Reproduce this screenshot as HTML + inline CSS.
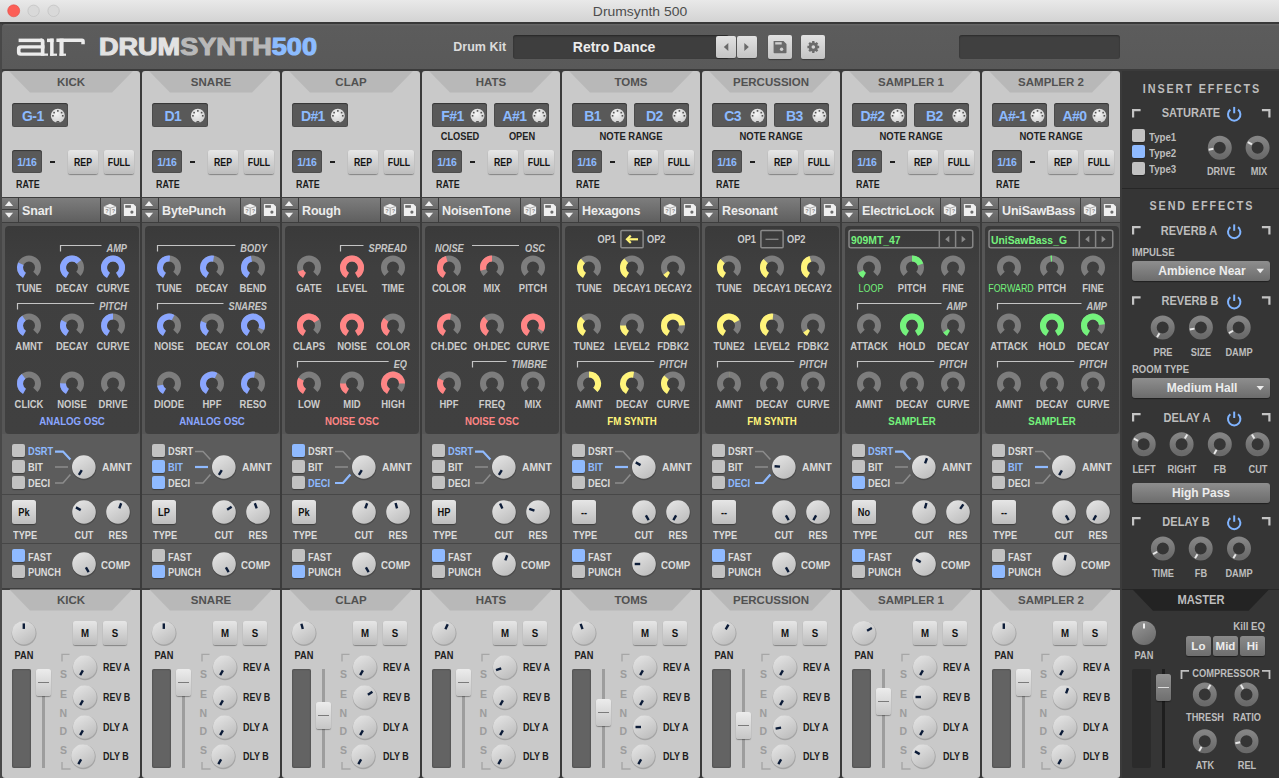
<!DOCTYPE html>
<html><head><meta charset="utf-8"><style>
html,body{margin:0;padding:0;width:1279px;height:778px;overflow:hidden;background:#3b3b3b;}
div{position:absolute;box-sizing:border-box;}
.t{white-space:nowrap;font-family:"Liberation Sans",sans-serif;}
svg{position:absolute;left:0;top:0;}
</style></head><body>
<div style="left:0px;top:0px;width:1279px;height:778px;background:#3b3b3b;border-radius:0px;"></div><div style="left:0px;top:0px;width:1279px;height:22px;background:linear-gradient(#e9e9e9,#d3d3d3);border-radius:0px;"></div><div style="left:0px;top:22px;width:1279px;height:2px;background:#383838;border-radius:0px;"></div><div style="left:0px;top:24px;width:2px;height:754px;background:#484848;border-radius:0px;"></div><div style="left:2px;top:24px;width:1277px;height:45px;background:linear-gradient(#6a6a6a,#5c5c5c 2px,#595959);border-radius:0px;border-radius:3px 0 0 0;"></div><div style="left:513.2px;top:35.2px;width:216px;height:23.4px;background:#3e3e3e;border-radius:3px;box-shadow:inset 0 1px 2px rgba(0,0,0,0.4);"></div><div style="left:716.2px;top:36px;width:19.7px;height:22.2px;background:linear-gradient(#e2e2e2,#c4c4c4);border-radius:2px;box-shadow:0 1px 1px rgba(0,0,0,0.35);"></div><div style="left:737px;top:36px;width:19.8px;height:22.2px;background:linear-gradient(#e2e2e2,#c4c4c4);border-radius:2px;box-shadow:0 1px 1px rgba(0,0,0,0.35);"></div><div style="left:767.9px;top:35.2px;width:23.8px;height:23.7px;background:linear-gradient(#e2e2e2,#c4c4c4);border-radius:2px;box-shadow:0 1px 1px rgba(0,0,0,0.35);"></div><div style="left:801.4px;top:35.2px;width:23.9px;height:23.7px;background:linear-gradient(#e2e2e2,#c4c4c4);border-radius:2px;box-shadow:0 1px 1px rgba(0,0,0,0.35);"></div><div style="left:959px;top:35.1px;width:161.2px;height:23.9px;background:#404040;border-radius:3px;box-shadow:inset 0 1px 2px rgba(0,0,0,0.35);"></div><div style="left:2px;top:71px;width:138px;height:126px;background:#c9c9c9;border-radius:0px;border-radius:3px 3px 0 0;"></div><div style="left:12.25px;top:103px;width:55.6px;height:23.9px;background:#595959;border-radius:2.5px;box-shadow:inset 0 1px 1px rgba(0,0,0,0.3), inset 0 0 0 1px rgba(0,0,0,0.12);"></div><div style="left:12px;top:150px;width:29.7px;height:23.3px;background:#595959;border-radius:2.5px;box-shadow:inset 0 1px 1px rgba(0,0,0,0.3), inset 0 0 0 1px rgba(0,0,0,0.12);"></div><div style="left:50px;top:161px;width:5px;height:2.2px;background:#1e1e1e;border-radius:0px;"></div><div style="left:67.5px;top:150px;width:30.5px;height:24px;background:linear-gradient(#e6e6e6,#bdbdbd);border-radius:2.5px;box-shadow:0 1px 1px rgba(0,0,0,0.35);"></div><div style="left:103.7px;top:150px;width:30px;height:24px;background:linear-gradient(#e6e6e6,#bdbdbd);border-radius:2.5px;box-shadow:0 1px 1px rgba(0,0,0,0.35);"></div><div style="left:2px;top:197px;width:138px;height:26px;background:#3d3d3d;border-radius:0px;"></div><div style="left:2px;top:198px;width:16px;height:11px;background:linear-gradient(#7c7c7c,#6a6a6a);border-radius:0px;"></div><div style="left:2px;top:210px;width:16px;height:12px;background:linear-gradient(#747474,#626262);border-radius:0px;"></div><div style="left:19px;top:198px;width:81px;height:24px;background:linear-gradient(#7d7d7d,#5f5f5f);border-radius:0px;"></div><div style="left:101px;top:198px;width:19px;height:24px;background:linear-gradient(#7d7d7d,#5f5f5f);border-radius:0px;"></div><div style="left:121px;top:198px;width:19px;height:24px;background:linear-gradient(#7d7d7d,#5f5f5f);border-radius:0px;"></div><div style="left:2px;top:223px;width:138px;height:366px;background:#565656;border-radius:0px;"></div><div style="left:5.4px;top:226.2px;width:133.4px;height:207.8px;background:linear-gradient(#3a3a3a,#3f3f3f 20%,#404040);border-radius:4px;"></div><div style="left:2px;top:434px;width:138px;height:154px;background:#5c5c5c;border-radius:0px;"></div><div style="left:2px;top:494px;width:138px;height:1px;background:#474747;border-radius:0px;"></div><div style="left:2px;top:543px;width:138px;height:1px;background:#474747;border-radius:0px;"></div><div style="left:2px;top:587.5px;width:138px;height:2px;background:#3e3e3e;border-radius:0px;"></div><div style="left:12px;top:444px;width:13px;height:13px;background:#c2c2c2;border-radius:2px;box-shadow:0 1px 1px rgba(0,0,0,0.35);"></div><div style="left:12px;top:460px;width:13px;height:13px;background:#c2c2c2;border-radius:2px;box-shadow:0 1px 1px rgba(0,0,0,0.35);"></div><div style="left:12px;top:476px;width:13px;height:13px;background:#c2c2c2;border-radius:2px;box-shadow:0 1px 1px rgba(0,0,0,0.35);"></div><div style="left:12px;top:500.2px;width:24px;height:24px;background:linear-gradient(#e6e6e6,#bdbdbd);border-radius:2.5px;box-shadow:0 1px 1px rgba(0,0,0,0.35);"></div><div style="left:12px;top:549.4px;width:13px;height:13px;background:#8fbaff;border-radius:2px;box-shadow:0 1px 1px rgba(0,0,0,0.35);"></div><div style="left:12px;top:565.0px;width:13px;height:13px;background:#c2c2c2;border-radius:2px;box-shadow:0 1px 1px rgba(0,0,0,0.35);"></div><div style="left:2px;top:589.5px;width:138px;height:188.5px;background:#c9c9c9;border-radius:0px;border-radius:0 0 3px 3px;"></div><div style="left:73px;top:621px;width:24px;height:24px;background:linear-gradient(#e6e6e6,#bdbdbd);border-radius:2.5px;box-shadow:0 1px 1px rgba(0,0,0,0.35);"></div><div style="left:102.8px;top:621px;width:24.2px;height:24px;background:linear-gradient(#e6e6e6,#bdbdbd);border-radius:2.5px;box-shadow:0 1px 1px rgba(0,0,0,0.35);"></div><div style="left:12px;top:669px;width:19px;height:99px;background:#636363;border-radius:2px;box-shadow:inset 0 0 2px rgba(0,0,0,0.45);"></div><div style="left:42.2px;top:669px;width:2.8px;height:99px;background:#9d9d9d;border-radius:0px;"></div><div style="left:36px;top:668.8px;width:14.8px;height:27.3px;background:linear-gradient(#ececec,#c6c6c6);border-radius:2.5px;box-shadow:0 1px 1px rgba(0,0,0,0.35);"></div><div style="left:38px;top:682.1999999999999px;width:10.8px;height:1px;background:#7a7a7a;border-radius:0px;"></div><div style="left:142px;top:71px;width:138px;height:126px;background:#c9c9c9;border-radius:0px;border-radius:3px 3px 0 0;"></div><div style="left:152.25px;top:103px;width:55.6px;height:23.9px;background:#595959;border-radius:2.5px;box-shadow:inset 0 1px 1px rgba(0,0,0,0.3), inset 0 0 0 1px rgba(0,0,0,0.12);"></div><div style="left:152px;top:150px;width:29.7px;height:23.3px;background:#595959;border-radius:2.5px;box-shadow:inset 0 1px 1px rgba(0,0,0,0.3), inset 0 0 0 1px rgba(0,0,0,0.12);"></div><div style="left:190px;top:161px;width:5px;height:2.2px;background:#1e1e1e;border-radius:0px;"></div><div style="left:207.5px;top:150px;width:30.5px;height:24px;background:linear-gradient(#e6e6e6,#bdbdbd);border-radius:2.5px;box-shadow:0 1px 1px rgba(0,0,0,0.35);"></div><div style="left:243.7px;top:150px;width:30px;height:24px;background:linear-gradient(#e6e6e6,#bdbdbd);border-radius:2.5px;box-shadow:0 1px 1px rgba(0,0,0,0.35);"></div><div style="left:142px;top:197px;width:138px;height:26px;background:#3d3d3d;border-radius:0px;"></div><div style="left:142px;top:198px;width:16px;height:11px;background:linear-gradient(#7c7c7c,#6a6a6a);border-radius:0px;"></div><div style="left:142px;top:210px;width:16px;height:12px;background:linear-gradient(#747474,#626262);border-radius:0px;"></div><div style="left:159px;top:198px;width:81px;height:24px;background:linear-gradient(#7d7d7d,#5f5f5f);border-radius:0px;"></div><div style="left:241px;top:198px;width:19px;height:24px;background:linear-gradient(#7d7d7d,#5f5f5f);border-radius:0px;"></div><div style="left:261px;top:198px;width:19px;height:24px;background:linear-gradient(#7d7d7d,#5f5f5f);border-radius:0px;"></div><div style="left:142px;top:223px;width:138px;height:366px;background:#565656;border-radius:0px;"></div><div style="left:145.4px;top:226.2px;width:133.4px;height:207.8px;background:linear-gradient(#3a3a3a,#3f3f3f 20%,#404040);border-radius:4px;"></div><div style="left:142px;top:434px;width:138px;height:154px;background:#5c5c5c;border-radius:0px;"></div><div style="left:142px;top:494px;width:138px;height:1px;background:#474747;border-radius:0px;"></div><div style="left:142px;top:543px;width:138px;height:1px;background:#474747;border-radius:0px;"></div><div style="left:142px;top:587.5px;width:138px;height:2px;background:#3e3e3e;border-radius:0px;"></div><div style="left:152px;top:444px;width:13px;height:13px;background:#c2c2c2;border-radius:2px;box-shadow:0 1px 1px rgba(0,0,0,0.35);"></div><div style="left:152px;top:460px;width:13px;height:13px;background:#8fbaff;border-radius:2px;box-shadow:0 1px 1px rgba(0,0,0,0.35);"></div><div style="left:152px;top:476px;width:13px;height:13px;background:#8fbaff;border-radius:2px;box-shadow:0 1px 1px rgba(0,0,0,0.35);"></div><div style="left:152px;top:500.2px;width:24px;height:24px;background:linear-gradient(#e6e6e6,#bdbdbd);border-radius:2.5px;box-shadow:0 1px 1px rgba(0,0,0,0.35);"></div><div style="left:152px;top:549.4px;width:13px;height:13px;background:#c2c2c2;border-radius:2px;box-shadow:0 1px 1px rgba(0,0,0,0.35);"></div><div style="left:152px;top:565.0px;width:13px;height:13px;background:#8fbaff;border-radius:2px;box-shadow:0 1px 1px rgba(0,0,0,0.35);"></div><div style="left:142px;top:589.5px;width:138px;height:188.5px;background:#c9c9c9;border-radius:0px;border-radius:0 0 3px 3px;"></div><div style="left:213px;top:621px;width:24px;height:24px;background:linear-gradient(#e6e6e6,#bdbdbd);border-radius:2.5px;box-shadow:0 1px 1px rgba(0,0,0,0.35);"></div><div style="left:242.8px;top:621px;width:24.2px;height:24px;background:linear-gradient(#e6e6e6,#bdbdbd);border-radius:2.5px;box-shadow:0 1px 1px rgba(0,0,0,0.35);"></div><div style="left:152px;top:669px;width:19px;height:99px;background:#636363;border-radius:2px;box-shadow:inset 0 0 2px rgba(0,0,0,0.45);"></div><div style="left:182.2px;top:669px;width:2.8px;height:99px;background:#9d9d9d;border-radius:0px;"></div><div style="left:176px;top:668.8px;width:14.8px;height:27.3px;background:linear-gradient(#ececec,#c6c6c6);border-radius:2.5px;box-shadow:0 1px 1px rgba(0,0,0,0.35);"></div><div style="left:178px;top:682.1999999999999px;width:10.8px;height:1px;background:#7a7a7a;border-radius:0px;"></div><div style="left:282px;top:71px;width:138px;height:126px;background:#c9c9c9;border-radius:0px;border-radius:3px 3px 0 0;"></div><div style="left:292.25px;top:103px;width:55.6px;height:23.9px;background:#595959;border-radius:2.5px;box-shadow:inset 0 1px 1px rgba(0,0,0,0.3), inset 0 0 0 1px rgba(0,0,0,0.12);"></div><div style="left:292px;top:150px;width:29.7px;height:23.3px;background:#595959;border-radius:2.5px;box-shadow:inset 0 1px 1px rgba(0,0,0,0.3), inset 0 0 0 1px rgba(0,0,0,0.12);"></div><div style="left:330px;top:161px;width:5px;height:2.2px;background:#1e1e1e;border-radius:0px;"></div><div style="left:347.5px;top:150px;width:30.5px;height:24px;background:linear-gradient(#e6e6e6,#bdbdbd);border-radius:2.5px;box-shadow:0 1px 1px rgba(0,0,0,0.35);"></div><div style="left:383.7px;top:150px;width:30px;height:24px;background:linear-gradient(#e6e6e6,#bdbdbd);border-radius:2.5px;box-shadow:0 1px 1px rgba(0,0,0,0.35);"></div><div style="left:282px;top:197px;width:138px;height:26px;background:#3d3d3d;border-radius:0px;"></div><div style="left:282px;top:198px;width:16px;height:11px;background:linear-gradient(#7c7c7c,#6a6a6a);border-radius:0px;"></div><div style="left:282px;top:210px;width:16px;height:12px;background:linear-gradient(#747474,#626262);border-radius:0px;"></div><div style="left:299px;top:198px;width:81px;height:24px;background:linear-gradient(#7d7d7d,#5f5f5f);border-radius:0px;"></div><div style="left:381px;top:198px;width:19px;height:24px;background:linear-gradient(#7d7d7d,#5f5f5f);border-radius:0px;"></div><div style="left:401px;top:198px;width:19px;height:24px;background:linear-gradient(#7d7d7d,#5f5f5f);border-radius:0px;"></div><div style="left:282px;top:223px;width:138px;height:366px;background:#565656;border-radius:0px;"></div><div style="left:285.4px;top:226.2px;width:133.4px;height:207.8px;background:linear-gradient(#3a3a3a,#3f3f3f 20%,#404040);border-radius:4px;"></div><div style="left:282px;top:434px;width:138px;height:154px;background:#5c5c5c;border-radius:0px;"></div><div style="left:282px;top:494px;width:138px;height:1px;background:#474747;border-radius:0px;"></div><div style="left:282px;top:543px;width:138px;height:1px;background:#474747;border-radius:0px;"></div><div style="left:282px;top:587.5px;width:138px;height:2px;background:#3e3e3e;border-radius:0px;"></div><div style="left:292px;top:444px;width:13px;height:13px;background:#8fbaff;border-radius:2px;box-shadow:0 1px 1px rgba(0,0,0,0.35);"></div><div style="left:292px;top:460px;width:13px;height:13px;background:#c2c2c2;border-radius:2px;box-shadow:0 1px 1px rgba(0,0,0,0.35);"></div><div style="left:292px;top:476px;width:13px;height:13px;background:#c2c2c2;border-radius:2px;box-shadow:0 1px 1px rgba(0,0,0,0.35);"></div><div style="left:292px;top:500.2px;width:24px;height:24px;background:linear-gradient(#e6e6e6,#bdbdbd);border-radius:2.5px;box-shadow:0 1px 1px rgba(0,0,0,0.35);"></div><div style="left:292px;top:549.4px;width:13px;height:13px;background:#c2c2c2;border-radius:2px;box-shadow:0 1px 1px rgba(0,0,0,0.35);"></div><div style="left:292px;top:565.0px;width:13px;height:13px;background:#8fbaff;border-radius:2px;box-shadow:0 1px 1px rgba(0,0,0,0.35);"></div><div style="left:282px;top:589.5px;width:138px;height:188.5px;background:#c9c9c9;border-radius:0px;border-radius:0 0 3px 3px;"></div><div style="left:353px;top:621px;width:24px;height:24px;background:linear-gradient(#e6e6e6,#bdbdbd);border-radius:2.5px;box-shadow:0 1px 1px rgba(0,0,0,0.35);"></div><div style="left:382.8px;top:621px;width:24.2px;height:24px;background:linear-gradient(#e6e6e6,#bdbdbd);border-radius:2.5px;box-shadow:0 1px 1px rgba(0,0,0,0.35);"></div><div style="left:292px;top:669px;width:19px;height:99px;background:#636363;border-radius:2px;box-shadow:inset 0 0 2px rgba(0,0,0,0.45);"></div><div style="left:322.2px;top:669px;width:2.8px;height:99px;background:#9d9d9d;border-radius:0px;"></div><div style="left:316px;top:702px;width:14.8px;height:27.3px;background:linear-gradient(#ececec,#c6c6c6);border-radius:2.5px;box-shadow:0 1px 1px rgba(0,0,0,0.35);"></div><div style="left:318px;top:715.4px;width:10.8px;height:1px;background:#7a7a7a;border-radius:0px;"></div><div style="left:422px;top:71px;width:138px;height:126px;background:#c9c9c9;border-radius:0px;border-radius:3px 3px 0 0;"></div><div style="left:431.9px;top:103px;width:55.6px;height:23.9px;background:#595959;border-radius:2.5px;box-shadow:inset 0 1px 1px rgba(0,0,0,0.3), inset 0 0 0 1px rgba(0,0,0,0.12);"></div><div style="left:493.8px;top:103px;width:55.6px;height:23.9px;background:#595959;border-radius:2.5px;box-shadow:inset 0 1px 1px rgba(0,0,0,0.3), inset 0 0 0 1px rgba(0,0,0,0.12);"></div><div style="left:432px;top:150px;width:29.7px;height:23.3px;background:#595959;border-radius:2.5px;box-shadow:inset 0 1px 1px rgba(0,0,0,0.3), inset 0 0 0 1px rgba(0,0,0,0.12);"></div><div style="left:470px;top:161px;width:5px;height:2.2px;background:#1e1e1e;border-radius:0px;"></div><div style="left:487.5px;top:150px;width:30.5px;height:24px;background:linear-gradient(#e6e6e6,#bdbdbd);border-radius:2.5px;box-shadow:0 1px 1px rgba(0,0,0,0.35);"></div><div style="left:523.7px;top:150px;width:30px;height:24px;background:linear-gradient(#e6e6e6,#bdbdbd);border-radius:2.5px;box-shadow:0 1px 1px rgba(0,0,0,0.35);"></div><div style="left:422px;top:197px;width:138px;height:26px;background:#3d3d3d;border-radius:0px;"></div><div style="left:422px;top:198px;width:16px;height:11px;background:linear-gradient(#7c7c7c,#6a6a6a);border-radius:0px;"></div><div style="left:422px;top:210px;width:16px;height:12px;background:linear-gradient(#747474,#626262);border-radius:0px;"></div><div style="left:439px;top:198px;width:81px;height:24px;background:linear-gradient(#7d7d7d,#5f5f5f);border-radius:0px;"></div><div style="left:521px;top:198px;width:19px;height:24px;background:linear-gradient(#7d7d7d,#5f5f5f);border-radius:0px;"></div><div style="left:541px;top:198px;width:19px;height:24px;background:linear-gradient(#7d7d7d,#5f5f5f);border-radius:0px;"></div><div style="left:422px;top:223px;width:138px;height:366px;background:#565656;border-radius:0px;"></div><div style="left:425.4px;top:226.2px;width:133.4px;height:207.8px;background:linear-gradient(#3a3a3a,#3f3f3f 20%,#404040);border-radius:4px;"></div><div style="left:422px;top:434px;width:138px;height:154px;background:#5c5c5c;border-radius:0px;"></div><div style="left:422px;top:494px;width:138px;height:1px;background:#474747;border-radius:0px;"></div><div style="left:422px;top:543px;width:138px;height:1px;background:#474747;border-radius:0px;"></div><div style="left:422px;top:587.5px;width:138px;height:2px;background:#3e3e3e;border-radius:0px;"></div><div style="left:432px;top:444px;width:13px;height:13px;background:#c2c2c2;border-radius:2px;box-shadow:0 1px 1px rgba(0,0,0,0.35);"></div><div style="left:432px;top:460px;width:13px;height:13px;background:#c2c2c2;border-radius:2px;box-shadow:0 1px 1px rgba(0,0,0,0.35);"></div><div style="left:432px;top:476px;width:13px;height:13px;background:#c2c2c2;border-radius:2px;box-shadow:0 1px 1px rgba(0,0,0,0.35);"></div><div style="left:432px;top:500.2px;width:24px;height:24px;background:linear-gradient(#e6e6e6,#bdbdbd);border-radius:2.5px;box-shadow:0 1px 1px rgba(0,0,0,0.35);"></div><div style="left:432px;top:549.4px;width:13px;height:13px;background:#8fbaff;border-radius:2px;box-shadow:0 1px 1px rgba(0,0,0,0.35);"></div><div style="left:432px;top:565.0px;width:13px;height:13px;background:#c2c2c2;border-radius:2px;box-shadow:0 1px 1px rgba(0,0,0,0.35);"></div><div style="left:422px;top:589.5px;width:138px;height:188.5px;background:#c9c9c9;border-radius:0px;border-radius:0 0 3px 3px;"></div><div style="left:493px;top:621px;width:24px;height:24px;background:linear-gradient(#e6e6e6,#bdbdbd);border-radius:2.5px;box-shadow:0 1px 1px rgba(0,0,0,0.35);"></div><div style="left:522.8px;top:621px;width:24.2px;height:24px;background:linear-gradient(#e6e6e6,#bdbdbd);border-radius:2.5px;box-shadow:0 1px 1px rgba(0,0,0,0.35);"></div><div style="left:432px;top:669px;width:19px;height:99px;background:#636363;border-radius:2px;box-shadow:inset 0 0 2px rgba(0,0,0,0.45);"></div><div style="left:462.2px;top:669px;width:2.8px;height:99px;background:#9d9d9d;border-radius:0px;"></div><div style="left:456px;top:668.7px;width:14.8px;height:27.3px;background:linear-gradient(#ececec,#c6c6c6);border-radius:2.5px;box-shadow:0 1px 1px rgba(0,0,0,0.35);"></div><div style="left:458px;top:682.1px;width:10.8px;height:1px;background:#7a7a7a;border-radius:0px;"></div><div style="left:562px;top:71px;width:138px;height:126px;background:#c9c9c9;border-radius:0px;border-radius:3px 3px 0 0;"></div><div style="left:571.9px;top:103px;width:55.6px;height:23.9px;background:#595959;border-radius:2.5px;box-shadow:inset 0 1px 1px rgba(0,0,0,0.3), inset 0 0 0 1px rgba(0,0,0,0.12);"></div><div style="left:633.8px;top:103px;width:55.6px;height:23.9px;background:#595959;border-radius:2.5px;box-shadow:inset 0 1px 1px rgba(0,0,0,0.3), inset 0 0 0 1px rgba(0,0,0,0.12);"></div><div style="left:572px;top:150px;width:29.7px;height:23.3px;background:#595959;border-radius:2.5px;box-shadow:inset 0 1px 1px rgba(0,0,0,0.3), inset 0 0 0 1px rgba(0,0,0,0.12);"></div><div style="left:610px;top:161px;width:5px;height:2.2px;background:#1e1e1e;border-radius:0px;"></div><div style="left:627.5px;top:150px;width:30.5px;height:24px;background:linear-gradient(#e6e6e6,#bdbdbd);border-radius:2.5px;box-shadow:0 1px 1px rgba(0,0,0,0.35);"></div><div style="left:663.7px;top:150px;width:30px;height:24px;background:linear-gradient(#e6e6e6,#bdbdbd);border-radius:2.5px;box-shadow:0 1px 1px rgba(0,0,0,0.35);"></div><div style="left:562px;top:197px;width:138px;height:26px;background:#3d3d3d;border-radius:0px;"></div><div style="left:562px;top:198px;width:16px;height:11px;background:linear-gradient(#7c7c7c,#6a6a6a);border-radius:0px;"></div><div style="left:562px;top:210px;width:16px;height:12px;background:linear-gradient(#747474,#626262);border-radius:0px;"></div><div style="left:579px;top:198px;width:81px;height:24px;background:linear-gradient(#7d7d7d,#5f5f5f);border-radius:0px;"></div><div style="left:661px;top:198px;width:19px;height:24px;background:linear-gradient(#7d7d7d,#5f5f5f);border-radius:0px;"></div><div style="left:681px;top:198px;width:19px;height:24px;background:linear-gradient(#7d7d7d,#5f5f5f);border-radius:0px;"></div><div style="left:562px;top:223px;width:138px;height:366px;background:#565656;border-radius:0px;"></div><div style="left:565.4px;top:226.2px;width:133.4px;height:207.8px;background:linear-gradient(#3a3a3a,#3f3f3f 20%,#404040);border-radius:4px;"></div><div style="left:562px;top:434px;width:138px;height:154px;background:#5c5c5c;border-radius:0px;"></div><div style="left:562px;top:494px;width:138px;height:1px;background:#474747;border-radius:0px;"></div><div style="left:562px;top:543px;width:138px;height:1px;background:#474747;border-radius:0px;"></div><div style="left:562px;top:587.5px;width:138px;height:2px;background:#3e3e3e;border-radius:0px;"></div><div style="left:572px;top:444px;width:13px;height:13px;background:#c2c2c2;border-radius:2px;box-shadow:0 1px 1px rgba(0,0,0,0.35);"></div><div style="left:572px;top:460px;width:13px;height:13px;background:#8fbaff;border-radius:2px;box-shadow:0 1px 1px rgba(0,0,0,0.35);"></div><div style="left:572px;top:476px;width:13px;height:13px;background:#c2c2c2;border-radius:2px;box-shadow:0 1px 1px rgba(0,0,0,0.35);"></div><div style="left:572px;top:500.2px;width:24px;height:24px;background:linear-gradient(#e6e6e6,#bdbdbd);border-radius:2.5px;box-shadow:0 1px 1px rgba(0,0,0,0.35);"></div><div style="left:572px;top:549.4px;width:13px;height:13px;background:#8fbaff;border-radius:2px;box-shadow:0 1px 1px rgba(0,0,0,0.35);"></div><div style="left:572px;top:565.0px;width:13px;height:13px;background:#c2c2c2;border-radius:2px;box-shadow:0 1px 1px rgba(0,0,0,0.35);"></div><div style="left:562px;top:589.5px;width:138px;height:188.5px;background:#c9c9c9;border-radius:0px;border-radius:0 0 3px 3px;"></div><div style="left:633px;top:621px;width:24px;height:24px;background:linear-gradient(#e6e6e6,#bdbdbd);border-radius:2.5px;box-shadow:0 1px 1px rgba(0,0,0,0.35);"></div><div style="left:662.8px;top:621px;width:24.2px;height:24px;background:linear-gradient(#e6e6e6,#bdbdbd);border-radius:2.5px;box-shadow:0 1px 1px rgba(0,0,0,0.35);"></div><div style="left:572px;top:669px;width:19px;height:99px;background:#636363;border-radius:2px;box-shadow:inset 0 0 2px rgba(0,0,0,0.45);"></div><div style="left:602.2px;top:669px;width:2.8px;height:99px;background:#9d9d9d;border-radius:0px;"></div><div style="left:596px;top:698.7px;width:14.8px;height:27.3px;background:linear-gradient(#ececec,#c6c6c6);border-radius:2.5px;box-shadow:0 1px 1px rgba(0,0,0,0.35);"></div><div style="left:598px;top:712.1px;width:10.8px;height:1px;background:#7a7a7a;border-radius:0px;"></div><div style="left:702px;top:71px;width:138px;height:126px;background:#c9c9c9;border-radius:0px;border-radius:3px 3px 0 0;"></div><div style="left:711.9px;top:103px;width:55.6px;height:23.9px;background:#595959;border-radius:2.5px;box-shadow:inset 0 1px 1px rgba(0,0,0,0.3), inset 0 0 0 1px rgba(0,0,0,0.12);"></div><div style="left:773.8px;top:103px;width:55.6px;height:23.9px;background:#595959;border-radius:2.5px;box-shadow:inset 0 1px 1px rgba(0,0,0,0.3), inset 0 0 0 1px rgba(0,0,0,0.12);"></div><div style="left:712px;top:150px;width:29.7px;height:23.3px;background:#595959;border-radius:2.5px;box-shadow:inset 0 1px 1px rgba(0,0,0,0.3), inset 0 0 0 1px rgba(0,0,0,0.12);"></div><div style="left:750px;top:161px;width:5px;height:2.2px;background:#1e1e1e;border-radius:0px;"></div><div style="left:767.5px;top:150px;width:30.5px;height:24px;background:linear-gradient(#e6e6e6,#bdbdbd);border-radius:2.5px;box-shadow:0 1px 1px rgba(0,0,0,0.35);"></div><div style="left:803.7px;top:150px;width:30px;height:24px;background:linear-gradient(#e6e6e6,#bdbdbd);border-radius:2.5px;box-shadow:0 1px 1px rgba(0,0,0,0.35);"></div><div style="left:702px;top:197px;width:138px;height:26px;background:#3d3d3d;border-radius:0px;"></div><div style="left:702px;top:198px;width:16px;height:11px;background:linear-gradient(#7c7c7c,#6a6a6a);border-radius:0px;"></div><div style="left:702px;top:210px;width:16px;height:12px;background:linear-gradient(#747474,#626262);border-radius:0px;"></div><div style="left:719px;top:198px;width:81px;height:24px;background:linear-gradient(#7d7d7d,#5f5f5f);border-radius:0px;"></div><div style="left:801px;top:198px;width:19px;height:24px;background:linear-gradient(#7d7d7d,#5f5f5f);border-radius:0px;"></div><div style="left:821px;top:198px;width:19px;height:24px;background:linear-gradient(#7d7d7d,#5f5f5f);border-radius:0px;"></div><div style="left:702px;top:223px;width:138px;height:366px;background:#565656;border-radius:0px;"></div><div style="left:705.4px;top:226.2px;width:133.4px;height:207.8px;background:linear-gradient(#3a3a3a,#3f3f3f 20%,#404040);border-radius:4px;"></div><div style="left:702px;top:434px;width:138px;height:154px;background:#5c5c5c;border-radius:0px;"></div><div style="left:702px;top:494px;width:138px;height:1px;background:#474747;border-radius:0px;"></div><div style="left:702px;top:543px;width:138px;height:1px;background:#474747;border-radius:0px;"></div><div style="left:702px;top:587.5px;width:138px;height:2px;background:#3e3e3e;border-radius:0px;"></div><div style="left:712px;top:444px;width:13px;height:13px;background:#c2c2c2;border-radius:2px;box-shadow:0 1px 1px rgba(0,0,0,0.35);"></div><div style="left:712px;top:460px;width:13px;height:13px;background:#c2c2c2;border-radius:2px;box-shadow:0 1px 1px rgba(0,0,0,0.35);"></div><div style="left:712px;top:476px;width:13px;height:13px;background:#c2c2c2;border-radius:2px;box-shadow:0 1px 1px rgba(0,0,0,0.35);"></div><div style="left:712px;top:500.2px;width:24px;height:24px;background:linear-gradient(#e6e6e6,#bdbdbd);border-radius:2.5px;box-shadow:0 1px 1px rgba(0,0,0,0.35);"></div><div style="left:712px;top:549.4px;width:13px;height:13px;background:#8fbaff;border-radius:2px;box-shadow:0 1px 1px rgba(0,0,0,0.35);"></div><div style="left:712px;top:565.0px;width:13px;height:13px;background:#c2c2c2;border-radius:2px;box-shadow:0 1px 1px rgba(0,0,0,0.35);"></div><div style="left:702px;top:589.5px;width:138px;height:188.5px;background:#c9c9c9;border-radius:0px;border-radius:0 0 3px 3px;"></div><div style="left:773px;top:621px;width:24px;height:24px;background:linear-gradient(#e6e6e6,#bdbdbd);border-radius:2.5px;box-shadow:0 1px 1px rgba(0,0,0,0.35);"></div><div style="left:802.8px;top:621px;width:24.2px;height:24px;background:linear-gradient(#e6e6e6,#bdbdbd);border-radius:2.5px;box-shadow:0 1px 1px rgba(0,0,0,0.35);"></div><div style="left:712px;top:669px;width:19px;height:99px;background:#636363;border-radius:2px;box-shadow:inset 0 0 2px rgba(0,0,0,0.45);"></div><div style="left:742.2px;top:669px;width:2.8px;height:99px;background:#9d9d9d;border-radius:0px;"></div><div style="left:736px;top:711.8px;width:14.8px;height:27.3px;background:linear-gradient(#ececec,#c6c6c6);border-radius:2.5px;box-shadow:0 1px 1px rgba(0,0,0,0.35);"></div><div style="left:738px;top:725.1999999999999px;width:10.8px;height:1px;background:#7a7a7a;border-radius:0px;"></div><div style="left:842px;top:71px;width:138px;height:126px;background:#c9c9c9;border-radius:0px;border-radius:3px 3px 0 0;"></div><div style="left:851.9px;top:103px;width:55.6px;height:23.9px;background:#595959;border-radius:2.5px;box-shadow:inset 0 1px 1px rgba(0,0,0,0.3), inset 0 0 0 1px rgba(0,0,0,0.12);"></div><div style="left:913.8px;top:103px;width:55.6px;height:23.9px;background:#595959;border-radius:2.5px;box-shadow:inset 0 1px 1px rgba(0,0,0,0.3), inset 0 0 0 1px rgba(0,0,0,0.12);"></div><div style="left:852px;top:150px;width:29.7px;height:23.3px;background:#595959;border-radius:2.5px;box-shadow:inset 0 1px 1px rgba(0,0,0,0.3), inset 0 0 0 1px rgba(0,0,0,0.12);"></div><div style="left:890px;top:161px;width:5px;height:2.2px;background:#1e1e1e;border-radius:0px;"></div><div style="left:907.5px;top:150px;width:30.5px;height:24px;background:linear-gradient(#e6e6e6,#bdbdbd);border-radius:2.5px;box-shadow:0 1px 1px rgba(0,0,0,0.35);"></div><div style="left:943.7px;top:150px;width:30px;height:24px;background:linear-gradient(#e6e6e6,#bdbdbd);border-radius:2.5px;box-shadow:0 1px 1px rgba(0,0,0,0.35);"></div><div style="left:842px;top:197px;width:138px;height:26px;background:#3d3d3d;border-radius:0px;"></div><div style="left:842px;top:198px;width:16px;height:11px;background:linear-gradient(#7c7c7c,#6a6a6a);border-radius:0px;"></div><div style="left:842px;top:210px;width:16px;height:12px;background:linear-gradient(#747474,#626262);border-radius:0px;"></div><div style="left:859px;top:198px;width:81px;height:24px;background:linear-gradient(#7d7d7d,#5f5f5f);border-radius:0px;"></div><div style="left:941px;top:198px;width:19px;height:24px;background:linear-gradient(#7d7d7d,#5f5f5f);border-radius:0px;"></div><div style="left:961px;top:198px;width:19px;height:24px;background:linear-gradient(#7d7d7d,#5f5f5f);border-radius:0px;"></div><div style="left:842px;top:223px;width:138px;height:366px;background:#565656;border-radius:0px;"></div><div style="left:845.4px;top:226.2px;width:133.4px;height:207.8px;background:linear-gradient(#3a3a3a,#3f3f3f 20%,#404040);border-radius:4px;"></div><div style="left:842px;top:434px;width:138px;height:154px;background:#5c5c5c;border-radius:0px;"></div><div style="left:842px;top:494px;width:138px;height:1px;background:#474747;border-radius:0px;"></div><div style="left:842px;top:543px;width:138px;height:1px;background:#474747;border-radius:0px;"></div><div style="left:842px;top:587.5px;width:138px;height:2px;background:#3e3e3e;border-radius:0px;"></div><div style="left:852px;top:444px;width:13px;height:13px;background:#c2c2c2;border-radius:2px;box-shadow:0 1px 1px rgba(0,0,0,0.35);"></div><div style="left:852px;top:460px;width:13px;height:13px;background:#c2c2c2;border-radius:2px;box-shadow:0 1px 1px rgba(0,0,0,0.35);"></div><div style="left:852px;top:476px;width:13px;height:13px;background:#8fbaff;border-radius:2px;box-shadow:0 1px 1px rgba(0,0,0,0.35);"></div><div style="left:852px;top:500.2px;width:24px;height:24px;background:linear-gradient(#e6e6e6,#bdbdbd);border-radius:2.5px;box-shadow:0 1px 1px rgba(0,0,0,0.35);"></div><div style="left:852px;top:549.4px;width:13px;height:13px;background:#8fbaff;border-radius:2px;box-shadow:0 1px 1px rgba(0,0,0,0.35);"></div><div style="left:852px;top:565.0px;width:13px;height:13px;background:#c2c2c2;border-radius:2px;box-shadow:0 1px 1px rgba(0,0,0,0.35);"></div><div style="left:842px;top:589.5px;width:138px;height:188.5px;background:#c9c9c9;border-radius:0px;border-radius:0 0 3px 3px;"></div><div style="left:913px;top:621px;width:24px;height:24px;background:linear-gradient(#e6e6e6,#bdbdbd);border-radius:2.5px;box-shadow:0 1px 1px rgba(0,0,0,0.35);"></div><div style="left:942.8px;top:621px;width:24.2px;height:24px;background:linear-gradient(#e6e6e6,#bdbdbd);border-radius:2.5px;box-shadow:0 1px 1px rgba(0,0,0,0.35);"></div><div style="left:852px;top:669px;width:19px;height:99px;background:#636363;border-radius:2px;box-shadow:inset 0 0 2px rgba(0,0,0,0.45);"></div><div style="left:882.2px;top:669px;width:2.8px;height:99px;background:#9d9d9d;border-radius:0px;"></div><div style="left:876px;top:687.7px;width:14.8px;height:27.3px;background:linear-gradient(#ececec,#c6c6c6);border-radius:2.5px;box-shadow:0 1px 1px rgba(0,0,0,0.35);"></div><div style="left:878px;top:701.1px;width:10.8px;height:1px;background:#7a7a7a;border-radius:0px;"></div><div style="left:982px;top:71px;width:138px;height:126px;background:#c9c9c9;border-radius:0px;border-radius:3px 3px 0 0;"></div><div style="left:991.9px;top:103px;width:55.6px;height:23.9px;background:#595959;border-radius:2.5px;box-shadow:inset 0 1px 1px rgba(0,0,0,0.3), inset 0 0 0 1px rgba(0,0,0,0.12);"></div><div style="left:1053.8px;top:103px;width:55.6px;height:23.9px;background:#595959;border-radius:2.5px;box-shadow:inset 0 1px 1px rgba(0,0,0,0.3), inset 0 0 0 1px rgba(0,0,0,0.12);"></div><div style="left:992px;top:150px;width:29.7px;height:23.3px;background:#595959;border-radius:2.5px;box-shadow:inset 0 1px 1px rgba(0,0,0,0.3), inset 0 0 0 1px rgba(0,0,0,0.12);"></div><div style="left:1030px;top:161px;width:5px;height:2.2px;background:#1e1e1e;border-radius:0px;"></div><div style="left:1047.5px;top:150px;width:30.5px;height:24px;background:linear-gradient(#e6e6e6,#bdbdbd);border-radius:2.5px;box-shadow:0 1px 1px rgba(0,0,0,0.35);"></div><div style="left:1083.7px;top:150px;width:30px;height:24px;background:linear-gradient(#e6e6e6,#bdbdbd);border-radius:2.5px;box-shadow:0 1px 1px rgba(0,0,0,0.35);"></div><div style="left:982px;top:197px;width:138px;height:26px;background:#3d3d3d;border-radius:0px;"></div><div style="left:982px;top:198px;width:16px;height:11px;background:linear-gradient(#7c7c7c,#6a6a6a);border-radius:0px;"></div><div style="left:982px;top:210px;width:16px;height:12px;background:linear-gradient(#747474,#626262);border-radius:0px;"></div><div style="left:999px;top:198px;width:81px;height:24px;background:linear-gradient(#7d7d7d,#5f5f5f);border-radius:0px;"></div><div style="left:1081px;top:198px;width:19px;height:24px;background:linear-gradient(#7d7d7d,#5f5f5f);border-radius:0px;"></div><div style="left:1101px;top:198px;width:19px;height:24px;background:linear-gradient(#7d7d7d,#5f5f5f);border-radius:0px;"></div><div style="left:982px;top:223px;width:138px;height:366px;background:#565656;border-radius:0px;"></div><div style="left:985.4px;top:226.2px;width:133.4px;height:207.8px;background:linear-gradient(#3a3a3a,#3f3f3f 20%,#404040);border-radius:4px;"></div><div style="left:982px;top:434px;width:138px;height:154px;background:#5c5c5c;border-radius:0px;"></div><div style="left:982px;top:494px;width:138px;height:1px;background:#474747;border-radius:0px;"></div><div style="left:982px;top:543px;width:138px;height:1px;background:#474747;border-radius:0px;"></div><div style="left:982px;top:587.5px;width:138px;height:2px;background:#3e3e3e;border-radius:0px;"></div><div style="left:992px;top:444px;width:13px;height:13px;background:#c2c2c2;border-radius:2px;box-shadow:0 1px 1px rgba(0,0,0,0.35);"></div><div style="left:992px;top:460px;width:13px;height:13px;background:#c2c2c2;border-radius:2px;box-shadow:0 1px 1px rgba(0,0,0,0.35);"></div><div style="left:992px;top:476px;width:13px;height:13px;background:#c2c2c2;border-radius:2px;box-shadow:0 1px 1px rgba(0,0,0,0.35);"></div><div style="left:992px;top:500.2px;width:24px;height:24px;background:linear-gradient(#e6e6e6,#bdbdbd);border-radius:2.5px;box-shadow:0 1px 1px rgba(0,0,0,0.35);"></div><div style="left:992px;top:549.4px;width:13px;height:13px;background:#c2c2c2;border-radius:2px;box-shadow:0 1px 1px rgba(0,0,0,0.35);"></div><div style="left:992px;top:565.0px;width:13px;height:13px;background:#8fbaff;border-radius:2px;box-shadow:0 1px 1px rgba(0,0,0,0.35);"></div><div style="left:982px;top:589.5px;width:138px;height:188.5px;background:#c9c9c9;border-radius:0px;border-radius:0 0 3px 3px;"></div><div style="left:1053px;top:621px;width:24px;height:24px;background:linear-gradient(#e6e6e6,#bdbdbd);border-radius:2.5px;box-shadow:0 1px 1px rgba(0,0,0,0.35);"></div><div style="left:1082.8px;top:621px;width:24.2px;height:24px;background:linear-gradient(#e6e6e6,#bdbdbd);border-radius:2.5px;box-shadow:0 1px 1px rgba(0,0,0,0.35);"></div><div style="left:992px;top:669px;width:19px;height:99px;background:#636363;border-radius:2px;box-shadow:inset 0 0 2px rgba(0,0,0,0.45);"></div><div style="left:1022.2px;top:669px;width:2.8px;height:99px;background:#9d9d9d;border-radius:0px;"></div><div style="left:1016px;top:668.7px;width:14.8px;height:27.3px;background:linear-gradient(#ececec,#c6c6c6);border-radius:2.5px;box-shadow:0 1px 1px rgba(0,0,0,0.35);"></div><div style="left:1018px;top:682.1px;width:10.8px;height:1px;background:#7a7a7a;border-radius:0px;"></div><div style="left:1122px;top:71px;width:157px;height:707px;background:#353535;border-radius:0px;"></div><div style="left:1132px;top:129.3px;width:13px;height:13px;background:#c2c2c2;border-radius:2px;box-shadow:0 1px 1px rgba(0,0,0,0.35);"></div><div style="left:1132px;top:145.4px;width:13px;height:13px;background:#8fbaff;border-radius:2px;box-shadow:0 1px 1px rgba(0,0,0,0.35);"></div><div style="left:1132px;top:161.5px;width:13px;height:13px;background:#c2c2c2;border-radius:2px;box-shadow:0 1px 1px rgba(0,0,0,0.35);"></div><div style="left:1122px;top:188px;width:157px;height:1.2px;background:#262626;border-radius:0px;"></div><div style="left:1132px;top:261.1px;width:137.8px;height:19.7px;background:linear-gradient(#8e8e8e,#6c6c6c);border-radius:3px;box-shadow:0 1px 1px rgba(0,0,0,0.4);"></div><div style="left:1132px;top:378px;width:137.8px;height:20.2px;background:linear-gradient(#8e8e8e,#6c6c6c);border-radius:3px;box-shadow:0 1px 1px rgba(0,0,0,0.4);"></div><div style="left:1132px;top:483.1px;width:138px;height:19.7px;background:linear-gradient(#8e8e8e,#6c6c6c);border-radius:3px;box-shadow:0 1px 1px rgba(0,0,0,0.4);"></div><div style="left:1122px;top:588.5px;width:157px;height:1px;background:#272727;border-radius:0px;"></div><div style="left:1186px;top:636.3px;width:24.8px;height:19.4px;background:linear-gradient(#8a8a8a,#6e6e6e);border-radius:2.5px;box-shadow:0 1px 1px rgba(0,0,0,0.4);"></div><div style="left:1213px;top:636.3px;width:25px;height:19.4px;background:linear-gradient(#8a8a8a,#6e6e6e);border-radius:2.5px;box-shadow:0 1px 1px rgba(0,0,0,0.4);"></div><div style="left:1240.1px;top:636.3px;width:24.8px;height:19.4px;background:linear-gradient(#8a8a8a,#6e6e6e);border-radius:2.5px;box-shadow:0 1px 1px rgba(0,0,0,0.4);"></div><div style="left:1132.3px;top:669px;width:18.4px;height:98.7px;background:#2b2b2b;border-radius:2px;"></div><div style="left:1162px;top:669px;width:3px;height:99px;background:#1e1e1e;border-radius:0px;"></div><div style="left:1156px;top:674px;width:15px;height:27px;background:linear-gradient(#939393,#6f6f6f);border-radius:2.5px;box-shadow:0 1px 1px rgba(0,0,0,0.4);"></div><div style="left:1158px;top:687px;width:11px;height:1.2px;background:#dcdcdc;border-radius:0px;"></div>
<svg width="1279" height="778" viewBox="0 0 1279 778"><defs>
<linearGradient id="lk" x1="0.2" y1="0" x2="0.8" y2="1"><stop offset="0" stop-color="#e4e4e4"/><stop offset="1" stop-color="#bcbcbc"/></linearGradient>
<linearGradient id="dk" x1="0" y1="0" x2="0" y2="1"><stop offset="0" stop-color="#848484"/><stop offset="1" stop-color="#6a6a6a"/></linearGradient>
<linearGradient id="mp" x1="0.2" y1="0" x2="0.8" y2="1"><stop offset="0" stop-color="#969696"/><stop offset="1" stop-color="#6a6a6a"/></linearGradient>
<radialGradient id="mi" cx="0.4" cy="0.35" r="0.7"><stop offset="0" stop-color="#f4f4f4"/><stop offset="1" stop-color="#cfcfcf"/></radialGradient>
</defs><circle cx="13.7" cy="10.8" r="6" fill="#fc5f57" stroke="#df4a43" stroke-width="0.6"/><circle cx="33.6" cy="10.8" r="5.7" fill="#d9d9d9" stroke="#c3c3c3" stroke-width="0.8"/><circle cx="53.6" cy="10.8" r="5.7" fill="#d9d9d9" stroke="#c3c3c3" stroke-width="0.8"/><rect x="18.60" y="38.60" width="23.50" height="3.50" rx="0" fill="#ececec"/><path d="M40.5,38.6 h1 a3 3 0 0 1 3,3 V55.8 h-3.7 V42.1 h-0.3 z" fill="#ececec"/><path d="M20.5,45.2 H44.5 V48.6 H21.5 a1.5 1.5 0 0 0 -1,1 V51.6 a1 1 0 0 0 1,1 H41 V53.6 H48 V55.8 H20.5 a3.6 3.6 0 0 1 -3.6,-3.6 V48.8 a3.6 3.6 0 0 1 3.6,-3.6 z" fill="#ececec"/><rect x="47.00" y="38.60" width="6.60" height="3.50" rx="0" fill="#ececec"/><rect x="50.10" y="38.60" width="3.50" height="17.20" rx="0" fill="#ececec"/><rect x="50.10" y="53.60" width="6.90" height="2.20" rx="0" fill="#ececec"/><path d="M56.4,38.6 H82 a2.8 2.8 0 0 1 2.8,2.8 V44.25 H81.3 V42.1 H56.4 z" fill="#ececec"/><rect x="59.50" y="38.60" width="4.10" height="17.20" rx="0" fill="#ececec"/><rect x="59.50" y="53.60" width="6.50" height="2.20" rx="0" fill="#ececec"/><polygon points="723.80,47.00 728.30,43.10 728.30,50.90" fill="#6a6a6a"/><polygon points="744.30,43.10 748.80,47.00 744.30,50.90" fill="#6a6a6a"/><path d="M773.6,41 H783.5 L786.5,44 V52.5 a0.8 0.8 0 0 1 -0.8,0.8 H774.4 a0.8 0.8 0 0 1 -0.8,-0.8 z" fill="#6b6b6b"/><rect x="775.2" y="42.2" width="6.5" height="2.3" fill="#d0d0d0"/><circle cx="781.6" cy="49.3" r="1.7" fill="#d0d0d0"/><polygon points="812.11,42.56 812.16,41.11 814.44,41.11 814.49,42.56 815.60,43.02 816.66,42.03 818.27,43.64 817.28,44.70 817.74,45.81 819.19,45.86 819.19,48.14 817.74,48.19 817.28,49.30 818.27,50.36 816.66,51.97 815.60,50.98 814.49,51.44 814.44,52.89 812.16,52.89 812.11,51.44 811.00,50.98 809.94,51.97 808.33,50.36 809.32,49.30 808.86,48.19 807.41,48.14 807.41,45.86 808.86,45.81 809.32,44.70 808.33,43.64 809.94,42.03 811.00,43.02" fill="#6b6b6b"/><circle cx="813.3" cy="47" r="1.8" fill="#d6d6d6"/><polygon points="9.00,71.00 133.00,71.00 112.00,92.50 30.00,92.50" fill="#b8b8b8"/><circle cx="57.85" cy="115.8" r="7" fill="url(#mi)"/><rect x="52.15" y="115.00" width="1.6" height="1.6" fill="#555"/><rect x="53.30" y="111.85" width="1.6" height="1.6" fill="#555"/><rect x="57.05" y="110.10" width="1.6" height="1.6" fill="#555"/><rect x="60.80" y="111.85" width="1.6" height="1.6" fill="#555"/><rect x="61.95" y="115.00" width="1.6" height="1.6" fill="#555"/><path d="M55.65,122.8 l1.2,-1.8 h2 l1.2,1.8 z" fill="#585858"/><polygon points="4.90,206.10 9.00,201.00 13.10,206.10" fill="#f0f0f0"/><polygon points="4.90,212.80 13.10,212.80 9.00,217.70" fill="#f0f0f0"/><path d="M110.0,203.8 L116.1,206.4 V213.4 L110.39999999999999,215.9 L103.8,213.4 V206.4 z" fill="#efefef"/><path d="M104.1,206.5 L110.2,208.20000000000002 L115.8,206.5" stroke="#8a8a8a" stroke-width="0.7" fill="none"/><line x1="110.2" y1="208.20000000000002" x2="110.2" y2="215.8" stroke="#8a8a8a" stroke-width="0.8"/><text x="106.89999999999999" y="213.3" font-size="5.5" font-weight="bold" fill="#8a8a8a" text-anchor="middle" font-family="Liberation Sans">?</text><text x="113.39999999999999" y="213.3" font-size="5.5" font-weight="bold" fill="#8a8a8a" text-anchor="middle" font-family="Liberation Sans">?</text><path d="M124.5,203.9 H133.4 L136.0,206.5 V215.5 a0.6 0.6 0 0 1 -0.6,0.6 H124.5 a0.6 0.6 0 0 1 -0.6,-0.6 V204.5 a0.6 0.6 0 0 1 0.6,-0.6 z" fill="#efefef"/><rect x="125.2" y="205.20000000000002" width="5.7" height="2.6" fill="#6a6a6a"/><circle cx="131.9" cy="212.1" r="1.6" fill="#6a6a6a"/><path d="M22.64,273.96A9,9 0 1 1 35.36,273.96" stroke="#7d7d7d" stroke-width="6" fill="none"/><path d="M24.50,275.39A9,9 0 0 1 20.84,263.80" stroke="#8aa6ff" stroke-width="6" fill="none"/><path d="M65.64,273.96A9,9 0 1 1 78.36,273.96" stroke="#7d7d7d" stroke-width="6" fill="none"/><path d="M67.50,275.39A9,9 0 1 1 78.89,261.81" stroke="#8aa6ff" stroke-width="6" fill="none"/><path d="M106.64,273.96A9,9 0 1 1 119.36,273.96" stroke="#7d7d7d" stroke-width="6" fill="none"/><path d="M108.50,275.39A9,9 0 1 1 117.50,275.39" stroke="#8aa6ff" stroke-width="6" fill="none"/><path d="M22.64,331.96A9,9 0 1 1 35.36,331.96" stroke="#7d7d7d" stroke-width="6" fill="none"/><path d="M24.50,333.39A9,9 0 0 1 23.97,318.14" stroke="#8aa6ff" stroke-width="6" fill="none"/><path d="M65.64,331.96A9,9 0 1 1 78.36,331.96" stroke="#7d7d7d" stroke-width="6" fill="none"/><path d="M67.50,333.39A9,9 0 0 1 64.05,321.37" stroke="#8aa6ff" stroke-width="6" fill="none"/><path d="M106.64,331.96A9,9 0 1 1 119.36,331.96" stroke="#7d7d7d" stroke-width="6" fill="none"/><path d="M108.50,333.39A9,9 0 0 1 113.00,316.60" stroke="#8aa6ff" stroke-width="6" fill="none"/><path d="M22.64,389.96A9,9 0 1 1 35.36,389.96" stroke="#7d7d7d" stroke-width="6" fill="none"/><path d="M24.50,391.39A9,9 0 0 1 23.58,376.41" stroke="#8aa6ff" stroke-width="6" fill="none"/><path d="M65.64,389.96A9,9 0 1 1 78.36,389.96" stroke="#7d7d7d" stroke-width="6" fill="none"/><path d="M67.50,391.39A9,9 0 0 1 63.01,383.29" stroke="#8aa6ff" stroke-width="6" fill="none"/><path d="M106.64,389.96A9,9 0 1 1 119.36,389.96" stroke="#7d7d7d" stroke-width="6" fill="none"/><polyline points="60.50,251.50 60.50,245.50 101.47,245.50" stroke="#c4c4c4" stroke-width="1.2" fill="none" stroke-linejoin="miter"/><polyline points="17.50,309.50 17.50,303.50 94.28,303.50" stroke="#c4c4c4" stroke-width="1.2" fill="none" stroke-linejoin="miter"/><polyline points="55.00,467.00 68.00,467.00" stroke="#8c8c8c" stroke-width="1.5" fill="none" stroke-linejoin="miter"/><polyline points="55.00,483.00 63.00,483.00 70.40,474.50" stroke="#8c8c8c" stroke-width="1.5" fill="none" stroke-linejoin="miter"/><polyline points="55.00,451.60 63.00,451.60 70.40,459.50" stroke="#8fbaff" stroke-width="2.2" fill="none" stroke-linejoin="miter"/><circle cx="84.10" cy="467.80" r="12.4" fill="rgba(0,0,0,0.18)"/><circle cx="83.80" cy="467.00" r="11.8" fill="url(#lk)"/><line x1="81.79" y1="470.22" x2="78.87" y2="474.89" stroke="#0c1c38" stroke-width="2.4" stroke-linecap="butt"/><circle cx="84.30" cy="512.80" r="12.4" fill="rgba(0,0,0,0.18)"/><circle cx="84.00" cy="512.00" r="11.8" fill="url(#lk)"/><line x1="80.71" y1="510.10" x2="75.95" y2="507.35" stroke="#0c1c38" stroke-width="2.4" stroke-linecap="butt"/><circle cx="118.30" cy="512.80" r="12.4" fill="rgba(0,0,0,0.18)"/><circle cx="118.00" cy="512.00" r="11.8" fill="url(#lk)"/><line x1="119.30" y1="508.43" x2="121.18" y2="503.26" stroke="#0c1c38" stroke-width="2.4" stroke-linecap="butt"/><circle cx="84.30" cy="564.80" r="12.4" fill="rgba(0,0,0,0.18)"/><circle cx="84.00" cy="564.00" r="11.8" fill="url(#lk)"/><line x1="85.90" y1="567.29" x2="88.65" y2="572.05" stroke="#0c1c38" stroke-width="2.4" stroke-linecap="butt"/><polygon points="9.60,589.50 132.00,589.50 112.00,610.60 30.00,610.60" fill="#b8b8b8"/><circle cx="24.10" cy="633.50" r="12.4" fill="rgba(0,0,0,0.18)"/><circle cx="23.80" cy="632.70" r="11.8" fill="url(#lk)"/><line x1="23.80" y1="628.90" x2="23.80" y2="623.40" stroke="#0c1c38" stroke-width="2.4" stroke-linecap="butt"/><polyline points="62.00,661.60 62.00,654.40 69.50,654.40" stroke="#a6a6a6" stroke-width="1.4" fill="none" stroke-linejoin="miter"/><polyline points="62.00,762.00 62.00,769.00 70.50,769.00" stroke="#a6a6a6" stroke-width="1.4" fill="none" stroke-linejoin="miter"/><circle cx="85.10" cy="667.80" r="12.4" fill="rgba(0,0,0,0.18)"/><circle cx="84.80" cy="667.00" r="11.8" fill="url(#lk)"/><line x1="82.90" y1="670.29" x2="80.15" y2="675.05" stroke="#0c1c38" stroke-width="2.4" stroke-linecap="butt"/><circle cx="85.10" cy="697.80" r="12.4" fill="rgba(0,0,0,0.18)"/><circle cx="84.80" cy="697.00" r="11.8" fill="url(#lk)"/><line x1="82.90" y1="700.29" x2="80.15" y2="705.05" stroke="#0c1c38" stroke-width="2.4" stroke-linecap="butt"/><circle cx="85.10" cy="727.80" r="12.4" fill="rgba(0,0,0,0.18)"/><circle cx="84.80" cy="727.00" r="11.8" fill="url(#lk)"/><line x1="82.90" y1="730.29" x2="80.15" y2="735.05" stroke="#0c1c38" stroke-width="2.4" stroke-linecap="butt"/><circle cx="83.30" cy="756.80" r="12.4" fill="rgba(0,0,0,0.18)"/><circle cx="83.00" cy="756.00" r="11.8" fill="url(#lk)"/><line x1="81.10" y1="759.29" x2="78.35" y2="764.05" stroke="#0c1c38" stroke-width="2.4" stroke-linecap="butt"/><polygon points="149.00,71.00 273.00,71.00 252.00,92.50 170.00,92.50" fill="#b8b8b8"/><circle cx="197.85" cy="115.8" r="7" fill="url(#mi)"/><rect x="192.15" y="115.00" width="1.6" height="1.6" fill="#555"/><rect x="193.30" y="111.85" width="1.6" height="1.6" fill="#555"/><rect x="197.05" y="110.10" width="1.6" height="1.6" fill="#555"/><rect x="200.80" y="111.85" width="1.6" height="1.6" fill="#555"/><rect x="201.95" y="115.00" width="1.6" height="1.6" fill="#555"/><path d="M195.65,122.8 l1.2,-1.8 h2 l1.2,1.8 z" fill="#585858"/><polygon points="144.90,206.10 149.00,201.00 153.10,206.10" fill="#f0f0f0"/><polygon points="144.90,212.80 153.10,212.80 149.00,217.70" fill="#f0f0f0"/><path d="M250.0,203.8 L256.1,206.4 V213.4 L250.4,215.9 L243.8,213.4 V206.4 z" fill="#efefef"/><path d="M244.10000000000002,206.5 L250.20000000000002,208.20000000000002 L255.8,206.5" stroke="#8a8a8a" stroke-width="0.7" fill="none"/><line x1="250.20000000000002" y1="208.20000000000002" x2="250.20000000000002" y2="215.8" stroke="#8a8a8a" stroke-width="0.8"/><text x="246.9" y="213.3" font-size="5.5" font-weight="bold" fill="#8a8a8a" text-anchor="middle" font-family="Liberation Sans">?</text><text x="253.4" y="213.3" font-size="5.5" font-weight="bold" fill="#8a8a8a" text-anchor="middle" font-family="Liberation Sans">?</text><path d="M264.5,203.9 H273.4 L276.0,206.5 V215.5 a0.6 0.6 0 0 1 -0.6,0.6 H264.5 a0.6 0.6 0 0 1 -0.6,-0.6 V204.5 a0.6 0.6 0 0 1 0.6,-0.6 z" fill="#efefef"/><rect x="265.2" y="205.20000000000002" width="5.7" height="2.6" fill="#6a6a6a"/><circle cx="271.9" cy="212.1" r="1.6" fill="#6a6a6a"/><path d="M162.64,273.96A9,9 0 1 1 175.36,273.96" stroke="#7d7d7d" stroke-width="6" fill="none"/><path d="M164.50,275.39A9,9 0 0 1 169.78,258.63" stroke="#8aa6ff" stroke-width="6" fill="none"/><path d="M205.64,273.96A9,9 0 1 1 218.36,273.96" stroke="#7d7d7d" stroke-width="6" fill="none"/><path d="M207.50,275.39A9,9 0 0 1 213.56,258.74" stroke="#8aa6ff" stroke-width="6" fill="none"/><path d="M246.64,273.96A9,9 0 1 1 259.36,273.96" stroke="#7d7d7d" stroke-width="6" fill="none"/><path d="M248.50,275.39A9,9 0 0 1 251.44,258.74" stroke="#8aa6ff" stroke-width="6" fill="none"/><path d="M162.64,331.96A9,9 0 1 1 175.36,331.96" stroke="#7d7d7d" stroke-width="6" fill="none"/><path d="M164.50,333.39A9,9 0 0 1 173.09,317.58" stroke="#8aa6ff" stroke-width="6" fill="none"/><path d="M205.64,331.96A9,9 0 1 1 218.36,331.96" stroke="#7d7d7d" stroke-width="6" fill="none"/><path d="M207.50,333.39A9,9 0 0 1 203.72,322.08" stroke="#8aa6ff" stroke-width="6" fill="none"/><path d="M246.64,331.96A9,9 0 1 1 259.36,331.96" stroke="#7d7d7d" stroke-width="6" fill="none"/><path d="M248.50,333.39A9,9 0 1 1 261.34,328.97" stroke="#8aa6ff" stroke-width="6" fill="none"/><path d="M162.64,389.96A9,9 0 1 1 175.36,389.96" stroke="#7d7d7d" stroke-width="6" fill="none"/><path d="M164.50,391.39A9,9 0 0 1 160.14,385.16" stroke="#8aa6ff" stroke-width="6" fill="none"/><path d="M205.64,389.96A9,9 0 1 1 218.36,389.96" stroke="#7d7d7d" stroke-width="6" fill="none"/><path d="M207.50,391.39A9,9 0 0 1 216.09,375.58" stroke="#8aa6ff" stroke-width="6" fill="none"/><path d="M246.64,389.96A9,9 0 1 1 259.36,389.96" stroke="#7d7d7d" stroke-width="6" fill="none"/><path d="M248.50,391.39A9,9 0 0 1 254.56,374.74" stroke="#8aa6ff" stroke-width="6" fill="none"/><polyline points="157.50,251.50 157.50,245.50 235.30,245.50" stroke="#c4c4c4" stroke-width="1.2" fill="none" stroke-linejoin="miter"/><polyline points="157.50,309.50 157.50,303.50 223.49,303.50" stroke="#c4c4c4" stroke-width="1.2" fill="none" stroke-linejoin="miter"/><polyline points="195.00,451.60 203.00,451.60 210.40,459.50" stroke="#8c8c8c" stroke-width="1.5" fill="none" stroke-linejoin="miter"/><polyline points="195.00,483.00 203.00,483.00 210.40,474.50" stroke="#8c8c8c" stroke-width="1.5" fill="none" stroke-linejoin="miter"/><polyline points="195.00,467.00 208.00,467.00" stroke="#8fbaff" stroke-width="2.2" fill="none" stroke-linejoin="miter"/><circle cx="224.10" cy="467.80" r="12.4" fill="rgba(0,0,0,0.18)"/><circle cx="223.80" cy="467.00" r="11.8" fill="url(#lk)"/><line x1="221.79" y1="470.22" x2="218.87" y2="474.89" stroke="#0c1c38" stroke-width="2.4" stroke-linecap="butt"/><circle cx="224.30" cy="512.80" r="12.4" fill="rgba(0,0,0,0.18)"/><circle cx="224.00" cy="512.00" r="11.8" fill="url(#lk)"/><line x1="227.11" y1="509.82" x2="231.62" y2="506.67" stroke="#0c1c38" stroke-width="2.4" stroke-linecap="butt"/><circle cx="258.30" cy="512.80" r="12.4" fill="rgba(0,0,0,0.18)"/><circle cx="258.00" cy="512.00" r="11.8" fill="url(#lk)"/><line x1="256.70" y1="508.43" x2="254.82" y2="503.26" stroke="#0c1c38" stroke-width="2.4" stroke-linecap="butt"/><circle cx="224.30" cy="564.80" r="12.4" fill="rgba(0,0,0,0.18)"/><circle cx="224.00" cy="564.00" r="11.8" fill="url(#lk)"/><line x1="225.90" y1="567.29" x2="228.65" y2="572.05" stroke="#0c1c38" stroke-width="2.4" stroke-linecap="butt"/><polygon points="149.60,589.50 272.00,589.50 252.00,610.60 170.00,610.60" fill="#b8b8b8"/><circle cx="164.10" cy="633.50" r="12.4" fill="rgba(0,0,0,0.18)"/><circle cx="163.80" cy="632.70" r="11.8" fill="url(#lk)"/><line x1="163.80" y1="628.90" x2="163.80" y2="623.40" stroke="#0c1c38" stroke-width="2.4" stroke-linecap="butt"/><polyline points="202.00,661.60 202.00,654.40 209.50,654.40" stroke="#a6a6a6" stroke-width="1.4" fill="none" stroke-linejoin="miter"/><polyline points="202.00,762.00 202.00,769.00 210.50,769.00" stroke="#a6a6a6" stroke-width="1.4" fill="none" stroke-linejoin="miter"/><circle cx="225.10" cy="667.80" r="12.4" fill="rgba(0,0,0,0.18)"/><circle cx="224.80" cy="667.00" r="11.8" fill="url(#lk)"/><line x1="222.90" y1="670.29" x2="220.15" y2="675.05" stroke="#0c1c38" stroke-width="2.4" stroke-linecap="butt"/><circle cx="225.10" cy="697.80" r="12.4" fill="rgba(0,0,0,0.18)"/><circle cx="224.80" cy="697.00" r="11.8" fill="url(#lk)"/><line x1="222.90" y1="700.29" x2="220.15" y2="705.05" stroke="#0c1c38" stroke-width="2.4" stroke-linecap="butt"/><circle cx="225.10" cy="727.80" r="12.4" fill="rgba(0,0,0,0.18)"/><circle cx="224.80" cy="727.00" r="11.8" fill="url(#lk)"/><line x1="222.90" y1="730.29" x2="220.15" y2="735.05" stroke="#0c1c38" stroke-width="2.4" stroke-linecap="butt"/><circle cx="223.30" cy="756.80" r="12.4" fill="rgba(0,0,0,0.18)"/><circle cx="223.00" cy="756.00" r="11.8" fill="url(#lk)"/><line x1="221.10" y1="759.29" x2="218.35" y2="764.05" stroke="#0c1c38" stroke-width="2.4" stroke-linecap="butt"/><polygon points="289.00,71.00 413.00,71.00 392.00,92.50 310.00,92.50" fill="#b8b8b8"/><circle cx="337.85" cy="115.8" r="7" fill="url(#mi)"/><rect x="332.15" y="115.00" width="1.6" height="1.6" fill="#555"/><rect x="333.30" y="111.85" width="1.6" height="1.6" fill="#555"/><rect x="337.05" y="110.10" width="1.6" height="1.6" fill="#555"/><rect x="340.80" y="111.85" width="1.6" height="1.6" fill="#555"/><rect x="341.95" y="115.00" width="1.6" height="1.6" fill="#555"/><path d="M335.65000000000003,122.8 l1.2,-1.8 h2 l1.2,1.8 z" fill="#585858"/><polygon points="284.90,206.10 289.00,201.00 293.10,206.10" fill="#f0f0f0"/><polygon points="284.90,212.80 293.10,212.80 289.00,217.70" fill="#f0f0f0"/><path d="M390.0,203.8 L396.1,206.4 V213.4 L390.40000000000003,215.9 L383.8,213.4 V206.4 z" fill="#efefef"/><path d="M384.1,206.5 L390.2,208.20000000000002 L395.8,206.5" stroke="#8a8a8a" stroke-width="0.7" fill="none"/><line x1="390.2" y1="208.20000000000002" x2="390.2" y2="215.8" stroke="#8a8a8a" stroke-width="0.8"/><text x="386.90000000000003" y="213.3" font-size="5.5" font-weight="bold" fill="#8a8a8a" text-anchor="middle" font-family="Liberation Sans">?</text><text x="393.40000000000003" y="213.3" font-size="5.5" font-weight="bold" fill="#8a8a8a" text-anchor="middle" font-family="Liberation Sans">?</text><path d="M404.5,203.9 H413.4 L416.0,206.5 V215.5 a0.6 0.6 0 0 1 -0.6,0.6 H404.5 a0.6 0.6 0 0 1 -0.6,-0.6 V204.5 a0.6 0.6 0 0 1 0.6,-0.6 z" fill="#efefef"/><rect x="405.2" y="205.20000000000002" width="5.7" height="2.6" fill="#6a6a6a"/><circle cx="411.9" cy="212.1" r="1.6" fill="#6a6a6a"/><path d="M302.64,273.96A9,9 0 1 1 315.36,273.96" stroke="#7d7d7d" stroke-width="6" fill="none"/><path d="M304.50,275.39A9,9 0 0 1 300.54,270.68" stroke="#ff8585" stroke-width="6" fill="none"/><path d="M345.64,273.96A9,9 0 1 1 358.36,273.96" stroke="#7d7d7d" stroke-width="6" fill="none"/><path d="M347.50,275.39A9,9 0 1 1 356.50,275.39" stroke="#ff8585" stroke-width="6" fill="none"/><path d="M386.64,273.96A9,9 0 1 1 399.36,273.96" stroke="#7d7d7d" stroke-width="6" fill="none"/><path d="M302.64,331.96A9,9 0 1 1 315.36,331.96" stroke="#7d7d7d" stroke-width="6" fill="none"/><path d="M304.50,333.39A9,9 0 1 1 316.79,321.10" stroke="#ff8585" stroke-width="6" fill="none"/><path d="M345.64,331.96A9,9 0 1 1 358.36,331.96" stroke="#7d7d7d" stroke-width="6" fill="none"/><path d="M347.50,333.39A9,9 0 1 1 356.50,333.39" stroke="#ff8585" stroke-width="6" fill="none"/><path d="M386.64,331.96A9,9 0 1 1 399.36,331.96" stroke="#7d7d7d" stroke-width="6" fill="none"/><path d="M388.50,333.39A9,9 0 0 1 386.11,319.81" stroke="#ff8585" stroke-width="6" fill="none"/><path d="M302.64,389.96A9,9 0 1 1 315.36,389.96" stroke="#7d7d7d" stroke-width="6" fill="none"/><path d="M304.50,391.39A9,9 0 0 1 301.13,379.24" stroke="#ff8585" stroke-width="6" fill="none"/><path d="M345.64,389.96A9,9 0 1 1 358.36,389.96" stroke="#7d7d7d" stroke-width="6" fill="none"/><path d="M347.50,391.39A9,9 0 0 1 343.00,383.60" stroke="#ff8585" stroke-width="6" fill="none"/><path d="M386.64,389.96A9,9 0 1 1 399.36,389.96" stroke="#7d7d7d" stroke-width="6" fill="none"/><path d="M388.50,391.39A9,9 0 1 1 402.00,383.60" stroke="#ff8585" stroke-width="6" fill="none"/><polyline points="340.50,251.50 340.50,245.50 363.49,245.50" stroke="#c4c4c4" stroke-width="1.2" fill="none" stroke-linejoin="miter"/><polyline points="297.50,367.50 297.50,361.50 388.65,361.50" stroke="#c4c4c4" stroke-width="1.2" fill="none" stroke-linejoin="miter"/><polyline points="335.00,451.60 343.00,451.60 350.40,459.50" stroke="#8c8c8c" stroke-width="1.5" fill="none" stroke-linejoin="miter"/><polyline points="335.00,467.00 348.00,467.00" stroke="#8c8c8c" stroke-width="1.5" fill="none" stroke-linejoin="miter"/><polyline points="335.00,483.00 343.00,483.00 350.40,474.50" stroke="#8fbaff" stroke-width="2.2" fill="none" stroke-linejoin="miter"/><circle cx="364.10" cy="467.80" r="12.4" fill="rgba(0,0,0,0.18)"/><circle cx="363.80" cy="467.00" r="11.8" fill="url(#lk)"/><line x1="361.79" y1="470.22" x2="358.87" y2="474.89" stroke="#0c1c38" stroke-width="2.4" stroke-linecap="butt"/><circle cx="364.30" cy="512.80" r="12.4" fill="rgba(0,0,0,0.18)"/><circle cx="364.00" cy="512.00" r="11.8" fill="url(#lk)"/><line x1="365.30" y1="508.43" x2="367.18" y2="503.26" stroke="#0c1c38" stroke-width="2.4" stroke-linecap="butt"/><circle cx="398.30" cy="512.80" r="12.4" fill="rgba(0,0,0,0.18)"/><circle cx="398.00" cy="512.00" r="11.8" fill="url(#lk)"/><line x1="397.02" y1="508.33" x2="395.59" y2="503.02" stroke="#0c1c38" stroke-width="2.4" stroke-linecap="butt"/><circle cx="364.30" cy="564.80" r="12.4" fill="rgba(0,0,0,0.18)"/><circle cx="364.00" cy="564.00" r="11.8" fill="url(#lk)"/><line x1="365.90" y1="567.29" x2="368.65" y2="572.05" stroke="#0c1c38" stroke-width="2.4" stroke-linecap="butt"/><polygon points="289.60,589.50 412.00,589.50 392.00,610.60 310.00,610.60" fill="#b8b8b8"/><circle cx="304.10" cy="633.50" r="12.4" fill="rgba(0,0,0,0.18)"/><circle cx="303.80" cy="632.70" r="11.8" fill="url(#lk)"/><line x1="302.82" y1="629.03" x2="301.39" y2="623.72" stroke="#0c1c38" stroke-width="2.4" stroke-linecap="butt"/><polyline points="342.00,661.60 342.00,654.40 349.50,654.40" stroke="#a6a6a6" stroke-width="1.4" fill="none" stroke-linejoin="miter"/><polyline points="342.00,762.00 342.00,769.00 350.50,769.00" stroke="#a6a6a6" stroke-width="1.4" fill="none" stroke-linejoin="miter"/><circle cx="365.10" cy="667.80" r="12.4" fill="rgba(0,0,0,0.18)"/><circle cx="364.80" cy="667.00" r="11.8" fill="url(#lk)"/><line x1="362.90" y1="670.29" x2="360.15" y2="675.05" stroke="#0c1c38" stroke-width="2.4" stroke-linecap="butt"/><circle cx="365.10" cy="697.80" r="12.4" fill="rgba(0,0,0,0.18)"/><circle cx="364.80" cy="697.00" r="11.8" fill="url(#lk)"/><line x1="367.91" y1="694.82" x2="372.42" y2="691.67" stroke="#0c1c38" stroke-width="2.4" stroke-linecap="butt"/><circle cx="365.10" cy="727.80" r="12.4" fill="rgba(0,0,0,0.18)"/><circle cx="364.80" cy="727.00" r="11.8" fill="url(#lk)"/><line x1="362.90" y1="730.29" x2="360.15" y2="735.05" stroke="#0c1c38" stroke-width="2.4" stroke-linecap="butt"/><circle cx="363.30" cy="756.80" r="12.4" fill="rgba(0,0,0,0.18)"/><circle cx="363.00" cy="756.00" r="11.8" fill="url(#lk)"/><line x1="361.10" y1="759.29" x2="358.35" y2="764.05" stroke="#0c1c38" stroke-width="2.4" stroke-linecap="butt"/><polygon points="429.00,71.00 553.00,71.00 532.00,92.50 450.00,92.50" fill="#b8b8b8"/><circle cx="477.5" cy="115.8" r="7" fill="url(#mi)"/><rect x="471.80" y="115.00" width="1.6" height="1.6" fill="#555"/><rect x="472.95" y="111.85" width="1.6" height="1.6" fill="#555"/><rect x="476.70" y="110.10" width="1.6" height="1.6" fill="#555"/><rect x="480.45" y="111.85" width="1.6" height="1.6" fill="#555"/><rect x="481.60" y="115.00" width="1.6" height="1.6" fill="#555"/><path d="M475.3,122.8 l1.2,-1.8 h2 l1.2,1.8 z" fill="#585858"/><circle cx="539.4" cy="115.8" r="7" fill="url(#mi)"/><rect x="533.70" y="115.00" width="1.6" height="1.6" fill="#555"/><rect x="534.85" y="111.85" width="1.6" height="1.6" fill="#555"/><rect x="538.60" y="110.10" width="1.6" height="1.6" fill="#555"/><rect x="542.35" y="111.85" width="1.6" height="1.6" fill="#555"/><rect x="543.50" y="115.00" width="1.6" height="1.6" fill="#555"/><path d="M537.1999999999999,122.8 l1.2,-1.8 h2 l1.2,1.8 z" fill="#585858"/><polygon points="424.90,206.10 429.00,201.00 433.10,206.10" fill="#f0f0f0"/><polygon points="424.90,212.80 433.10,212.80 429.00,217.70" fill="#f0f0f0"/><path d="M530.0,203.8 L536.0999999999999,206.4 V213.4 L530.4,215.9 L523.8,213.4 V206.4 z" fill="#efefef"/><path d="M524.0999999999999,206.5 L530.1999999999999,208.20000000000002 L535.8,206.5" stroke="#8a8a8a" stroke-width="0.7" fill="none"/><line x1="530.1999999999999" y1="208.20000000000002" x2="530.1999999999999" y2="215.8" stroke="#8a8a8a" stroke-width="0.8"/><text x="526.9" y="213.3" font-size="5.5" font-weight="bold" fill="#8a8a8a" text-anchor="middle" font-family="Liberation Sans">?</text><text x="533.4" y="213.3" font-size="5.5" font-weight="bold" fill="#8a8a8a" text-anchor="middle" font-family="Liberation Sans">?</text><path d="M544.5,203.9 H553.4 L556.0,206.5 V215.5 a0.6 0.6 0 0 1 -0.6,0.6 H544.5 a0.6 0.6 0 0 1 -0.6,-0.6 V204.5 a0.6 0.6 0 0 1 0.6,-0.6 z" fill="#efefef"/><rect x="545.1999999999999" y="205.20000000000002" width="5.7" height="2.6" fill="#6a6a6a"/><circle cx="551.9" cy="212.1" r="1.6" fill="#6a6a6a"/><path d="M442.64,273.96A9,9 0 1 1 455.36,273.96" stroke="#7d7d7d" stroke-width="6" fill="none"/><path d="M444.50,275.39A9,9 0 0 1 446.67,258.91" stroke="#ff8585" stroke-width="6" fill="none"/><path d="M485.64,273.96A9,9 0 1 1 498.36,273.96" stroke="#7d7d7d" stroke-width="6" fill="none"/><path d="M483.31,269.93A9,9 0 0 1 492.00,258.60" stroke="#ff8585" stroke-width="6" fill="none"/><path d="M526.64,273.96A9,9 0 1 1 539.36,273.96" stroke="#7d7d7d" stroke-width="6" fill="none"/><path d="M442.64,331.96A9,9 0 1 1 455.36,331.96" stroke="#7d7d7d" stroke-width="6" fill="none"/><path d="M444.50,333.39A9,9 0 0 1 450.56,316.74" stroke="#ff8585" stroke-width="6" fill="none"/><path d="M485.64,331.96A9,9 0 1 1 498.36,331.96" stroke="#7d7d7d" stroke-width="6" fill="none"/><path d="M487.50,333.39A9,9 0 0 1 485.98,318.91" stroke="#ff8585" stroke-width="6" fill="none"/><path d="M526.64,331.96A9,9 0 1 1 539.36,331.96" stroke="#7d7d7d" stroke-width="6" fill="none"/><path d="M528.50,333.39A9,9 0 1 1 540.79,330.10" stroke="#ff8585" stroke-width="6" fill="none"/><path d="M442.64,389.96A9,9 0 1 1 455.36,389.96" stroke="#7d7d7d" stroke-width="6" fill="none"/><path d="M444.50,391.39A9,9 0 0 1 440.98,379.51" stroke="#ff8585" stroke-width="6" fill="none"/><path d="M485.64,389.96A9,9 0 1 1 498.36,389.96" stroke="#7d7d7d" stroke-width="6" fill="none"/><path d="M526.64,389.96A9,9 0 1 1 539.36,389.96" stroke="#7d7d7d" stroke-width="6" fill="none"/><polyline points="472.50,367.50 472.50,361.50 506.58,361.50" stroke="#c4c4c4" stroke-width="1.2" fill="none" stroke-linejoin="miter"/><line x1="472.00" y1="245.50" x2="519.00" y2="245.50" stroke="#c4c4c4" stroke-width="1.2" stroke-linecap="butt"/><polyline points="475.00,467.00 488.00,467.00" stroke="#8c8c8c" stroke-width="1.5" fill="none" stroke-linejoin="miter"/><polyline points="475.00,483.00 483.00,483.00 490.40,474.50" stroke="#8c8c8c" stroke-width="1.5" fill="none" stroke-linejoin="miter"/><polyline points="475.00,451.60 483.00,451.60 490.40,459.50" stroke="#8fbaff" stroke-width="2.2" fill="none" stroke-linejoin="miter"/><circle cx="504.10" cy="467.80" r="12.4" fill="rgba(0,0,0,0.18)"/><circle cx="503.80" cy="467.00" r="11.8" fill="url(#lk)"/><line x1="501.79" y1="470.22" x2="498.87" y2="474.89" stroke="#0c1c38" stroke-width="2.4" stroke-linecap="butt"/><circle cx="504.30" cy="512.80" r="12.4" fill="rgba(0,0,0,0.18)"/><circle cx="504.00" cy="512.00" r="11.8" fill="url(#lk)"/><line x1="502.39" y1="508.56" x2="500.07" y2="503.57" stroke="#0c1c38" stroke-width="2.4" stroke-linecap="butt"/><circle cx="538.30" cy="512.80" r="12.4" fill="rgba(0,0,0,0.18)"/><circle cx="538.00" cy="512.00" r="11.8" fill="url(#lk)"/><line x1="534.43" y1="510.70" x2="529.26" y2="508.82" stroke="#0c1c38" stroke-width="2.4" stroke-linecap="butt"/><circle cx="504.30" cy="564.80" r="12.4" fill="rgba(0,0,0,0.18)"/><circle cx="504.00" cy="564.00" r="11.8" fill="url(#lk)"/><line x1="505.30" y1="560.43" x2="507.18" y2="555.26" stroke="#0c1c38" stroke-width="2.4" stroke-linecap="butt"/><polygon points="429.60,589.50 552.00,589.50 532.00,610.60 450.00,610.60" fill="#b8b8b8"/><circle cx="444.10" cy="633.50" r="12.4" fill="rgba(0,0,0,0.18)"/><circle cx="443.80" cy="632.70" r="11.8" fill="url(#lk)"/><line x1="445.41" y1="629.26" x2="447.73" y2="624.27" stroke="#0c1c38" stroke-width="2.4" stroke-linecap="butt"/><polyline points="482.00,661.60 482.00,654.40 489.50,654.40" stroke="#a6a6a6" stroke-width="1.4" fill="none" stroke-linejoin="miter"/><polyline points="482.00,762.00 482.00,769.00 490.50,769.00" stroke="#a6a6a6" stroke-width="1.4" fill="none" stroke-linejoin="miter"/><circle cx="505.10" cy="667.80" r="12.4" fill="rgba(0,0,0,0.18)"/><circle cx="504.80" cy="667.00" r="11.8" fill="url(#lk)"/><line x1="501.23" y1="668.30" x2="496.06" y2="670.18" stroke="#0c1c38" stroke-width="2.4" stroke-linecap="butt"/><circle cx="505.10" cy="697.80" r="12.4" fill="rgba(0,0,0,0.18)"/><circle cx="504.80" cy="697.00" r="11.8" fill="url(#lk)"/><line x1="502.90" y1="700.29" x2="500.15" y2="705.05" stroke="#0c1c38" stroke-width="2.4" stroke-linecap="butt"/><circle cx="505.10" cy="727.80" r="12.4" fill="rgba(0,0,0,0.18)"/><circle cx="504.80" cy="727.00" r="11.8" fill="url(#lk)"/><line x1="502.90" y1="730.29" x2="500.15" y2="735.05" stroke="#0c1c38" stroke-width="2.4" stroke-linecap="butt"/><circle cx="503.30" cy="756.80" r="12.4" fill="rgba(0,0,0,0.18)"/><circle cx="503.00" cy="756.00" r="11.8" fill="url(#lk)"/><line x1="501.10" y1="759.29" x2="498.35" y2="764.05" stroke="#0c1c38" stroke-width="2.4" stroke-linecap="butt"/><polygon points="569.00,71.00 693.00,71.00 672.00,92.50 590.00,92.50" fill="#b8b8b8"/><circle cx="617.5" cy="115.8" r="7" fill="url(#mi)"/><rect x="611.80" y="115.00" width="1.6" height="1.6" fill="#555"/><rect x="612.95" y="111.85" width="1.6" height="1.6" fill="#555"/><rect x="616.70" y="110.10" width="1.6" height="1.6" fill="#555"/><rect x="620.45" y="111.85" width="1.6" height="1.6" fill="#555"/><rect x="621.60" y="115.00" width="1.6" height="1.6" fill="#555"/><path d="M615.3,122.8 l1.2,-1.8 h2 l1.2,1.8 z" fill="#585858"/><circle cx="679.4" cy="115.8" r="7" fill="url(#mi)"/><rect x="673.70" y="115.00" width="1.6" height="1.6" fill="#555"/><rect x="674.85" y="111.85" width="1.6" height="1.6" fill="#555"/><rect x="678.60" y="110.10" width="1.6" height="1.6" fill="#555"/><rect x="682.35" y="111.85" width="1.6" height="1.6" fill="#555"/><rect x="683.50" y="115.00" width="1.6" height="1.6" fill="#555"/><path d="M677.1999999999999,122.8 l1.2,-1.8 h2 l1.2,1.8 z" fill="#585858"/><polygon points="564.90,206.10 569.00,201.00 573.10,206.10" fill="#f0f0f0"/><polygon points="564.90,212.80 573.10,212.80 569.00,217.70" fill="#f0f0f0"/><path d="M670.0,203.8 L676.0999999999999,206.4 V213.4 L670.4,215.9 L663.8,213.4 V206.4 z" fill="#efefef"/><path d="M664.0999999999999,206.5 L670.1999999999999,208.20000000000002 L675.8,206.5" stroke="#8a8a8a" stroke-width="0.7" fill="none"/><line x1="670.1999999999999" y1="208.20000000000002" x2="670.1999999999999" y2="215.8" stroke="#8a8a8a" stroke-width="0.8"/><text x="666.9" y="213.3" font-size="5.5" font-weight="bold" fill="#8a8a8a" text-anchor="middle" font-family="Liberation Sans">?</text><text x="673.4" y="213.3" font-size="5.5" font-weight="bold" fill="#8a8a8a" text-anchor="middle" font-family="Liberation Sans">?</text><path d="M684.5,203.9 H693.4 L696.0,206.5 V215.5 a0.6 0.6 0 0 1 -0.6,0.6 H684.5 a0.6 0.6 0 0 1 -0.6,-0.6 V204.5 a0.6 0.6 0 0 1 0.6,-0.6 z" fill="#efefef"/><rect x="685.1999999999999" y="205.20000000000002" width="5.7" height="2.6" fill="#6a6a6a"/><circle cx="691.9" cy="212.1" r="1.6" fill="#6a6a6a"/><path d="M582.64,273.96A9,9 0 1 1 595.36,273.96" stroke="#7d7d7d" stroke-width="6" fill="none"/><path d="M584.50,275.39A9,9 0 0 1 582.98,260.91" stroke="#fff47a" stroke-width="6" fill="none"/><path d="M625.64,273.96A9,9 0 1 1 638.36,273.96" stroke="#7d7d7d" stroke-width="6" fill="none"/><path d="M627.50,275.39A9,9 0 0 1 626.21,260.71" stroke="#fff47a" stroke-width="6" fill="none"/><path d="M666.64,273.96A9,9 0 1 1 679.36,273.96" stroke="#7d7d7d" stroke-width="6" fill="none"/><path d="M668.50,275.39A9,9 0 0 1 665.72,272.89" stroke="#fff47a" stroke-width="6" fill="none"/><path d="M582.64,331.96A9,9 0 1 1 595.36,331.96" stroke="#7d7d7d" stroke-width="6" fill="none"/><path d="M584.50,333.39A9,9 0 0 1 582.98,318.91" stroke="#fff47a" stroke-width="6" fill="none"/><path d="M625.64,331.96A9,9 0 1 1 638.36,331.96" stroke="#7d7d7d" stroke-width="6" fill="none"/><path d="M627.50,333.39A9,9 0 0 1 623.00,325.60" stroke="#fff47a" stroke-width="6" fill="none"/><path d="M666.64,331.96A9,9 0 1 1 679.36,331.96" stroke="#7d7d7d" stroke-width="6" fill="none"/><path d="M668.50,333.39A9,9 0 1 1 681.99,325.29" stroke="#fff47a" stroke-width="6" fill="none"/><path d="M582.64,389.96A9,9 0 1 1 595.36,389.96" stroke="#7d7d7d" stroke-width="6" fill="none"/><path d="M589.00,374.60A9,9 0 0 1 595.36,389.96" stroke="#fff47a" stroke-width="6" fill="none"/><path d="M625.64,389.96A9,9 0 1 1 638.36,389.96" stroke="#7d7d7d" stroke-width="6" fill="none"/><path d="M627.50,391.39A9,9 0 0 1 633.56,374.74" stroke="#fff47a" stroke-width="6" fill="none"/><path d="M666.64,389.96A9,9 0 1 1 679.36,389.96" stroke="#7d7d7d" stroke-width="6" fill="none"/><path d="M668.50,391.39A9,9 0 0 1 666.42,377.46" stroke="#fff47a" stroke-width="6" fill="none"/><polyline points="577.50,367.50 577.50,361.50 654.28,361.50" stroke="#c4c4c4" stroke-width="1.2" fill="none" stroke-linejoin="miter"/><rect x="620.9" y="230.5" width="22.2" height="17.3" rx="1" fill="none" stroke="#8a8a8a" stroke-width="1.5"/><line x1="627.00" y1="239.30" x2="638.00" y2="239.30" stroke="#fff47a" stroke-width="2.2" stroke-linecap="butt"/><polyline points="630.80,235.60 627.00,239.30 630.80,243.00" stroke="#fff47a" stroke-width="2.2" fill="none" stroke-linejoin="miter"/><polyline points="615.00,451.60 623.00,451.60 630.40,459.50" stroke="#8c8c8c" stroke-width="1.5" fill="none" stroke-linejoin="miter"/><polyline points="615.00,483.00 623.00,483.00 630.40,474.50" stroke="#8c8c8c" stroke-width="1.5" fill="none" stroke-linejoin="miter"/><polyline points="615.00,467.00 628.00,467.00" stroke="#8fbaff" stroke-width="2.2" fill="none" stroke-linejoin="miter"/><circle cx="644.10" cy="467.80" r="12.4" fill="rgba(0,0,0,0.18)"/><circle cx="643.80" cy="467.00" r="11.8" fill="url(#lk)"/><line x1="640.51" y1="465.10" x2="635.75" y2="462.35" stroke="#0c1c38" stroke-width="2.4" stroke-linecap="butt"/><circle cx="644.30" cy="512.80" r="12.4" fill="rgba(0,0,0,0.18)"/><circle cx="644.00" cy="512.00" r="11.8" fill="url(#lk)"/><line x1="645.90" y1="515.29" x2="648.65" y2="520.05" stroke="#0c1c38" stroke-width="2.4" stroke-linecap="butt"/><circle cx="678.30" cy="512.80" r="12.4" fill="rgba(0,0,0,0.18)"/><circle cx="678.00" cy="512.00" r="11.8" fill="url(#lk)"/><line x1="676.10" y1="515.29" x2="673.35" y2="520.05" stroke="#0c1c38" stroke-width="2.4" stroke-linecap="butt"/><circle cx="644.30" cy="564.80" r="12.4" fill="rgba(0,0,0,0.18)"/><circle cx="644.00" cy="564.00" r="11.8" fill="url(#lk)"/><line x1="640.20" y1="564.00" x2="634.70" y2="564.00" stroke="#0c1c38" stroke-width="2.4" stroke-linecap="butt"/><polygon points="569.60,589.50 692.00,589.50 672.00,610.60 590.00,610.60" fill="#b8b8b8"/><circle cx="584.10" cy="633.50" r="12.4" fill="rgba(0,0,0,0.18)"/><circle cx="583.80" cy="632.70" r="11.8" fill="url(#lk)"/><line x1="582.50" y1="629.13" x2="580.62" y2="623.96" stroke="#0c1c38" stroke-width="2.4" stroke-linecap="butt"/><polyline points="622.00,661.60 622.00,654.40 629.50,654.40" stroke="#a6a6a6" stroke-width="1.4" fill="none" stroke-linejoin="miter"/><polyline points="622.00,762.00 622.00,769.00 630.50,769.00" stroke="#a6a6a6" stroke-width="1.4" fill="none" stroke-linejoin="miter"/><circle cx="645.10" cy="667.80" r="12.4" fill="rgba(0,0,0,0.18)"/><circle cx="644.80" cy="667.00" r="11.8" fill="url(#lk)"/><line x1="642.90" y1="670.29" x2="640.15" y2="675.05" stroke="#0c1c38" stroke-width="2.4" stroke-linecap="butt"/><circle cx="645.10" cy="697.80" r="12.4" fill="rgba(0,0,0,0.18)"/><circle cx="644.80" cy="697.00" r="11.8" fill="url(#lk)"/><line x1="642.90" y1="700.29" x2="640.15" y2="705.05" stroke="#0c1c38" stroke-width="2.4" stroke-linecap="butt"/><circle cx="645.10" cy="727.80" r="12.4" fill="rgba(0,0,0,0.18)"/><circle cx="644.80" cy="727.00" r="11.8" fill="url(#lk)"/><line x1="641.00" y1="727.00" x2="635.50" y2="727.00" stroke="#0c1c38" stroke-width="2.4" stroke-linecap="butt"/><circle cx="643.30" cy="756.80" r="12.4" fill="rgba(0,0,0,0.18)"/><circle cx="643.00" cy="756.00" r="11.8" fill="url(#lk)"/><line x1="641.10" y1="759.29" x2="638.35" y2="764.05" stroke="#0c1c38" stroke-width="2.4" stroke-linecap="butt"/><polygon points="709.00,71.00 833.00,71.00 812.00,92.50 730.00,92.50" fill="#b8b8b8"/><circle cx="757.5" cy="115.8" r="7" fill="url(#mi)"/><rect x="751.80" y="115.00" width="1.6" height="1.6" fill="#555"/><rect x="752.95" y="111.85" width="1.6" height="1.6" fill="#555"/><rect x="756.70" y="110.10" width="1.6" height="1.6" fill="#555"/><rect x="760.45" y="111.85" width="1.6" height="1.6" fill="#555"/><rect x="761.60" y="115.00" width="1.6" height="1.6" fill="#555"/><path d="M755.3,122.8 l1.2,-1.8 h2 l1.2,1.8 z" fill="#585858"/><circle cx="819.4" cy="115.8" r="7" fill="url(#mi)"/><rect x="813.70" y="115.00" width="1.6" height="1.6" fill="#555"/><rect x="814.85" y="111.85" width="1.6" height="1.6" fill="#555"/><rect x="818.60" y="110.10" width="1.6" height="1.6" fill="#555"/><rect x="822.35" y="111.85" width="1.6" height="1.6" fill="#555"/><rect x="823.50" y="115.00" width="1.6" height="1.6" fill="#555"/><path d="M817.1999999999999,122.8 l1.2,-1.8 h2 l1.2,1.8 z" fill="#585858"/><polygon points="704.90,206.10 709.00,201.00 713.10,206.10" fill="#f0f0f0"/><polygon points="704.90,212.80 713.10,212.80 709.00,217.70" fill="#f0f0f0"/><path d="M810.0,203.8 L816.0999999999999,206.4 V213.4 L810.4,215.9 L803.8,213.4 V206.4 z" fill="#efefef"/><path d="M804.0999999999999,206.5 L810.1999999999999,208.20000000000002 L815.8,206.5" stroke="#8a8a8a" stroke-width="0.7" fill="none"/><line x1="810.1999999999999" y1="208.20000000000002" x2="810.1999999999999" y2="215.8" stroke="#8a8a8a" stroke-width="0.8"/><text x="806.9" y="213.3" font-size="5.5" font-weight="bold" fill="#8a8a8a" text-anchor="middle" font-family="Liberation Sans">?</text><text x="813.4" y="213.3" font-size="5.5" font-weight="bold" fill="#8a8a8a" text-anchor="middle" font-family="Liberation Sans">?</text><path d="M824.5,203.9 H833.4 L836.0,206.5 V215.5 a0.6 0.6 0 0 1 -0.6,0.6 H824.5 a0.6 0.6 0 0 1 -0.6,-0.6 V204.5 a0.6 0.6 0 0 1 0.6,-0.6 z" fill="#efefef"/><rect x="825.1999999999999" y="205.20000000000002" width="5.7" height="2.6" fill="#6a6a6a"/><circle cx="831.9" cy="212.1" r="1.6" fill="#6a6a6a"/><path d="M722.64,273.96A9,9 0 1 1 735.36,273.96" stroke="#7d7d7d" stroke-width="6" fill="none"/><path d="M724.50,275.39A9,9 0 0 1 722.64,261.24" stroke="#fff47a" stroke-width="6" fill="none"/><path d="M765.64,273.96A9,9 0 1 1 778.36,273.96" stroke="#7d7d7d" stroke-width="6" fill="none"/><path d="M767.50,275.39A9,9 0 0 1 765.64,261.24" stroke="#fff47a" stroke-width="6" fill="none"/><path d="M806.64,273.96A9,9 0 1 1 819.36,273.96" stroke="#7d7d7d" stroke-width="6" fill="none"/><path d="M808.50,275.39A9,9 0 0 1 810.37,258.99" stroke="#fff47a" stroke-width="6" fill="none"/><path d="M722.64,331.96A9,9 0 1 1 735.36,331.96" stroke="#7d7d7d" stroke-width="6" fill="none"/><path d="M724.50,333.39A9,9 0 1 1 736.95,321.37" stroke="#fff47a" stroke-width="6" fill="none"/><path d="M765.64,331.96A9,9 0 1 1 778.36,331.96" stroke="#7d7d7d" stroke-width="6" fill="none"/><path d="M767.50,333.39A9,9 0 0 1 772.94,316.65" stroke="#fff47a" stroke-width="6" fill="none"/><path d="M806.64,331.96A9,9 0 1 1 819.36,331.96" stroke="#7d7d7d" stroke-width="6" fill="none"/><path d="M808.50,333.39A9,9 0 0 1 805.63,330.76" stroke="#fff47a" stroke-width="6" fill="none"/><path d="M722.64,389.96A9,9 0 1 1 735.36,389.96" stroke="#7d7d7d" stroke-width="6" fill="none"/><path d="M729.00,374.60A9,9 0 0 1 729.08,374.60" stroke="#fff47a" stroke-width="6" fill="none"/><path d="M765.64,389.96A9,9 0 1 1 778.36,389.96" stroke="#7d7d7d" stroke-width="6" fill="none"/><path d="M806.64,389.96A9,9 0 1 1 819.36,389.96" stroke="#7d7d7d" stroke-width="6" fill="none"/><polyline points="717.50,367.50 717.50,361.50 794.28,361.50" stroke="#c4c4c4" stroke-width="1.2" fill="none" stroke-linejoin="miter"/><rect x="760.9" y="230.5" width="22.2" height="17.3" rx="1" fill="none" stroke="#8a8a8a" stroke-width="1.5"/><line x1="765.50" y1="239.30" x2="778.50" y2="239.30" stroke="#8a8a8a" stroke-width="1.3" stroke-linecap="butt"/><polyline points="755.00,451.60 763.00,451.60 770.40,459.50" stroke="#8c8c8c" stroke-width="1.5" fill="none" stroke-linejoin="miter"/><polyline points="755.00,467.00 768.00,467.00" stroke="#8c8c8c" stroke-width="1.5" fill="none" stroke-linejoin="miter"/><polyline points="755.00,483.00 763.00,483.00 770.40,474.50" stroke="#8fbaff" stroke-width="2.2" fill="none" stroke-linejoin="miter"/><circle cx="784.10" cy="467.80" r="12.4" fill="rgba(0,0,0,0.18)"/><circle cx="783.80" cy="467.00" r="11.8" fill="url(#lk)"/><line x1="780.01" y1="466.67" x2="774.54" y2="466.19" stroke="#0c1c38" stroke-width="2.4" stroke-linecap="butt"/><circle cx="784.30" cy="512.80" r="12.4" fill="rgba(0,0,0,0.18)"/><circle cx="784.00" cy="512.00" r="11.8" fill="url(#lk)"/><line x1="785.90" y1="515.29" x2="788.65" y2="520.05" stroke="#0c1c38" stroke-width="2.4" stroke-linecap="butt"/><circle cx="818.30" cy="512.80" r="12.4" fill="rgba(0,0,0,0.18)"/><circle cx="818.00" cy="512.00" r="11.8" fill="url(#lk)"/><line x1="816.10" y1="515.29" x2="813.35" y2="520.05" stroke="#0c1c38" stroke-width="2.4" stroke-linecap="butt"/><circle cx="784.30" cy="564.80" r="12.4" fill="rgba(0,0,0,0.18)"/><circle cx="784.00" cy="564.00" r="11.8" fill="url(#lk)"/><line x1="785.90" y1="567.29" x2="788.65" y2="572.05" stroke="#0c1c38" stroke-width="2.4" stroke-linecap="butt"/><polygon points="709.60,589.50 832.00,589.50 812.00,610.60 730.00,610.60" fill="#b8b8b8"/><circle cx="724.10" cy="633.50" r="12.4" fill="rgba(0,0,0,0.18)"/><circle cx="723.80" cy="632.70" r="11.8" fill="url(#lk)"/><line x1="725.70" y1="629.41" x2="728.45" y2="624.65" stroke="#0c1c38" stroke-width="2.4" stroke-linecap="butt"/><polyline points="762.00,661.60 762.00,654.40 769.50,654.40" stroke="#a6a6a6" stroke-width="1.4" fill="none" stroke-linejoin="miter"/><polyline points="762.00,762.00 762.00,769.00 770.50,769.00" stroke="#a6a6a6" stroke-width="1.4" fill="none" stroke-linejoin="miter"/><circle cx="785.10" cy="667.80" r="12.4" fill="rgba(0,0,0,0.18)"/><circle cx="784.80" cy="667.00" r="11.8" fill="url(#lk)"/><line x1="782.90" y1="670.29" x2="780.15" y2="675.05" stroke="#0c1c38" stroke-width="2.4" stroke-linecap="butt"/><circle cx="785.10" cy="697.80" r="12.4" fill="rgba(0,0,0,0.18)"/><circle cx="784.80" cy="697.00" r="11.8" fill="url(#lk)"/><line x1="782.90" y1="700.29" x2="780.15" y2="705.05" stroke="#0c1c38" stroke-width="2.4" stroke-linecap="butt"/><circle cx="785.10" cy="727.80" r="12.4" fill="rgba(0,0,0,0.18)"/><circle cx="784.80" cy="727.00" r="11.8" fill="url(#lk)"/><line x1="781.06" y1="727.66" x2="775.64" y2="728.61" stroke="#0c1c38" stroke-width="2.4" stroke-linecap="butt"/><circle cx="783.30" cy="756.80" r="12.4" fill="rgba(0,0,0,0.18)"/><circle cx="783.00" cy="756.00" r="11.8" fill="url(#lk)"/><line x1="781.10" y1="759.29" x2="778.35" y2="764.05" stroke="#0c1c38" stroke-width="2.4" stroke-linecap="butt"/><polygon points="849.00,71.00 973.00,71.00 952.00,92.50 870.00,92.50" fill="#b8b8b8"/><circle cx="897.5" cy="115.8" r="7" fill="url(#mi)"/><rect x="891.80" y="115.00" width="1.6" height="1.6" fill="#555"/><rect x="892.95" y="111.85" width="1.6" height="1.6" fill="#555"/><rect x="896.70" y="110.10" width="1.6" height="1.6" fill="#555"/><rect x="900.45" y="111.85" width="1.6" height="1.6" fill="#555"/><rect x="901.60" y="115.00" width="1.6" height="1.6" fill="#555"/><path d="M895.3,122.8 l1.2,-1.8 h2 l1.2,1.8 z" fill="#585858"/><circle cx="959.4" cy="115.8" r="7" fill="url(#mi)"/><rect x="953.70" y="115.00" width="1.6" height="1.6" fill="#555"/><rect x="954.85" y="111.85" width="1.6" height="1.6" fill="#555"/><rect x="958.60" y="110.10" width="1.6" height="1.6" fill="#555"/><rect x="962.35" y="111.85" width="1.6" height="1.6" fill="#555"/><rect x="963.50" y="115.00" width="1.6" height="1.6" fill="#555"/><path d="M957.1999999999999,122.8 l1.2,-1.8 h2 l1.2,1.8 z" fill="#585858"/><polygon points="844.90,206.10 849.00,201.00 853.10,206.10" fill="#f0f0f0"/><polygon points="844.90,212.80 853.10,212.80 849.00,217.70" fill="#f0f0f0"/><path d="M950.0,203.8 L956.0999999999999,206.4 V213.4 L950.4,215.9 L943.8,213.4 V206.4 z" fill="#efefef"/><path d="M944.0999999999999,206.5 L950.1999999999999,208.20000000000002 L955.8,206.5" stroke="#8a8a8a" stroke-width="0.7" fill="none"/><line x1="950.1999999999999" y1="208.20000000000002" x2="950.1999999999999" y2="215.8" stroke="#8a8a8a" stroke-width="0.8"/><text x="946.9" y="213.3" font-size="5.5" font-weight="bold" fill="#8a8a8a" text-anchor="middle" font-family="Liberation Sans">?</text><text x="953.4" y="213.3" font-size="5.5" font-weight="bold" fill="#8a8a8a" text-anchor="middle" font-family="Liberation Sans">?</text><path d="M964.5,203.9 H973.4 L976.0,206.5 V215.5 a0.6 0.6 0 0 1 -0.6,0.6 H964.5 a0.6 0.6 0 0 1 -0.6,-0.6 V204.5 a0.6 0.6 0 0 1 0.6,-0.6 z" fill="#efefef"/><rect x="965.1999999999999" y="205.20000000000002" width="5.7" height="2.6" fill="#6a6a6a"/><circle cx="971.9" cy="212.1" r="1.6" fill="#6a6a6a"/><path d="M862.64,273.96A9,9 0 1 1 875.36,273.96" stroke="#7d7d7d" stroke-width="6" fill="none"/><path d="M864.50,275.39A9,9 0 0 1 860.84,271.40" stroke="#74f27c" stroke-width="6" fill="none"/><path d="M905.64,273.96A9,9 0 1 1 918.36,273.96" stroke="#7d7d7d" stroke-width="6" fill="none"/><path d="M912.00,258.60A9,9 0 0 1 920.46,264.52" stroke="#74f27c" stroke-width="6" fill="none"/><path d="M946.64,273.96A9,9 0 1 1 959.36,273.96" stroke="#7d7d7d" stroke-width="6" fill="none"/><path d="M862.64,331.96A9,9 0 1 1 875.36,331.96" stroke="#7d7d7d" stroke-width="6" fill="none"/><path d="M905.64,331.96A9,9 0 1 1 918.36,331.96" stroke="#7d7d7d" stroke-width="6" fill="none"/><path d="M907.50,333.39A9,9 0 1 1 916.50,333.39" stroke="#74f27c" stroke-width="6" fill="none"/><path d="M946.64,331.96A9,9 0 1 1 959.36,331.96" stroke="#7d7d7d" stroke-width="6" fill="none"/><path d="M948.50,333.39A9,9 0 0 1 945.63,330.76" stroke="#74f27c" stroke-width="6" fill="none"/><path d="M862.64,389.96A9,9 0 1 1 875.36,389.96" stroke="#7d7d7d" stroke-width="6" fill="none"/><path d="M905.64,389.96A9,9 0 1 1 918.36,389.96" stroke="#7d7d7d" stroke-width="6" fill="none"/><path d="M946.64,389.96A9,9 0 1 1 959.36,389.96" stroke="#7d7d7d" stroke-width="6" fill="none"/><polyline points="857.50,309.50 857.50,303.50 941.47,303.50" stroke="#c4c4c4" stroke-width="1.2" fill="none" stroke-linejoin="miter"/><polyline points="857.50,367.50 857.50,361.50 934.28,361.50" stroke="#c4c4c4" stroke-width="1.2" fill="none" stroke-linejoin="miter"/><rect x="849" y="230.15" width="123.75" height="17.5" rx="2" fill="none" stroke="#858585" stroke-width="1.5"/><line x1="939.30" y1="230.10" x2="939.30" y2="247.70" stroke="#858585" stroke-width="1.5" stroke-linecap="butt"/><line x1="955.60" y1="230.10" x2="955.60" y2="247.70" stroke="#858585" stroke-width="1.5" stroke-linecap="butt"/><polygon points="945.20,239.20 949.30,235.80 949.30,242.60" fill="#8a8a8a"/><polygon points="961.60,235.80 965.70,239.20 961.60,242.60" fill="#8a8a8a"/><polyline points="895.00,467.00 908.00,467.00" stroke="#8c8c8c" stroke-width="1.5" fill="none" stroke-linejoin="miter"/><polyline points="895.00,483.00 903.00,483.00 910.40,474.50" stroke="#8c8c8c" stroke-width="1.5" fill="none" stroke-linejoin="miter"/><polyline points="895.00,451.60 903.00,451.60 910.40,459.50" stroke="#8fbaff" stroke-width="2.2" fill="none" stroke-linejoin="miter"/><circle cx="924.10" cy="467.80" r="12.4" fill="rgba(0,0,0,0.18)"/><circle cx="923.80" cy="467.00" r="11.8" fill="url(#lk)"/><line x1="925.10" y1="463.43" x2="926.98" y2="458.26" stroke="#0c1c38" stroke-width="2.4" stroke-linecap="butt"/><circle cx="924.30" cy="512.80" r="12.4" fill="rgba(0,0,0,0.18)"/><circle cx="924.00" cy="512.00" r="11.8" fill="url(#lk)"/><line x1="924.98" y1="508.33" x2="926.41" y2="503.02" stroke="#0c1c38" stroke-width="2.4" stroke-linecap="butt"/><circle cx="958.30" cy="512.80" r="12.4" fill="rgba(0,0,0,0.18)"/><circle cx="958.00" cy="512.00" r="11.8" fill="url(#lk)"/><line x1="960.18" y1="508.89" x2="963.33" y2="504.38" stroke="#0c1c38" stroke-width="2.4" stroke-linecap="butt"/><circle cx="924.30" cy="564.80" r="12.4" fill="rgba(0,0,0,0.18)"/><circle cx="924.00" cy="564.00" r="11.8" fill="url(#lk)"/><line x1="920.71" y1="562.10" x2="915.95" y2="559.35" stroke="#0c1c38" stroke-width="2.4" stroke-linecap="butt"/><polygon points="849.60,589.50 972.00,589.50 952.00,610.60 870.00,610.60" fill="#b8b8b8"/><circle cx="864.10" cy="633.50" r="12.4" fill="rgba(0,0,0,0.18)"/><circle cx="863.80" cy="632.70" r="11.8" fill="url(#lk)"/><line x1="867.09" y1="630.80" x2="871.85" y2="628.05" stroke="#0c1c38" stroke-width="2.4" stroke-linecap="butt"/><polyline points="902.00,661.60 902.00,654.40 909.50,654.40" stroke="#a6a6a6" stroke-width="1.4" fill="none" stroke-linejoin="miter"/><polyline points="902.00,762.00 902.00,769.00 910.50,769.00" stroke="#a6a6a6" stroke-width="1.4" fill="none" stroke-linejoin="miter"/><circle cx="925.10" cy="667.80" r="12.4" fill="rgba(0,0,0,0.18)"/><circle cx="924.80" cy="667.00" r="11.8" fill="url(#lk)"/><line x1="922.90" y1="670.29" x2="920.15" y2="675.05" stroke="#0c1c38" stroke-width="2.4" stroke-linecap="butt"/><circle cx="925.10" cy="697.80" r="12.4" fill="rgba(0,0,0,0.18)"/><circle cx="924.80" cy="697.00" r="11.8" fill="url(#lk)"/><line x1="921.00" y1="697.00" x2="915.50" y2="697.00" stroke="#0c1c38" stroke-width="2.4" stroke-linecap="butt"/><circle cx="925.10" cy="727.80" r="12.4" fill="rgba(0,0,0,0.18)"/><circle cx="924.80" cy="727.00" r="11.8" fill="url(#lk)"/><line x1="922.90" y1="730.29" x2="920.15" y2="735.05" stroke="#0c1c38" stroke-width="2.4" stroke-linecap="butt"/><circle cx="923.30" cy="756.80" r="12.4" fill="rgba(0,0,0,0.18)"/><circle cx="923.00" cy="756.00" r="11.8" fill="url(#lk)"/><line x1="919.71" y1="754.10" x2="914.95" y2="751.35" stroke="#0c1c38" stroke-width="2.4" stroke-linecap="butt"/><polygon points="989.00,71.00 1113.00,71.00 1092.00,92.50 1010.00,92.50" fill="#b8b8b8"/><circle cx="1037.5" cy="115.8" r="7" fill="url(#mi)"/><rect x="1031.80" y="115.00" width="1.6" height="1.6" fill="#555"/><rect x="1032.95" y="111.85" width="1.6" height="1.6" fill="#555"/><rect x="1036.70" y="110.10" width="1.6" height="1.6" fill="#555"/><rect x="1040.45" y="111.85" width="1.6" height="1.6" fill="#555"/><rect x="1041.60" y="115.00" width="1.6" height="1.6" fill="#555"/><path d="M1035.3,122.8 l1.2,-1.8 h2 l1.2,1.8 z" fill="#585858"/><circle cx="1099.3999999999999" cy="115.8" r="7" fill="url(#mi)"/><rect x="1093.70" y="115.00" width="1.6" height="1.6" fill="#555"/><rect x="1094.85" y="111.85" width="1.6" height="1.6" fill="#555"/><rect x="1098.60" y="110.10" width="1.6" height="1.6" fill="#555"/><rect x="1102.35" y="111.85" width="1.6" height="1.6" fill="#555"/><rect x="1103.50" y="115.00" width="1.6" height="1.6" fill="#555"/><path d="M1097.1999999999998,122.8 l1.2,-1.8 h2 l1.2,1.8 z" fill="#585858"/><polygon points="984.90,206.10 989.00,201.00 993.10,206.10" fill="#f0f0f0"/><polygon points="984.90,212.80 993.10,212.80 989.00,217.70" fill="#f0f0f0"/><path d="M1090.0,203.8 L1096.1,206.4 V213.4 L1090.3999999999999,215.9 L1083.8,213.4 V206.4 z" fill="#efefef"/><path d="M1084.1,206.5 L1090.2,208.20000000000002 L1095.8,206.5" stroke="#8a8a8a" stroke-width="0.7" fill="none"/><line x1="1090.2" y1="208.20000000000002" x2="1090.2" y2="215.8" stroke="#8a8a8a" stroke-width="0.8"/><text x="1086.8999999999999" y="213.3" font-size="5.5" font-weight="bold" fill="#8a8a8a" text-anchor="middle" font-family="Liberation Sans">?</text><text x="1093.3999999999999" y="213.3" font-size="5.5" font-weight="bold" fill="#8a8a8a" text-anchor="middle" font-family="Liberation Sans">?</text><path d="M1104.5,203.9 H1113.4 L1116.0,206.5 V215.5 a0.6 0.6 0 0 1 -0.6,0.6 H1104.5 a0.6 0.6 0 0 1 -0.6,-0.6 V204.5 a0.6 0.6 0 0 1 0.6,-0.6 z" fill="#efefef"/><rect x="1105.2" y="205.20000000000002" width="5.7" height="2.6" fill="#6a6a6a"/><circle cx="1111.9" cy="212.1" r="1.6" fill="#6a6a6a"/><path d="M1002.64,273.96A9,9 0 1 1 1015.36,273.96" stroke="#7d7d7d" stroke-width="6" fill="none"/><path d="M1045.64,273.96A9,9 0 1 1 1058.36,273.96" stroke="#7d7d7d" stroke-width="6" fill="none"/><path d="M1050.75,258.69A9,9 0 0 1 1052.00,258.60" stroke="#74f27c" stroke-width="6" fill="none"/><path d="M1086.64,273.96A9,9 0 1 1 1099.36,273.96" stroke="#7d7d7d" stroke-width="6" fill="none"/><path d="M1002.64,331.96A9,9 0 1 1 1015.36,331.96" stroke="#7d7d7d" stroke-width="6" fill="none"/><path d="M1045.64,331.96A9,9 0 1 1 1058.36,331.96" stroke="#7d7d7d" stroke-width="6" fill="none"/><path d="M1047.50,333.39A9,9 0 1 1 1056.50,333.39" stroke="#74f27c" stroke-width="6" fill="none"/><path d="M1086.64,331.96A9,9 0 1 1 1099.36,331.96" stroke="#7d7d7d" stroke-width="6" fill="none"/><path d="M1088.50,333.39A9,9 0 1 1 1101.95,324.66" stroke="#74f27c" stroke-width="6" fill="none"/><path d="M1002.64,389.96A9,9 0 1 1 1015.36,389.96" stroke="#7d7d7d" stroke-width="6" fill="none"/><path d="M1045.64,389.96A9,9 0 1 1 1058.36,389.96" stroke="#7d7d7d" stroke-width="6" fill="none"/><path d="M1086.64,389.96A9,9 0 1 1 1099.36,389.96" stroke="#7d7d7d" stroke-width="6" fill="none"/><polyline points="997.50,309.50 997.50,303.50 1081.47,303.50" stroke="#c4c4c4" stroke-width="1.2" fill="none" stroke-linejoin="miter"/><polyline points="997.50,367.50 997.50,361.50 1074.28,361.50" stroke="#c4c4c4" stroke-width="1.2" fill="none" stroke-linejoin="miter"/><rect x="989" y="230.15" width="123.75" height="17.5" rx="2" fill="none" stroke="#858585" stroke-width="1.5"/><line x1="1079.30" y1="230.10" x2="1079.30" y2="247.70" stroke="#858585" stroke-width="1.5" stroke-linecap="butt"/><line x1="1095.60" y1="230.10" x2="1095.60" y2="247.70" stroke="#858585" stroke-width="1.5" stroke-linecap="butt"/><polygon points="1085.20,239.20 1089.30,235.80 1089.30,242.60" fill="#8a8a8a"/><polygon points="1101.60,235.80 1105.70,239.20 1101.60,242.60" fill="#8a8a8a"/><polyline points="1035.00,451.60 1043.00,451.60 1050.40,459.50" stroke="#8c8c8c" stroke-width="1.5" fill="none" stroke-linejoin="miter"/><polyline points="1035.00,483.00 1043.00,483.00 1050.40,474.50" stroke="#8c8c8c" stroke-width="1.5" fill="none" stroke-linejoin="miter"/><polyline points="1035.00,467.00 1048.00,467.00" stroke="#8fbaff" stroke-width="2.2" fill="none" stroke-linejoin="miter"/><circle cx="1064.10" cy="467.80" r="12.4" fill="rgba(0,0,0,0.18)"/><circle cx="1063.80" cy="467.00" r="11.8" fill="url(#lk)"/><line x1="1061.90" y1="470.29" x2="1059.15" y2="475.05" stroke="#0c1c38" stroke-width="2.4" stroke-linecap="butt"/><circle cx="1064.30" cy="512.80" r="12.4" fill="rgba(0,0,0,0.18)"/><circle cx="1064.00" cy="512.00" r="11.8" fill="url(#lk)"/><line x1="1065.90" y1="515.29" x2="1068.65" y2="520.05" stroke="#0c1c38" stroke-width="2.4" stroke-linecap="butt"/><circle cx="1098.30" cy="512.80" r="12.4" fill="rgba(0,0,0,0.18)"/><circle cx="1098.00" cy="512.00" r="11.8" fill="url(#lk)"/><line x1="1096.10" y1="515.29" x2="1093.35" y2="520.05" stroke="#0c1c38" stroke-width="2.4" stroke-linecap="butt"/><circle cx="1064.30" cy="564.80" r="12.4" fill="rgba(0,0,0,0.18)"/><circle cx="1064.00" cy="564.00" r="11.8" fill="url(#lk)"/><line x1="1064.66" y1="560.26" x2="1065.61" y2="554.84" stroke="#0c1c38" stroke-width="2.4" stroke-linecap="butt"/><polygon points="989.60,589.50 1112.00,589.50 1092.00,610.60 1010.00,610.60" fill="#b8b8b8"/><circle cx="1004.10" cy="633.50" r="12.4" fill="rgba(0,0,0,0.18)"/><circle cx="1003.80" cy="632.70" r="11.8" fill="url(#lk)"/><line x1="1003.80" y1="628.90" x2="1003.80" y2="623.40" stroke="#0c1c38" stroke-width="2.4" stroke-linecap="butt"/><polyline points="1042.00,661.60 1042.00,654.40 1049.50,654.40" stroke="#a6a6a6" stroke-width="1.4" fill="none" stroke-linejoin="miter"/><polyline points="1042.00,762.00 1042.00,769.00 1050.50,769.00" stroke="#a6a6a6" stroke-width="1.4" fill="none" stroke-linejoin="miter"/><circle cx="1065.10" cy="667.80" r="12.4" fill="rgba(0,0,0,0.18)"/><circle cx="1064.80" cy="667.00" r="11.8" fill="url(#lk)"/><line x1="1062.90" y1="670.29" x2="1060.15" y2="675.05" stroke="#0c1c38" stroke-width="2.4" stroke-linecap="butt"/><circle cx="1065.10" cy="697.80" r="12.4" fill="rgba(0,0,0,0.18)"/><circle cx="1064.80" cy="697.00" r="11.8" fill="url(#lk)"/><line x1="1066.10" y1="693.43" x2="1067.98" y2="688.26" stroke="#0c1c38" stroke-width="2.4" stroke-linecap="butt"/><circle cx="1065.10" cy="727.80" r="12.4" fill="rgba(0,0,0,0.18)"/><circle cx="1064.80" cy="727.00" r="11.8" fill="url(#lk)"/><line x1="1062.90" y1="730.29" x2="1060.15" y2="735.05" stroke="#0c1c38" stroke-width="2.4" stroke-linecap="butt"/><circle cx="1063.30" cy="756.80" r="12.4" fill="rgba(0,0,0,0.18)"/><circle cx="1063.00" cy="756.00" r="11.8" fill="url(#lk)"/><line x1="1061.10" y1="759.29" x2="1058.35" y2="764.05" stroke="#0c1c38" stroke-width="2.4" stroke-linecap="butt"/><polyline points="1133.10,117.60 1133.10,110.10 1140.60,110.10" stroke="#c4c4c4" stroke-width="2.2" fill="none" stroke-linejoin="miter"/><polyline points="1261.90,110.10 1269.40,110.10 1269.40,117.60" stroke="#c4c4c4" stroke-width="2.2" fill="none" stroke-linejoin="miter"/><path d="M1230.38,109.61 A6.2 6.2 0 1 0 1238.02,109.61" stroke="#80b4ff" stroke-width="2" fill="none" stroke-linecap="butt"/><line x1="1234.20" y1="106.90" x2="1234.20" y2="113.30" stroke="#80b4ff" stroke-width="2" stroke-linecap="butt"/><circle cx="1219.80" cy="147.70" r="9" stroke="url(#dk)" stroke-width="6" fill="none"/><line x1="1213.40" y1="148.83" x2="1208.67" y2="149.66" stroke="#e8e8e8" stroke-width="2" stroke-linecap="butt"/><circle cx="1257.60" cy="147.70" r="9" stroke="url(#dk)" stroke-width="6" fill="none"/><line x1="1251.97" y1="144.45" x2="1247.81" y2="142.05" stroke="#e8e8e8" stroke-width="2" stroke-linecap="butt"/><polyline points="1133.10,234.60 1133.10,227.10 1140.60,227.10" stroke="#c4c4c4" stroke-width="2.2" fill="none" stroke-linejoin="miter"/><polyline points="1261.90,227.10 1269.40,227.10 1269.40,234.60" stroke="#c4c4c4" stroke-width="2.2" fill="none" stroke-linejoin="miter"/><path d="M1230.38,227.11 A6.2 6.2 0 1 0 1238.02,227.11" stroke="#80b4ff" stroke-width="2" fill="none" stroke-linecap="butt"/><line x1="1234.20" y1="224.40" x2="1234.20" y2="230.80" stroke="#80b4ff" stroke-width="2" stroke-linecap="butt"/><polygon points="1256.50,268.75 1264.00,268.75 1260.25,273.15" fill="#ececec"/><polyline points="1133.10,304.80 1133.10,297.30 1140.60,297.30" stroke="#c4c4c4" stroke-width="2.2" fill="none" stroke-linejoin="miter"/><polyline points="1261.90,297.30 1269.40,297.30 1269.40,304.80" stroke="#c4c4c4" stroke-width="2.2" fill="none" stroke-linejoin="miter"/><path d="M1230.38,297.31 A6.2 6.2 0 1 0 1238.02,297.31" stroke="#80b4ff" stroke-width="2" fill="none" stroke-linecap="butt"/><line x1="1234.20" y1="294.60" x2="1234.20" y2="301.00" stroke="#80b4ff" stroke-width="2" stroke-linecap="butt"/><circle cx="1162.70" cy="327.50" r="9" stroke="url(#dk)" stroke-width="6" fill="none"/><line x1="1159.45" y1="333.13" x2="1157.05" y2="337.29" stroke="#e8e8e8" stroke-width="2" stroke-linecap="butt"/><circle cx="1200.90" cy="327.50" r="9" stroke="url(#dk)" stroke-width="6" fill="none"/><line x1="1194.50" y1="328.63" x2="1189.77" y2="329.46" stroke="#e8e8e8" stroke-width="2" stroke-linecap="butt"/><circle cx="1238.70" cy="327.50" r="9" stroke="url(#dk)" stroke-width="6" fill="none"/><line x1="1233.07" y1="330.75" x2="1228.91" y2="333.15" stroke="#e8e8e8" stroke-width="2" stroke-linecap="butt"/><polygon points="1256.50,385.90 1264.00,385.90 1260.25,390.30" fill="#ececec"/><polyline points="1133.10,421.60 1133.10,414.10 1140.60,414.10" stroke="#c4c4c4" stroke-width="2.2" fill="none" stroke-linejoin="miter"/><polyline points="1261.90,414.10 1269.40,414.10 1269.40,421.60" stroke="#c4c4c4" stroke-width="2.2" fill="none" stroke-linejoin="miter"/><path d="M1230.38,414.31 A6.2 6.2 0 1 0 1238.02,414.31" stroke="#80b4ff" stroke-width="2" fill="none" stroke-linecap="butt"/><line x1="1234.20" y1="411.60" x2="1234.20" y2="418.00" stroke="#80b4ff" stroke-width="2" stroke-linecap="butt"/><circle cx="1143.70" cy="444.20" r="9" stroke="url(#dk)" stroke-width="6" fill="none"/><line x1="1138.07" y1="440.95" x2="1133.91" y2="438.55" stroke="#e8e8e8" stroke-width="2" stroke-linecap="butt"/><circle cx="1181.60" cy="444.20" r="9" stroke="url(#dk)" stroke-width="6" fill="none"/><line x1="1184.85" y1="438.57" x2="1187.25" y2="434.41" stroke="#e8e8e8" stroke-width="2" stroke-linecap="butt"/><circle cx="1219.80" cy="444.20" r="9" stroke="url(#dk)" stroke-width="6" fill="none"/><line x1="1216.55" y1="449.83" x2="1214.15" y2="453.99" stroke="#e8e8e8" stroke-width="2" stroke-linecap="butt"/><circle cx="1257.60" cy="444.20" r="9" stroke="url(#dk)" stroke-width="6" fill="none"/><line x1="1254.35" y1="438.57" x2="1251.95" y2="434.41" stroke="#e8e8e8" stroke-width="2" stroke-linecap="butt"/><polyline points="1133.10,525.60 1133.10,518.10 1140.60,518.10" stroke="#c4c4c4" stroke-width="2.2" fill="none" stroke-linejoin="miter"/><polyline points="1261.90,518.10 1269.40,518.10 1269.40,525.60" stroke="#c4c4c4" stroke-width="2.2" fill="none" stroke-linejoin="miter"/><path d="M1230.38,518.11 A6.2 6.2 0 1 0 1238.02,518.11" stroke="#80b4ff" stroke-width="2" fill="none" stroke-linecap="butt"/><line x1="1234.20" y1="515.40" x2="1234.20" y2="521.80" stroke="#80b4ff" stroke-width="2" stroke-linecap="butt"/><circle cx="1162.90" cy="548.50" r="9" stroke="url(#dk)" stroke-width="6" fill="none"/><line x1="1157.27" y1="551.75" x2="1153.11" y2="554.15" stroke="#e8e8e8" stroke-width="2" stroke-linecap="butt"/><circle cx="1200.70" cy="548.50" r="9" stroke="url(#dk)" stroke-width="6" fill="none"/><line x1="1197.45" y1="554.13" x2="1195.05" y2="558.29" stroke="#e8e8e8" stroke-width="2" stroke-linecap="butt"/><circle cx="1239.00" cy="548.50" r="9" stroke="url(#dk)" stroke-width="6" fill="none"/><line x1="1235.75" y1="554.13" x2="1233.35" y2="558.29" stroke="#e8e8e8" stroke-width="2" stroke-linecap="butt"/><polygon points="1132.60,589.50 1269.00,589.50 1248.60,610.80 1153.00,610.80" fill="#232323"/><circle cx="1144" cy="633" r="12" fill="url(#mp)"/><line x1="1144.00" y1="623.50" x2="1144.00" y2="628.50" stroke="#f0f0f0" stroke-width="2" stroke-linecap="butt"/><polyline points="1181.50,679.00 1181.50,670.80 1189.00,670.80" stroke="#c0c0c0" stroke-width="1.8" fill="none" stroke-linejoin="miter"/><polyline points="1262.00,670.80 1269.50,670.80 1269.50,679.00" stroke="#c0c0c0" stroke-width="1.8" fill="none" stroke-linejoin="miter"/><circle cx="1204.80" cy="694.60" r="9" stroke="url(#dk)" stroke-width="6" fill="none"/><line x1="1208.05" y1="688.97" x2="1210.45" y2="684.81" stroke="#e8e8e8" stroke-width="2" stroke-linecap="butt"/><circle cx="1246.50" cy="694.60" r="9" stroke="url(#dk)" stroke-width="6" fill="none"/><line x1="1243.25" y1="688.97" x2="1240.85" y2="684.81" stroke="#e8e8e8" stroke-width="2" stroke-linecap="butt"/><circle cx="1204.80" cy="741.20" r="9" stroke="url(#dk)" stroke-width="6" fill="none"/><line x1="1201.55" y1="746.83" x2="1199.15" y2="750.99" stroke="#e8e8e8" stroke-width="2" stroke-linecap="butt"/><circle cx="1246.50" cy="741.20" r="9" stroke="url(#dk)" stroke-width="6" fill="none"/><line x1="1240.10" y1="742.33" x2="1235.37" y2="743.16" stroke="#e8e8e8" stroke-width="2" stroke-linecap="butt"/></svg>
<div class="t" style="left:490.00px;top:3.50px;width:300px;line-height:16px;height:16px;font-size:13.5px;color:#4d4d4d;font-weight:normal;text-align:center;transform:scaleX(1.03);transform-origin:center center;">Drumsynth 500</div><div class="t" style="left:99.00px;top:32.20px;width:260px;line-height:30px;height:30px;font-size:24px;color:#e2e2e2;font-weight:bold;text-align:left;transform:scaleX(1.127);transform-origin:left center;"><span style="color:#e2e2e2;-webkit-text-stroke:1.1px #e2e2e2">DRUM</span><span style="color:#b9b9b9;-webkit-text-stroke:1.1px #b9b9b9">SYNTH</span><span style="color:#8cbcff;-webkit-text-stroke:1.1px #8cbcff">500</span></div><div class="t" style="left:453.30px;top:39.00px;width:80px;line-height:16px;height:16px;font-size:12.5px;color:#dcdcdc;font-weight:bold;text-align:left;">Drum Kit</div><div class="t" style="left:534.00px;top:39.30px;width:160px;line-height:16px;height:16px;font-size:14px;color:#ececec;font-weight:bold;text-align:center;">Retro Dance</div><div class="t" style="left:6.00px;top:74.20px;width:130px;line-height:16px;height:16px;font-size:11.5px;color:#515151;font-weight:bold;text-align:center;">KICK</div><div class="t" style="left:7.85px;top:107.50px;width:50px;line-height:16px;height:16px;font-size:14px;color:#8cbaff;font-weight:bold;text-align:center;letter-spacing:-0.6px;">G-1</div><div class="t" style="left:6.90px;top:154.30px;width:40px;line-height:16px;height:16px;font-size:10.5px;color:#8cbaff;font-weight:bold;text-align:center;letter-spacing:-0.3px;">1/16</div><div class="t" style="left:62.75px;top:154.00px;width:40px;line-height:16px;height:16px;font-size:10.5px;color:#111;font-weight:bold;text-align:center;transform:scaleX(0.83);transform-origin:center center;">REP</div><div class="t" style="left:98.70px;top:154.00px;width:40px;line-height:16px;height:16px;font-size:10.5px;color:#111;font-weight:bold;text-align:center;transform:scaleX(0.83);transform-origin:center center;">FULL</div><div class="t" style="left:15.50px;top:175.80px;width:40px;line-height:16px;height:16px;font-size:10.5px;color:#1c1c1c;font-weight:bold;text-align:left;transform:scaleX(0.85);transform-origin:left center;">RATE</div><div class="t" style="left:22.10px;top:202.60px;width:80px;line-height:16px;height:16px;font-size:12.5px;color:#ececec;font-weight:bold;text-align:left;letter-spacing:-0.2px;">Snarl</div><div class="t" style="left:-1.00px;top:280.00px;width:60px;line-height:16px;height:16px;font-size:10.5px;color:#cccccc;font-weight:bold;text-align:center;transform:scaleX(0.9);transform-origin:center center;">TUNE</div><div class="t" style="left:42.00px;top:280.00px;width:60px;line-height:16px;height:16px;font-size:10.5px;color:#cccccc;font-weight:bold;text-align:center;transform:scaleX(0.9);transform-origin:center center;">DECAY</div><div class="t" style="left:83.00px;top:280.00px;width:60px;line-height:16px;height:16px;font-size:10.5px;color:#cccccc;font-weight:bold;text-align:center;transform:scaleX(0.9);transform-origin:center center;">CURVE</div><div class="t" style="left:-1.00px;top:338.00px;width:60px;line-height:16px;height:16px;font-size:10.5px;color:#cccccc;font-weight:bold;text-align:center;transform:scaleX(0.9);transform-origin:center center;">AMNT</div><div class="t" style="left:42.00px;top:338.00px;width:60px;line-height:16px;height:16px;font-size:10.5px;color:#cccccc;font-weight:bold;text-align:center;transform:scaleX(0.9);transform-origin:center center;">DECAY</div><div class="t" style="left:83.00px;top:338.00px;width:60px;line-height:16px;height:16px;font-size:10.5px;color:#cccccc;font-weight:bold;text-align:center;transform:scaleX(0.9);transform-origin:center center;">CURVE</div><div class="t" style="left:-1.00px;top:396.00px;width:60px;line-height:16px;height:16px;font-size:10.5px;color:#cccccc;font-weight:bold;text-align:center;transform:scaleX(0.9);transform-origin:center center;">CLICK</div><div class="t" style="left:42.00px;top:396.00px;width:60px;line-height:16px;height:16px;font-size:10.5px;color:#cccccc;font-weight:bold;text-align:center;transform:scaleX(0.9);transform-origin:center center;">NOISE</div><div class="t" style="left:83.00px;top:396.00px;width:60px;line-height:16px;height:16px;font-size:10.5px;color:#cccccc;font-weight:bold;text-align:center;transform:scaleX(0.9);transform-origin:center center;">DRIVE</div><div class="t" style="left:12.00px;top:413.60px;width:120px;line-height:16px;height:16px;font-size:10px;color:#8aa6ff;font-weight:bold;text-align:center;transform:scaleX(0.97);transform-origin:center center;">ANALOG OSC</div><div class="t" style="left:46.50px;top:240.10px;width:80px;line-height:16px;height:16px;font-size:10.5px;color:#c6c6c6;font-weight:bold;text-align:right;transform:scaleX(0.88);transform-origin:right center;font-style:italic;">AMP</div><div class="t" style="left:46.50px;top:298.10px;width:80px;line-height:16px;height:16px;font-size:10.5px;color:#c6c6c6;font-weight:bold;text-align:right;transform:scaleX(0.88);transform-origin:right center;font-style:italic;">PITCH</div><div class="t" style="left:28.30px;top:443.00px;width:40px;line-height:16px;height:16px;font-size:10.5px;color:#8fbaff;font-weight:bold;text-align:left;transform:scaleX(0.88);transform-origin:left center;">DSRT</div><div class="t" style="left:28.30px;top:459.00px;width:40px;line-height:16px;height:16px;font-size:10.5px;color:#dcdcdc;font-weight:bold;text-align:left;transform:scaleX(0.88);transform-origin:left center;">BIT</div><div class="t" style="left:28.30px;top:475.00px;width:40px;line-height:16px;height:16px;font-size:10.5px;color:#dcdcdc;font-weight:bold;text-align:left;transform:scaleX(0.88);transform-origin:left center;">DECI</div><div class="t" style="left:101.50px;top:459.00px;width:40px;line-height:16px;height:16px;font-size:10.5px;color:#dcdcdc;font-weight:bold;text-align:left;transform:scaleX(0.98);transform-origin:left center;">AMNT</div><div class="t" style="left:9.00px;top:504.30px;width:30px;line-height:16px;height:16px;font-size:10.5px;color:#111;font-weight:bold;text-align:center;transform:scaleX(0.88);transform-origin:center center;">Pk</div><div class="t" style="left:13.00px;top:527.30px;width:40px;line-height:16px;height:16px;font-size:10.5px;color:#dcdcdc;font-weight:bold;text-align:left;transform:scaleX(0.88);transform-origin:left center;">TYPE</div><div class="t" style="left:64.00px;top:527.30px;width:40px;line-height:16px;height:16px;font-size:10.5px;color:#dcdcdc;font-weight:bold;text-align:center;transform:scaleX(0.88);transform-origin:center center;">CUT</div><div class="t" style="left:98.00px;top:527.30px;width:40px;line-height:16px;height:16px;font-size:10.5px;color:#dcdcdc;font-weight:bold;text-align:center;transform:scaleX(0.88);transform-origin:center center;">RES</div><div class="t" style="left:28.30px;top:548.60px;width:50px;line-height:16px;height:16px;font-size:10.5px;color:#dcdcdc;font-weight:bold;text-align:left;transform:scaleX(0.88);transform-origin:left center;">FAST</div><div class="t" style="left:28.30px;top:564.20px;width:50px;line-height:16px;height:16px;font-size:10.5px;color:#dcdcdc;font-weight:bold;text-align:left;transform:scaleX(0.88);transform-origin:left center;">PUNCH</div><div class="t" style="left:101.00px;top:556.50px;width:40px;line-height:16px;height:16px;font-size:10.5px;color:#dcdcdc;font-weight:bold;text-align:left;transform:scaleX(0.93);transform-origin:left center;">COMP</div><div class="t" style="left:6.00px;top:592.30px;width:130px;line-height:16px;height:16px;font-size:11.5px;color:#515151;font-weight:bold;text-align:center;">KICK</div><div class="t" style="left:3.80px;top:647.30px;width:40px;line-height:16px;height:16px;font-size:10.5px;color:#1c1c1c;font-weight:bold;text-align:center;transform:scaleX(0.88);transform-origin:center center;">PAN</div><div class="t" style="left:75.00px;top:625.00px;width:20px;line-height:16px;height:16px;font-size:11px;color:#111;font-weight:bold;text-align:center;transform:scaleX(0.88);transform-origin:center center;">M</div><div class="t" style="left:104.90px;top:625.00px;width:20px;line-height:16px;height:16px;font-size:11px;color:#111;font-weight:bold;text-align:center;transform:scaleX(0.88);transform-origin:center center;">S</div><div class="t" style="left:53.40px;top:666.00px;width:20px;line-height:16px;height:16px;font-size:10.5px;color:#9c9c9c;font-weight:bold;text-align:center;">S</div><div class="t" style="left:53.40px;top:685.50px;width:20px;line-height:16px;height:16px;font-size:10.5px;color:#9c9c9c;font-weight:bold;text-align:center;">E</div><div class="t" style="left:53.40px;top:704.50px;width:20px;line-height:16px;height:16px;font-size:10.5px;color:#9c9c9c;font-weight:bold;text-align:center;">N</div><div class="t" style="left:53.40px;top:723.00px;width:20px;line-height:16px;height:16px;font-size:10.5px;color:#9c9c9c;font-weight:bold;text-align:center;">D</div><div class="t" style="left:53.40px;top:742.00px;width:20px;line-height:16px;height:16px;font-size:10.5px;color:#9c9c9c;font-weight:bold;text-align:center;">S</div><div class="t" style="left:103.00px;top:658.70px;width:40px;line-height:16px;height:16px;font-size:10.5px;color:#1c1c1c;font-weight:bold;text-align:left;transform:scaleX(0.85);transform-origin:left center;">REV A</div><div class="t" style="left:103.00px;top:688.70px;width:40px;line-height:16px;height:16px;font-size:10.5px;color:#1c1c1c;font-weight:bold;text-align:left;transform:scaleX(0.85);transform-origin:left center;">REV B</div><div class="t" style="left:103.00px;top:718.70px;width:40px;line-height:16px;height:16px;font-size:10.5px;color:#1c1c1c;font-weight:bold;text-align:left;transform:scaleX(0.85);transform-origin:left center;">DLY A</div><div class="t" style="left:103.00px;top:747.70px;width:40px;line-height:16px;height:16px;font-size:10.5px;color:#1c1c1c;font-weight:bold;text-align:left;transform:scaleX(0.85);transform-origin:left center;">DLY B</div><div class="t" style="left:146.00px;top:74.20px;width:130px;line-height:16px;height:16px;font-size:11.5px;color:#515151;font-weight:bold;text-align:center;">SNARE</div><div class="t" style="left:147.85px;top:107.50px;width:50px;line-height:16px;height:16px;font-size:14px;color:#8cbaff;font-weight:bold;text-align:center;letter-spacing:-0.6px;">D1</div><div class="t" style="left:146.90px;top:154.30px;width:40px;line-height:16px;height:16px;font-size:10.5px;color:#8cbaff;font-weight:bold;text-align:center;letter-spacing:-0.3px;">1/16</div><div class="t" style="left:202.75px;top:154.00px;width:40px;line-height:16px;height:16px;font-size:10.5px;color:#111;font-weight:bold;text-align:center;transform:scaleX(0.83);transform-origin:center center;">REP</div><div class="t" style="left:238.70px;top:154.00px;width:40px;line-height:16px;height:16px;font-size:10.5px;color:#111;font-weight:bold;text-align:center;transform:scaleX(0.83);transform-origin:center center;">FULL</div><div class="t" style="left:155.50px;top:175.80px;width:40px;line-height:16px;height:16px;font-size:10.5px;color:#1c1c1c;font-weight:bold;text-align:left;transform:scaleX(0.85);transform-origin:left center;">RATE</div><div class="t" style="left:162.10px;top:202.60px;width:80px;line-height:16px;height:16px;font-size:12.5px;color:#ececec;font-weight:bold;text-align:left;letter-spacing:-0.2px;">BytePunch</div><div class="t" style="left:139.00px;top:280.00px;width:60px;line-height:16px;height:16px;font-size:10.5px;color:#cccccc;font-weight:bold;text-align:center;transform:scaleX(0.9);transform-origin:center center;">TUNE</div><div class="t" style="left:182.00px;top:280.00px;width:60px;line-height:16px;height:16px;font-size:10.5px;color:#cccccc;font-weight:bold;text-align:center;transform:scaleX(0.9);transform-origin:center center;">DECAY</div><div class="t" style="left:223.00px;top:280.00px;width:60px;line-height:16px;height:16px;font-size:10.5px;color:#cccccc;font-weight:bold;text-align:center;transform:scaleX(0.9);transform-origin:center center;">BEND</div><div class="t" style="left:139.00px;top:338.00px;width:60px;line-height:16px;height:16px;font-size:10.5px;color:#cccccc;font-weight:bold;text-align:center;transform:scaleX(0.9);transform-origin:center center;">NOISE</div><div class="t" style="left:182.00px;top:338.00px;width:60px;line-height:16px;height:16px;font-size:10.5px;color:#cccccc;font-weight:bold;text-align:center;transform:scaleX(0.9);transform-origin:center center;">DECAY</div><div class="t" style="left:223.00px;top:338.00px;width:60px;line-height:16px;height:16px;font-size:10.5px;color:#cccccc;font-weight:bold;text-align:center;transform:scaleX(0.9);transform-origin:center center;">COLOR</div><div class="t" style="left:139.00px;top:396.00px;width:60px;line-height:16px;height:16px;font-size:10.5px;color:#cccccc;font-weight:bold;text-align:center;transform:scaleX(0.9);transform-origin:center center;">DIODE</div><div class="t" style="left:182.00px;top:396.00px;width:60px;line-height:16px;height:16px;font-size:10.5px;color:#cccccc;font-weight:bold;text-align:center;transform:scaleX(0.9);transform-origin:center center;">HPF</div><div class="t" style="left:223.00px;top:396.00px;width:60px;line-height:16px;height:16px;font-size:10.5px;color:#cccccc;font-weight:bold;text-align:center;transform:scaleX(0.9);transform-origin:center center;">RESO</div><div class="t" style="left:152.00px;top:413.60px;width:120px;line-height:16px;height:16px;font-size:10px;color:#8aa6ff;font-weight:bold;text-align:center;transform:scaleX(0.97);transform-origin:center center;">ANALOG OSC</div><div class="t" style="left:186.50px;top:240.10px;width:80px;line-height:16px;height:16px;font-size:10.5px;color:#c6c6c6;font-weight:bold;text-align:right;transform:scaleX(0.88);transform-origin:right center;font-style:italic;">BODY</div><div class="t" style="left:186.50px;top:298.10px;width:80px;line-height:16px;height:16px;font-size:10.5px;color:#c6c6c6;font-weight:bold;text-align:right;transform:scaleX(0.88);transform-origin:right center;font-style:italic;">SNARES</div><div class="t" style="left:168.30px;top:443.00px;width:40px;line-height:16px;height:16px;font-size:10.5px;color:#dcdcdc;font-weight:bold;text-align:left;transform:scaleX(0.88);transform-origin:left center;">DSRT</div><div class="t" style="left:168.30px;top:459.00px;width:40px;line-height:16px;height:16px;font-size:10.5px;color:#8fbaff;font-weight:bold;text-align:left;transform:scaleX(0.88);transform-origin:left center;">BIT</div><div class="t" style="left:168.30px;top:475.00px;width:40px;line-height:16px;height:16px;font-size:10.5px;color:#dcdcdc;font-weight:bold;text-align:left;transform:scaleX(0.88);transform-origin:left center;">DECI</div><div class="t" style="left:241.50px;top:459.00px;width:40px;line-height:16px;height:16px;font-size:10.5px;color:#dcdcdc;font-weight:bold;text-align:left;transform:scaleX(0.98);transform-origin:left center;">AMNT</div><div class="t" style="left:149.00px;top:504.30px;width:30px;line-height:16px;height:16px;font-size:10.5px;color:#111;font-weight:bold;text-align:center;transform:scaleX(0.88);transform-origin:center center;">LP</div><div class="t" style="left:153.00px;top:527.30px;width:40px;line-height:16px;height:16px;font-size:10.5px;color:#dcdcdc;font-weight:bold;text-align:left;transform:scaleX(0.88);transform-origin:left center;">TYPE</div><div class="t" style="left:204.00px;top:527.30px;width:40px;line-height:16px;height:16px;font-size:10.5px;color:#dcdcdc;font-weight:bold;text-align:center;transform:scaleX(0.88);transform-origin:center center;">CUT</div><div class="t" style="left:238.00px;top:527.30px;width:40px;line-height:16px;height:16px;font-size:10.5px;color:#dcdcdc;font-weight:bold;text-align:center;transform:scaleX(0.88);transform-origin:center center;">RES</div><div class="t" style="left:168.30px;top:548.60px;width:50px;line-height:16px;height:16px;font-size:10.5px;color:#dcdcdc;font-weight:bold;text-align:left;transform:scaleX(0.88);transform-origin:left center;">FAST</div><div class="t" style="left:168.30px;top:564.20px;width:50px;line-height:16px;height:16px;font-size:10.5px;color:#dcdcdc;font-weight:bold;text-align:left;transform:scaleX(0.88);transform-origin:left center;">PUNCH</div><div class="t" style="left:241.00px;top:556.50px;width:40px;line-height:16px;height:16px;font-size:10.5px;color:#dcdcdc;font-weight:bold;text-align:left;transform:scaleX(0.93);transform-origin:left center;">COMP</div><div class="t" style="left:146.00px;top:592.30px;width:130px;line-height:16px;height:16px;font-size:11.5px;color:#515151;font-weight:bold;text-align:center;">SNARE</div><div class="t" style="left:143.80px;top:647.30px;width:40px;line-height:16px;height:16px;font-size:10.5px;color:#1c1c1c;font-weight:bold;text-align:center;transform:scaleX(0.88);transform-origin:center center;">PAN</div><div class="t" style="left:215.00px;top:625.00px;width:20px;line-height:16px;height:16px;font-size:11px;color:#111;font-weight:bold;text-align:center;transform:scaleX(0.88);transform-origin:center center;">M</div><div class="t" style="left:244.90px;top:625.00px;width:20px;line-height:16px;height:16px;font-size:11px;color:#111;font-weight:bold;text-align:center;transform:scaleX(0.88);transform-origin:center center;">S</div><div class="t" style="left:193.40px;top:666.00px;width:20px;line-height:16px;height:16px;font-size:10.5px;color:#9c9c9c;font-weight:bold;text-align:center;">S</div><div class="t" style="left:193.40px;top:685.50px;width:20px;line-height:16px;height:16px;font-size:10.5px;color:#9c9c9c;font-weight:bold;text-align:center;">E</div><div class="t" style="left:193.40px;top:704.50px;width:20px;line-height:16px;height:16px;font-size:10.5px;color:#9c9c9c;font-weight:bold;text-align:center;">N</div><div class="t" style="left:193.40px;top:723.00px;width:20px;line-height:16px;height:16px;font-size:10.5px;color:#9c9c9c;font-weight:bold;text-align:center;">D</div><div class="t" style="left:193.40px;top:742.00px;width:20px;line-height:16px;height:16px;font-size:10.5px;color:#9c9c9c;font-weight:bold;text-align:center;">S</div><div class="t" style="left:243.00px;top:658.70px;width:40px;line-height:16px;height:16px;font-size:10.5px;color:#1c1c1c;font-weight:bold;text-align:left;transform:scaleX(0.85);transform-origin:left center;">REV A</div><div class="t" style="left:243.00px;top:688.70px;width:40px;line-height:16px;height:16px;font-size:10.5px;color:#1c1c1c;font-weight:bold;text-align:left;transform:scaleX(0.85);transform-origin:left center;">REV B</div><div class="t" style="left:243.00px;top:718.70px;width:40px;line-height:16px;height:16px;font-size:10.5px;color:#1c1c1c;font-weight:bold;text-align:left;transform:scaleX(0.85);transform-origin:left center;">DLY A</div><div class="t" style="left:243.00px;top:747.70px;width:40px;line-height:16px;height:16px;font-size:10.5px;color:#1c1c1c;font-weight:bold;text-align:left;transform:scaleX(0.85);transform-origin:left center;">DLY B</div><div class="t" style="left:286.00px;top:74.20px;width:130px;line-height:16px;height:16px;font-size:11.5px;color:#515151;font-weight:bold;text-align:center;">CLAP</div><div class="t" style="left:287.85px;top:107.50px;width:50px;line-height:16px;height:16px;font-size:14px;color:#8cbaff;font-weight:bold;text-align:center;letter-spacing:-0.6px;">D#1</div><div class="t" style="left:286.90px;top:154.30px;width:40px;line-height:16px;height:16px;font-size:10.5px;color:#8cbaff;font-weight:bold;text-align:center;letter-spacing:-0.3px;">1/16</div><div class="t" style="left:342.75px;top:154.00px;width:40px;line-height:16px;height:16px;font-size:10.5px;color:#111;font-weight:bold;text-align:center;transform:scaleX(0.83);transform-origin:center center;">REP</div><div class="t" style="left:378.70px;top:154.00px;width:40px;line-height:16px;height:16px;font-size:10.5px;color:#111;font-weight:bold;text-align:center;transform:scaleX(0.83);transform-origin:center center;">FULL</div><div class="t" style="left:295.50px;top:175.80px;width:40px;line-height:16px;height:16px;font-size:10.5px;color:#1c1c1c;font-weight:bold;text-align:left;transform:scaleX(0.85);transform-origin:left center;">RATE</div><div class="t" style="left:302.10px;top:202.60px;width:80px;line-height:16px;height:16px;font-size:12.5px;color:#ececec;font-weight:bold;text-align:left;letter-spacing:-0.2px;">Rough</div><div class="t" style="left:279.00px;top:280.00px;width:60px;line-height:16px;height:16px;font-size:10.5px;color:#cccccc;font-weight:bold;text-align:center;transform:scaleX(0.9);transform-origin:center center;">GATE</div><div class="t" style="left:322.00px;top:280.00px;width:60px;line-height:16px;height:16px;font-size:10.5px;color:#cccccc;font-weight:bold;text-align:center;transform:scaleX(0.9);transform-origin:center center;">LEVEL</div><div class="t" style="left:363.00px;top:280.00px;width:60px;line-height:16px;height:16px;font-size:10.5px;color:#cccccc;font-weight:bold;text-align:center;transform:scaleX(0.9);transform-origin:center center;">TIME</div><div class="t" style="left:279.00px;top:338.00px;width:60px;line-height:16px;height:16px;font-size:10.5px;color:#cccccc;font-weight:bold;text-align:center;transform:scaleX(0.9);transform-origin:center center;">CLAPS</div><div class="t" style="left:322.00px;top:338.00px;width:60px;line-height:16px;height:16px;font-size:10.5px;color:#cccccc;font-weight:bold;text-align:center;transform:scaleX(0.9);transform-origin:center center;">NOISE</div><div class="t" style="left:363.00px;top:338.00px;width:60px;line-height:16px;height:16px;font-size:10.5px;color:#cccccc;font-weight:bold;text-align:center;transform:scaleX(0.9);transform-origin:center center;">COLOR</div><div class="t" style="left:279.00px;top:396.00px;width:60px;line-height:16px;height:16px;font-size:10.5px;color:#cccccc;font-weight:bold;text-align:center;transform:scaleX(0.9);transform-origin:center center;">LOW</div><div class="t" style="left:322.00px;top:396.00px;width:60px;line-height:16px;height:16px;font-size:10.5px;color:#cccccc;font-weight:bold;text-align:center;transform:scaleX(0.9);transform-origin:center center;">MID</div><div class="t" style="left:363.00px;top:396.00px;width:60px;line-height:16px;height:16px;font-size:10.5px;color:#cccccc;font-weight:bold;text-align:center;transform:scaleX(0.9);transform-origin:center center;">HIGH</div><div class="t" style="left:292.00px;top:413.60px;width:120px;line-height:16px;height:16px;font-size:10px;color:#ff8585;font-weight:bold;text-align:center;transform:scaleX(0.97);transform-origin:center center;">NOISE OSC</div><div class="t" style="left:326.50px;top:240.10px;width:80px;line-height:16px;height:16px;font-size:10.5px;color:#c6c6c6;font-weight:bold;text-align:right;transform:scaleX(0.88);transform-origin:right center;font-style:italic;">SPREAD</div><div class="t" style="left:326.50px;top:356.10px;width:80px;line-height:16px;height:16px;font-size:10.5px;color:#c6c6c6;font-weight:bold;text-align:right;transform:scaleX(0.88);transform-origin:right center;font-style:italic;">EQ</div><div class="t" style="left:308.30px;top:443.00px;width:40px;line-height:16px;height:16px;font-size:10.5px;color:#dcdcdc;font-weight:bold;text-align:left;transform:scaleX(0.88);transform-origin:left center;">DSRT</div><div class="t" style="left:308.30px;top:459.00px;width:40px;line-height:16px;height:16px;font-size:10.5px;color:#dcdcdc;font-weight:bold;text-align:left;transform:scaleX(0.88);transform-origin:left center;">BIT</div><div class="t" style="left:308.30px;top:475.00px;width:40px;line-height:16px;height:16px;font-size:10.5px;color:#8fbaff;font-weight:bold;text-align:left;transform:scaleX(0.88);transform-origin:left center;">DECI</div><div class="t" style="left:381.50px;top:459.00px;width:40px;line-height:16px;height:16px;font-size:10.5px;color:#dcdcdc;font-weight:bold;text-align:left;transform:scaleX(0.98);transform-origin:left center;">AMNT</div><div class="t" style="left:289.00px;top:504.30px;width:30px;line-height:16px;height:16px;font-size:10.5px;color:#111;font-weight:bold;text-align:center;transform:scaleX(0.88);transform-origin:center center;">Pk</div><div class="t" style="left:293.00px;top:527.30px;width:40px;line-height:16px;height:16px;font-size:10.5px;color:#dcdcdc;font-weight:bold;text-align:left;transform:scaleX(0.88);transform-origin:left center;">TYPE</div><div class="t" style="left:344.00px;top:527.30px;width:40px;line-height:16px;height:16px;font-size:10.5px;color:#dcdcdc;font-weight:bold;text-align:center;transform:scaleX(0.88);transform-origin:center center;">CUT</div><div class="t" style="left:378.00px;top:527.30px;width:40px;line-height:16px;height:16px;font-size:10.5px;color:#dcdcdc;font-weight:bold;text-align:center;transform:scaleX(0.88);transform-origin:center center;">RES</div><div class="t" style="left:308.30px;top:548.60px;width:50px;line-height:16px;height:16px;font-size:10.5px;color:#dcdcdc;font-weight:bold;text-align:left;transform:scaleX(0.88);transform-origin:left center;">FAST</div><div class="t" style="left:308.30px;top:564.20px;width:50px;line-height:16px;height:16px;font-size:10.5px;color:#dcdcdc;font-weight:bold;text-align:left;transform:scaleX(0.88);transform-origin:left center;">PUNCH</div><div class="t" style="left:381.00px;top:556.50px;width:40px;line-height:16px;height:16px;font-size:10.5px;color:#dcdcdc;font-weight:bold;text-align:left;transform:scaleX(0.93);transform-origin:left center;">COMP</div><div class="t" style="left:286.00px;top:592.30px;width:130px;line-height:16px;height:16px;font-size:11.5px;color:#515151;font-weight:bold;text-align:center;">CLAP</div><div class="t" style="left:283.80px;top:647.30px;width:40px;line-height:16px;height:16px;font-size:10.5px;color:#1c1c1c;font-weight:bold;text-align:center;transform:scaleX(0.88);transform-origin:center center;">PAN</div><div class="t" style="left:355.00px;top:625.00px;width:20px;line-height:16px;height:16px;font-size:11px;color:#111;font-weight:bold;text-align:center;transform:scaleX(0.88);transform-origin:center center;">M</div><div class="t" style="left:384.90px;top:625.00px;width:20px;line-height:16px;height:16px;font-size:11px;color:#111;font-weight:bold;text-align:center;transform:scaleX(0.88);transform-origin:center center;">S</div><div class="t" style="left:333.40px;top:666.00px;width:20px;line-height:16px;height:16px;font-size:10.5px;color:#9c9c9c;font-weight:bold;text-align:center;">S</div><div class="t" style="left:333.40px;top:685.50px;width:20px;line-height:16px;height:16px;font-size:10.5px;color:#9c9c9c;font-weight:bold;text-align:center;">E</div><div class="t" style="left:333.40px;top:704.50px;width:20px;line-height:16px;height:16px;font-size:10.5px;color:#9c9c9c;font-weight:bold;text-align:center;">N</div><div class="t" style="left:333.40px;top:723.00px;width:20px;line-height:16px;height:16px;font-size:10.5px;color:#9c9c9c;font-weight:bold;text-align:center;">D</div><div class="t" style="left:333.40px;top:742.00px;width:20px;line-height:16px;height:16px;font-size:10.5px;color:#9c9c9c;font-weight:bold;text-align:center;">S</div><div class="t" style="left:383.00px;top:658.70px;width:40px;line-height:16px;height:16px;font-size:10.5px;color:#1c1c1c;font-weight:bold;text-align:left;transform:scaleX(0.85);transform-origin:left center;">REV A</div><div class="t" style="left:383.00px;top:688.70px;width:40px;line-height:16px;height:16px;font-size:10.5px;color:#1c1c1c;font-weight:bold;text-align:left;transform:scaleX(0.85);transform-origin:left center;">REV B</div><div class="t" style="left:383.00px;top:718.70px;width:40px;line-height:16px;height:16px;font-size:10.5px;color:#1c1c1c;font-weight:bold;text-align:left;transform:scaleX(0.85);transform-origin:left center;">DLY A</div><div class="t" style="left:383.00px;top:747.70px;width:40px;line-height:16px;height:16px;font-size:10.5px;color:#1c1c1c;font-weight:bold;text-align:left;transform:scaleX(0.85);transform-origin:left center;">DLY B</div><div class="t" style="left:426.00px;top:74.20px;width:130px;line-height:16px;height:16px;font-size:11.5px;color:#515151;font-weight:bold;text-align:center;">HATS</div><div class="t" style="left:427.50px;top:107.50px;width:50px;line-height:16px;height:16px;font-size:14px;color:#8cbaff;font-weight:bold;text-align:center;letter-spacing:-0.6px;">F#1</div><div class="t" style="left:489.40px;top:107.50px;width:50px;line-height:16px;height:16px;font-size:14px;color:#8cbaff;font-weight:bold;text-align:center;letter-spacing:-0.6px;">A#1</div><div class="t" style="left:429.70px;top:128.00px;width:60px;line-height:16px;height:16px;font-size:10.5px;color:#222;font-weight:bold;text-align:center;transform:scaleX(0.88);transform-origin:center center;">CLOSED</div><div class="t" style="left:491.70px;top:128.00px;width:60px;line-height:16px;height:16px;font-size:10.5px;color:#222;font-weight:bold;text-align:center;transform:scaleX(0.88);transform-origin:center center;">OPEN</div><div class="t" style="left:426.90px;top:154.30px;width:40px;line-height:16px;height:16px;font-size:10.5px;color:#8cbaff;font-weight:bold;text-align:center;letter-spacing:-0.3px;">1/16</div><div class="t" style="left:482.75px;top:154.00px;width:40px;line-height:16px;height:16px;font-size:10.5px;color:#111;font-weight:bold;text-align:center;transform:scaleX(0.83);transform-origin:center center;">REP</div><div class="t" style="left:518.70px;top:154.00px;width:40px;line-height:16px;height:16px;font-size:10.5px;color:#111;font-weight:bold;text-align:center;transform:scaleX(0.83);transform-origin:center center;">FULL</div><div class="t" style="left:435.50px;top:175.80px;width:40px;line-height:16px;height:16px;font-size:10.5px;color:#1c1c1c;font-weight:bold;text-align:left;transform:scaleX(0.85);transform-origin:left center;">RATE</div><div class="t" style="left:442.10px;top:202.60px;width:80px;line-height:16px;height:16px;font-size:12.5px;color:#ececec;font-weight:bold;text-align:left;letter-spacing:-0.2px;">NoisenTone</div><div class="t" style="left:419.00px;top:280.00px;width:60px;line-height:16px;height:16px;font-size:10.5px;color:#cccccc;font-weight:bold;text-align:center;transform:scaleX(0.9);transform-origin:center center;">COLOR</div><div class="t" style="left:462.00px;top:280.00px;width:60px;line-height:16px;height:16px;font-size:10.5px;color:#cccccc;font-weight:bold;text-align:center;transform:scaleX(0.9);transform-origin:center center;">MIX</div><div class="t" style="left:503.00px;top:280.00px;width:60px;line-height:16px;height:16px;font-size:10.5px;color:#cccccc;font-weight:bold;text-align:center;transform:scaleX(0.9);transform-origin:center center;">PITCH</div><div class="t" style="left:419.00px;top:338.00px;width:60px;line-height:16px;height:16px;font-size:10.5px;color:#cccccc;font-weight:bold;text-align:center;transform:scaleX(0.9);transform-origin:center center;">CH.DEC</div><div class="t" style="left:462.00px;top:338.00px;width:60px;line-height:16px;height:16px;font-size:10.5px;color:#cccccc;font-weight:bold;text-align:center;transform:scaleX(0.9);transform-origin:center center;">OH.DEC</div><div class="t" style="left:503.00px;top:338.00px;width:60px;line-height:16px;height:16px;font-size:10.5px;color:#cccccc;font-weight:bold;text-align:center;transform:scaleX(0.9);transform-origin:center center;">CURVE</div><div class="t" style="left:419.00px;top:396.00px;width:60px;line-height:16px;height:16px;font-size:10.5px;color:#cccccc;font-weight:bold;text-align:center;transform:scaleX(0.9);transform-origin:center center;">HPF</div><div class="t" style="left:462.00px;top:396.00px;width:60px;line-height:16px;height:16px;font-size:10.5px;color:#cccccc;font-weight:bold;text-align:center;transform:scaleX(0.9);transform-origin:center center;">FREQ</div><div class="t" style="left:503.00px;top:396.00px;width:60px;line-height:16px;height:16px;font-size:10.5px;color:#cccccc;font-weight:bold;text-align:center;transform:scaleX(0.9);transform-origin:center center;">MIX</div><div class="t" style="left:432.00px;top:413.60px;width:120px;line-height:16px;height:16px;font-size:10px;color:#ff8585;font-weight:bold;text-align:center;transform:scaleX(0.97);transform-origin:center center;">NOISE OSC</div><div class="t" style="left:466.50px;top:356.10px;width:80px;line-height:16px;height:16px;font-size:10.5px;color:#c6c6c6;font-weight:bold;text-align:right;transform:scaleX(0.88);transform-origin:right center;font-style:italic;">TIMBRE</div><div class="t" style="left:435.00px;top:240.10px;width:80px;line-height:16px;height:16px;font-size:10.5px;color:#c6c6c6;font-weight:bold;text-align:left;transform:scaleX(0.88);transform-origin:left center;font-style:italic;">NOISE</div><div class="t" style="left:464.50px;top:240.10px;width:80px;line-height:16px;height:16px;font-size:10.5px;color:#c6c6c6;font-weight:bold;text-align:right;transform:scaleX(0.88);transform-origin:right center;font-style:italic;">OSC</div><div class="t" style="left:448.30px;top:443.00px;width:40px;line-height:16px;height:16px;font-size:10.5px;color:#8fbaff;font-weight:bold;text-align:left;transform:scaleX(0.88);transform-origin:left center;">DSRT</div><div class="t" style="left:448.30px;top:459.00px;width:40px;line-height:16px;height:16px;font-size:10.5px;color:#dcdcdc;font-weight:bold;text-align:left;transform:scaleX(0.88);transform-origin:left center;">BIT</div><div class="t" style="left:448.30px;top:475.00px;width:40px;line-height:16px;height:16px;font-size:10.5px;color:#dcdcdc;font-weight:bold;text-align:left;transform:scaleX(0.88);transform-origin:left center;">DECI</div><div class="t" style="left:521.50px;top:459.00px;width:40px;line-height:16px;height:16px;font-size:10.5px;color:#dcdcdc;font-weight:bold;text-align:left;transform:scaleX(0.98);transform-origin:left center;">AMNT</div><div class="t" style="left:429.00px;top:504.30px;width:30px;line-height:16px;height:16px;font-size:10.5px;color:#111;font-weight:bold;text-align:center;transform:scaleX(0.88);transform-origin:center center;">HP</div><div class="t" style="left:433.00px;top:527.30px;width:40px;line-height:16px;height:16px;font-size:10.5px;color:#dcdcdc;font-weight:bold;text-align:left;transform:scaleX(0.88);transform-origin:left center;">TYPE</div><div class="t" style="left:484.00px;top:527.30px;width:40px;line-height:16px;height:16px;font-size:10.5px;color:#dcdcdc;font-weight:bold;text-align:center;transform:scaleX(0.88);transform-origin:center center;">CUT</div><div class="t" style="left:518.00px;top:527.30px;width:40px;line-height:16px;height:16px;font-size:10.5px;color:#dcdcdc;font-weight:bold;text-align:center;transform:scaleX(0.88);transform-origin:center center;">RES</div><div class="t" style="left:448.30px;top:548.60px;width:50px;line-height:16px;height:16px;font-size:10.5px;color:#dcdcdc;font-weight:bold;text-align:left;transform:scaleX(0.88);transform-origin:left center;">FAST</div><div class="t" style="left:448.30px;top:564.20px;width:50px;line-height:16px;height:16px;font-size:10.5px;color:#dcdcdc;font-weight:bold;text-align:left;transform:scaleX(0.88);transform-origin:left center;">PUNCH</div><div class="t" style="left:521.00px;top:556.50px;width:40px;line-height:16px;height:16px;font-size:10.5px;color:#dcdcdc;font-weight:bold;text-align:left;transform:scaleX(0.93);transform-origin:left center;">COMP</div><div class="t" style="left:426.00px;top:592.30px;width:130px;line-height:16px;height:16px;font-size:11.5px;color:#515151;font-weight:bold;text-align:center;">HATS</div><div class="t" style="left:423.80px;top:647.30px;width:40px;line-height:16px;height:16px;font-size:10.5px;color:#1c1c1c;font-weight:bold;text-align:center;transform:scaleX(0.88);transform-origin:center center;">PAN</div><div class="t" style="left:495.00px;top:625.00px;width:20px;line-height:16px;height:16px;font-size:11px;color:#111;font-weight:bold;text-align:center;transform:scaleX(0.88);transform-origin:center center;">M</div><div class="t" style="left:524.90px;top:625.00px;width:20px;line-height:16px;height:16px;font-size:11px;color:#111;font-weight:bold;text-align:center;transform:scaleX(0.88);transform-origin:center center;">S</div><div class="t" style="left:473.40px;top:666.00px;width:20px;line-height:16px;height:16px;font-size:10.5px;color:#9c9c9c;font-weight:bold;text-align:center;">S</div><div class="t" style="left:473.40px;top:685.50px;width:20px;line-height:16px;height:16px;font-size:10.5px;color:#9c9c9c;font-weight:bold;text-align:center;">E</div><div class="t" style="left:473.40px;top:704.50px;width:20px;line-height:16px;height:16px;font-size:10.5px;color:#9c9c9c;font-weight:bold;text-align:center;">N</div><div class="t" style="left:473.40px;top:723.00px;width:20px;line-height:16px;height:16px;font-size:10.5px;color:#9c9c9c;font-weight:bold;text-align:center;">D</div><div class="t" style="left:473.40px;top:742.00px;width:20px;line-height:16px;height:16px;font-size:10.5px;color:#9c9c9c;font-weight:bold;text-align:center;">S</div><div class="t" style="left:523.00px;top:658.70px;width:40px;line-height:16px;height:16px;font-size:10.5px;color:#1c1c1c;font-weight:bold;text-align:left;transform:scaleX(0.85);transform-origin:left center;">REV A</div><div class="t" style="left:523.00px;top:688.70px;width:40px;line-height:16px;height:16px;font-size:10.5px;color:#1c1c1c;font-weight:bold;text-align:left;transform:scaleX(0.85);transform-origin:left center;">REV B</div><div class="t" style="left:523.00px;top:718.70px;width:40px;line-height:16px;height:16px;font-size:10.5px;color:#1c1c1c;font-weight:bold;text-align:left;transform:scaleX(0.85);transform-origin:left center;">DLY A</div><div class="t" style="left:523.00px;top:747.70px;width:40px;line-height:16px;height:16px;font-size:10.5px;color:#1c1c1c;font-weight:bold;text-align:left;transform:scaleX(0.85);transform-origin:left center;">DLY B</div><div class="t" style="left:566.00px;top:74.20px;width:130px;line-height:16px;height:16px;font-size:11.5px;color:#515151;font-weight:bold;text-align:center;">TOMS</div><div class="t" style="left:567.50px;top:107.50px;width:50px;line-height:16px;height:16px;font-size:14px;color:#8cbaff;font-weight:bold;text-align:center;letter-spacing:-0.6px;">B1</div><div class="t" style="left:629.40px;top:107.50px;width:50px;line-height:16px;height:16px;font-size:14px;color:#8cbaff;font-weight:bold;text-align:center;letter-spacing:-0.6px;">D2</div><div class="t" style="left:571.00px;top:128.00px;width:120px;line-height:16px;height:16px;font-size:10.5px;color:#222;font-weight:bold;text-align:center;transform:scaleX(0.9);transform-origin:center center;">NOTE RANGE</div><div class="t" style="left:566.90px;top:154.30px;width:40px;line-height:16px;height:16px;font-size:10.5px;color:#8cbaff;font-weight:bold;text-align:center;letter-spacing:-0.3px;">1/16</div><div class="t" style="left:622.75px;top:154.00px;width:40px;line-height:16px;height:16px;font-size:10.5px;color:#111;font-weight:bold;text-align:center;transform:scaleX(0.83);transform-origin:center center;">REP</div><div class="t" style="left:658.70px;top:154.00px;width:40px;line-height:16px;height:16px;font-size:10.5px;color:#111;font-weight:bold;text-align:center;transform:scaleX(0.83);transform-origin:center center;">FULL</div><div class="t" style="left:575.50px;top:175.80px;width:40px;line-height:16px;height:16px;font-size:10.5px;color:#1c1c1c;font-weight:bold;text-align:left;transform:scaleX(0.85);transform-origin:left center;">RATE</div><div class="t" style="left:582.10px;top:202.60px;width:80px;line-height:16px;height:16px;font-size:12.5px;color:#ececec;font-weight:bold;text-align:left;letter-spacing:-0.2px;">Hexagons</div><div class="t" style="left:559.00px;top:280.00px;width:60px;line-height:16px;height:16px;font-size:10.5px;color:#cccccc;font-weight:bold;text-align:center;transform:scaleX(0.9);transform-origin:center center;">TUNE</div><div class="t" style="left:602.00px;top:280.00px;width:60px;line-height:16px;height:16px;font-size:10.5px;color:#cccccc;font-weight:bold;text-align:center;transform:scaleX(0.9);transform-origin:center center;">DECAY1</div><div class="t" style="left:643.00px;top:280.00px;width:60px;line-height:16px;height:16px;font-size:10.5px;color:#cccccc;font-weight:bold;text-align:center;transform:scaleX(0.9);transform-origin:center center;">DECAY2</div><div class="t" style="left:559.00px;top:338.00px;width:60px;line-height:16px;height:16px;font-size:10.5px;color:#cccccc;font-weight:bold;text-align:center;transform:scaleX(0.9);transform-origin:center center;">TUNE2</div><div class="t" style="left:602.00px;top:338.00px;width:60px;line-height:16px;height:16px;font-size:10.5px;color:#cccccc;font-weight:bold;text-align:center;transform:scaleX(0.9);transform-origin:center center;">LEVEL2</div><div class="t" style="left:643.00px;top:338.00px;width:60px;line-height:16px;height:16px;font-size:10.5px;color:#cccccc;font-weight:bold;text-align:center;transform:scaleX(0.9);transform-origin:center center;">FDBK2</div><div class="t" style="left:559.00px;top:396.00px;width:60px;line-height:16px;height:16px;font-size:10.5px;color:#cccccc;font-weight:bold;text-align:center;transform:scaleX(0.9);transform-origin:center center;">AMNT</div><div class="t" style="left:602.00px;top:396.00px;width:60px;line-height:16px;height:16px;font-size:10.5px;color:#cccccc;font-weight:bold;text-align:center;transform:scaleX(0.9);transform-origin:center center;">DECAY</div><div class="t" style="left:643.00px;top:396.00px;width:60px;line-height:16px;height:16px;font-size:10.5px;color:#cccccc;font-weight:bold;text-align:center;transform:scaleX(0.9);transform-origin:center center;">CURVE</div><div class="t" style="left:572.00px;top:413.60px;width:120px;line-height:16px;height:16px;font-size:10px;color:#fff47a;font-weight:bold;text-align:center;transform:scaleX(0.97);transform-origin:center center;">FM SYNTH</div><div class="t" style="left:606.50px;top:356.10px;width:80px;line-height:16px;height:16px;font-size:10.5px;color:#c6c6c6;font-weight:bold;text-align:right;transform:scaleX(0.88);transform-origin:right center;font-style:italic;">PITCH</div><div class="t" style="left:576.30px;top:231.40px;width:40px;line-height:16px;height:16px;font-size:10.5px;color:#cccccc;font-weight:bold;text-align:right;transform:scaleX(0.88);transform-origin:right center;">OP1</div><div class="t" style="left:647.00px;top:231.40px;width:40px;line-height:16px;height:16px;font-size:10.5px;color:#cccccc;font-weight:bold;text-align:left;transform:scaleX(0.88);transform-origin:left center;">OP2</div><div class="t" style="left:588.30px;top:443.00px;width:40px;line-height:16px;height:16px;font-size:10.5px;color:#dcdcdc;font-weight:bold;text-align:left;transform:scaleX(0.88);transform-origin:left center;">DSRT</div><div class="t" style="left:588.30px;top:459.00px;width:40px;line-height:16px;height:16px;font-size:10.5px;color:#8fbaff;font-weight:bold;text-align:left;transform:scaleX(0.88);transform-origin:left center;">BIT</div><div class="t" style="left:588.30px;top:475.00px;width:40px;line-height:16px;height:16px;font-size:10.5px;color:#dcdcdc;font-weight:bold;text-align:left;transform:scaleX(0.88);transform-origin:left center;">DECI</div><div class="t" style="left:661.50px;top:459.00px;width:40px;line-height:16px;height:16px;font-size:10.5px;color:#dcdcdc;font-weight:bold;text-align:left;transform:scaleX(0.98);transform-origin:left center;">AMNT</div><div class="t" style="left:569.00px;top:504.30px;width:30px;line-height:16px;height:16px;font-size:10.5px;color:#111;font-weight:bold;text-align:center;transform:scaleX(0.88);transform-origin:center center;">--</div><div class="t" style="left:573.00px;top:527.30px;width:40px;line-height:16px;height:16px;font-size:10.5px;color:#dcdcdc;font-weight:bold;text-align:left;transform:scaleX(0.88);transform-origin:left center;">TYPE</div><div class="t" style="left:624.00px;top:527.30px;width:40px;line-height:16px;height:16px;font-size:10.5px;color:#dcdcdc;font-weight:bold;text-align:center;transform:scaleX(0.88);transform-origin:center center;">CUT</div><div class="t" style="left:658.00px;top:527.30px;width:40px;line-height:16px;height:16px;font-size:10.5px;color:#dcdcdc;font-weight:bold;text-align:center;transform:scaleX(0.88);transform-origin:center center;">RES</div><div class="t" style="left:588.30px;top:548.60px;width:50px;line-height:16px;height:16px;font-size:10.5px;color:#dcdcdc;font-weight:bold;text-align:left;transform:scaleX(0.88);transform-origin:left center;">FAST</div><div class="t" style="left:588.30px;top:564.20px;width:50px;line-height:16px;height:16px;font-size:10.5px;color:#dcdcdc;font-weight:bold;text-align:left;transform:scaleX(0.88);transform-origin:left center;">PUNCH</div><div class="t" style="left:661.00px;top:556.50px;width:40px;line-height:16px;height:16px;font-size:10.5px;color:#dcdcdc;font-weight:bold;text-align:left;transform:scaleX(0.93);transform-origin:left center;">COMP</div><div class="t" style="left:566.00px;top:592.30px;width:130px;line-height:16px;height:16px;font-size:11.5px;color:#515151;font-weight:bold;text-align:center;">TOMS</div><div class="t" style="left:563.80px;top:647.30px;width:40px;line-height:16px;height:16px;font-size:10.5px;color:#1c1c1c;font-weight:bold;text-align:center;transform:scaleX(0.88);transform-origin:center center;">PAN</div><div class="t" style="left:635.00px;top:625.00px;width:20px;line-height:16px;height:16px;font-size:11px;color:#111;font-weight:bold;text-align:center;transform:scaleX(0.88);transform-origin:center center;">M</div><div class="t" style="left:664.90px;top:625.00px;width:20px;line-height:16px;height:16px;font-size:11px;color:#111;font-weight:bold;text-align:center;transform:scaleX(0.88);transform-origin:center center;">S</div><div class="t" style="left:613.40px;top:666.00px;width:20px;line-height:16px;height:16px;font-size:10.5px;color:#9c9c9c;font-weight:bold;text-align:center;">S</div><div class="t" style="left:613.40px;top:685.50px;width:20px;line-height:16px;height:16px;font-size:10.5px;color:#9c9c9c;font-weight:bold;text-align:center;">E</div><div class="t" style="left:613.40px;top:704.50px;width:20px;line-height:16px;height:16px;font-size:10.5px;color:#9c9c9c;font-weight:bold;text-align:center;">N</div><div class="t" style="left:613.40px;top:723.00px;width:20px;line-height:16px;height:16px;font-size:10.5px;color:#9c9c9c;font-weight:bold;text-align:center;">D</div><div class="t" style="left:613.40px;top:742.00px;width:20px;line-height:16px;height:16px;font-size:10.5px;color:#9c9c9c;font-weight:bold;text-align:center;">S</div><div class="t" style="left:663.00px;top:658.70px;width:40px;line-height:16px;height:16px;font-size:10.5px;color:#1c1c1c;font-weight:bold;text-align:left;transform:scaleX(0.85);transform-origin:left center;">REV A</div><div class="t" style="left:663.00px;top:688.70px;width:40px;line-height:16px;height:16px;font-size:10.5px;color:#1c1c1c;font-weight:bold;text-align:left;transform:scaleX(0.85);transform-origin:left center;">REV B</div><div class="t" style="left:663.00px;top:718.70px;width:40px;line-height:16px;height:16px;font-size:10.5px;color:#1c1c1c;font-weight:bold;text-align:left;transform:scaleX(0.85);transform-origin:left center;">DLY A</div><div class="t" style="left:663.00px;top:747.70px;width:40px;line-height:16px;height:16px;font-size:10.5px;color:#1c1c1c;font-weight:bold;text-align:left;transform:scaleX(0.85);transform-origin:left center;">DLY B</div><div class="t" style="left:706.00px;top:74.20px;width:130px;line-height:16px;height:16px;font-size:11.5px;color:#515151;font-weight:bold;text-align:center;">PERCUSSION</div><div class="t" style="left:707.50px;top:107.50px;width:50px;line-height:16px;height:16px;font-size:14px;color:#8cbaff;font-weight:bold;text-align:center;letter-spacing:-0.6px;">C3</div><div class="t" style="left:769.40px;top:107.50px;width:50px;line-height:16px;height:16px;font-size:14px;color:#8cbaff;font-weight:bold;text-align:center;letter-spacing:-0.6px;">B3</div><div class="t" style="left:711.00px;top:128.00px;width:120px;line-height:16px;height:16px;font-size:10.5px;color:#222;font-weight:bold;text-align:center;transform:scaleX(0.9);transform-origin:center center;">NOTE RANGE</div><div class="t" style="left:706.90px;top:154.30px;width:40px;line-height:16px;height:16px;font-size:10.5px;color:#8cbaff;font-weight:bold;text-align:center;letter-spacing:-0.3px;">1/16</div><div class="t" style="left:762.75px;top:154.00px;width:40px;line-height:16px;height:16px;font-size:10.5px;color:#111;font-weight:bold;text-align:center;transform:scaleX(0.83);transform-origin:center center;">REP</div><div class="t" style="left:798.70px;top:154.00px;width:40px;line-height:16px;height:16px;font-size:10.5px;color:#111;font-weight:bold;text-align:center;transform:scaleX(0.83);transform-origin:center center;">FULL</div><div class="t" style="left:715.50px;top:175.80px;width:40px;line-height:16px;height:16px;font-size:10.5px;color:#1c1c1c;font-weight:bold;text-align:left;transform:scaleX(0.85);transform-origin:left center;">RATE</div><div class="t" style="left:722.10px;top:202.60px;width:80px;line-height:16px;height:16px;font-size:12.5px;color:#ececec;font-weight:bold;text-align:left;letter-spacing:-0.2px;">Resonant</div><div class="t" style="left:699.00px;top:280.00px;width:60px;line-height:16px;height:16px;font-size:10.5px;color:#cccccc;font-weight:bold;text-align:center;transform:scaleX(0.9);transform-origin:center center;">TUNE</div><div class="t" style="left:742.00px;top:280.00px;width:60px;line-height:16px;height:16px;font-size:10.5px;color:#cccccc;font-weight:bold;text-align:center;transform:scaleX(0.9);transform-origin:center center;">DECAY1</div><div class="t" style="left:783.00px;top:280.00px;width:60px;line-height:16px;height:16px;font-size:10.5px;color:#cccccc;font-weight:bold;text-align:center;transform:scaleX(0.9);transform-origin:center center;">DECAY2</div><div class="t" style="left:699.00px;top:338.00px;width:60px;line-height:16px;height:16px;font-size:10.5px;color:#cccccc;font-weight:bold;text-align:center;transform:scaleX(0.9);transform-origin:center center;">TUNE2</div><div class="t" style="left:742.00px;top:338.00px;width:60px;line-height:16px;height:16px;font-size:10.5px;color:#cccccc;font-weight:bold;text-align:center;transform:scaleX(0.9);transform-origin:center center;">LEVEL2</div><div class="t" style="left:783.00px;top:338.00px;width:60px;line-height:16px;height:16px;font-size:10.5px;color:#cccccc;font-weight:bold;text-align:center;transform:scaleX(0.9);transform-origin:center center;">FDBK2</div><div class="t" style="left:699.00px;top:396.00px;width:60px;line-height:16px;height:16px;font-size:10.5px;color:#cccccc;font-weight:bold;text-align:center;transform:scaleX(0.9);transform-origin:center center;">AMNT</div><div class="t" style="left:742.00px;top:396.00px;width:60px;line-height:16px;height:16px;font-size:10.5px;color:#cccccc;font-weight:bold;text-align:center;transform:scaleX(0.9);transform-origin:center center;">DECAY</div><div class="t" style="left:783.00px;top:396.00px;width:60px;line-height:16px;height:16px;font-size:10.5px;color:#cccccc;font-weight:bold;text-align:center;transform:scaleX(0.9);transform-origin:center center;">CURVE</div><div class="t" style="left:712.00px;top:413.60px;width:120px;line-height:16px;height:16px;font-size:10px;color:#fff47a;font-weight:bold;text-align:center;transform:scaleX(0.97);transform-origin:center center;">FM SYNTH</div><div class="t" style="left:746.50px;top:356.10px;width:80px;line-height:16px;height:16px;font-size:10.5px;color:#c6c6c6;font-weight:bold;text-align:right;transform:scaleX(0.88);transform-origin:right center;font-style:italic;">PITCH</div><div class="t" style="left:716.30px;top:231.40px;width:40px;line-height:16px;height:16px;font-size:10.5px;color:#cccccc;font-weight:bold;text-align:right;transform:scaleX(0.88);transform-origin:right center;">OP1</div><div class="t" style="left:787.00px;top:231.40px;width:40px;line-height:16px;height:16px;font-size:10.5px;color:#cccccc;font-weight:bold;text-align:left;transform:scaleX(0.88);transform-origin:left center;">OP2</div><div class="t" style="left:728.30px;top:443.00px;width:40px;line-height:16px;height:16px;font-size:10.5px;color:#dcdcdc;font-weight:bold;text-align:left;transform:scaleX(0.88);transform-origin:left center;">DSRT</div><div class="t" style="left:728.30px;top:459.00px;width:40px;line-height:16px;height:16px;font-size:10.5px;color:#dcdcdc;font-weight:bold;text-align:left;transform:scaleX(0.88);transform-origin:left center;">BIT</div><div class="t" style="left:728.30px;top:475.00px;width:40px;line-height:16px;height:16px;font-size:10.5px;color:#8fbaff;font-weight:bold;text-align:left;transform:scaleX(0.88);transform-origin:left center;">DECI</div><div class="t" style="left:801.50px;top:459.00px;width:40px;line-height:16px;height:16px;font-size:10.5px;color:#dcdcdc;font-weight:bold;text-align:left;transform:scaleX(0.98);transform-origin:left center;">AMNT</div><div class="t" style="left:709.00px;top:504.30px;width:30px;line-height:16px;height:16px;font-size:10.5px;color:#111;font-weight:bold;text-align:center;transform:scaleX(0.88);transform-origin:center center;">--</div><div class="t" style="left:713.00px;top:527.30px;width:40px;line-height:16px;height:16px;font-size:10.5px;color:#dcdcdc;font-weight:bold;text-align:left;transform:scaleX(0.88);transform-origin:left center;">TYPE</div><div class="t" style="left:764.00px;top:527.30px;width:40px;line-height:16px;height:16px;font-size:10.5px;color:#dcdcdc;font-weight:bold;text-align:center;transform:scaleX(0.88);transform-origin:center center;">CUT</div><div class="t" style="left:798.00px;top:527.30px;width:40px;line-height:16px;height:16px;font-size:10.5px;color:#dcdcdc;font-weight:bold;text-align:center;transform:scaleX(0.88);transform-origin:center center;">RES</div><div class="t" style="left:728.30px;top:548.60px;width:50px;line-height:16px;height:16px;font-size:10.5px;color:#dcdcdc;font-weight:bold;text-align:left;transform:scaleX(0.88);transform-origin:left center;">FAST</div><div class="t" style="left:728.30px;top:564.20px;width:50px;line-height:16px;height:16px;font-size:10.5px;color:#dcdcdc;font-weight:bold;text-align:left;transform:scaleX(0.88);transform-origin:left center;">PUNCH</div><div class="t" style="left:801.00px;top:556.50px;width:40px;line-height:16px;height:16px;font-size:10.5px;color:#dcdcdc;font-weight:bold;text-align:left;transform:scaleX(0.93);transform-origin:left center;">COMP</div><div class="t" style="left:706.00px;top:592.30px;width:130px;line-height:16px;height:16px;font-size:11.5px;color:#515151;font-weight:bold;text-align:center;">PERCUSSION</div><div class="t" style="left:703.80px;top:647.30px;width:40px;line-height:16px;height:16px;font-size:10.5px;color:#1c1c1c;font-weight:bold;text-align:center;transform:scaleX(0.88);transform-origin:center center;">PAN</div><div class="t" style="left:775.00px;top:625.00px;width:20px;line-height:16px;height:16px;font-size:11px;color:#111;font-weight:bold;text-align:center;transform:scaleX(0.88);transform-origin:center center;">M</div><div class="t" style="left:804.90px;top:625.00px;width:20px;line-height:16px;height:16px;font-size:11px;color:#111;font-weight:bold;text-align:center;transform:scaleX(0.88);transform-origin:center center;">S</div><div class="t" style="left:753.40px;top:666.00px;width:20px;line-height:16px;height:16px;font-size:10.5px;color:#9c9c9c;font-weight:bold;text-align:center;">S</div><div class="t" style="left:753.40px;top:685.50px;width:20px;line-height:16px;height:16px;font-size:10.5px;color:#9c9c9c;font-weight:bold;text-align:center;">E</div><div class="t" style="left:753.40px;top:704.50px;width:20px;line-height:16px;height:16px;font-size:10.5px;color:#9c9c9c;font-weight:bold;text-align:center;">N</div><div class="t" style="left:753.40px;top:723.00px;width:20px;line-height:16px;height:16px;font-size:10.5px;color:#9c9c9c;font-weight:bold;text-align:center;">D</div><div class="t" style="left:753.40px;top:742.00px;width:20px;line-height:16px;height:16px;font-size:10.5px;color:#9c9c9c;font-weight:bold;text-align:center;">S</div><div class="t" style="left:803.00px;top:658.70px;width:40px;line-height:16px;height:16px;font-size:10.5px;color:#1c1c1c;font-weight:bold;text-align:left;transform:scaleX(0.85);transform-origin:left center;">REV A</div><div class="t" style="left:803.00px;top:688.70px;width:40px;line-height:16px;height:16px;font-size:10.5px;color:#1c1c1c;font-weight:bold;text-align:left;transform:scaleX(0.85);transform-origin:left center;">REV B</div><div class="t" style="left:803.00px;top:718.70px;width:40px;line-height:16px;height:16px;font-size:10.5px;color:#1c1c1c;font-weight:bold;text-align:left;transform:scaleX(0.85);transform-origin:left center;">DLY A</div><div class="t" style="left:803.00px;top:747.70px;width:40px;line-height:16px;height:16px;font-size:10.5px;color:#1c1c1c;font-weight:bold;text-align:left;transform:scaleX(0.85);transform-origin:left center;">DLY B</div><div class="t" style="left:846.00px;top:74.20px;width:130px;line-height:16px;height:16px;font-size:11.5px;color:#515151;font-weight:bold;text-align:center;">SAMPLER 1</div><div class="t" style="left:847.50px;top:107.50px;width:50px;line-height:16px;height:16px;font-size:14px;color:#8cbaff;font-weight:bold;text-align:center;letter-spacing:-0.6px;">D#2</div><div class="t" style="left:909.40px;top:107.50px;width:50px;line-height:16px;height:16px;font-size:14px;color:#8cbaff;font-weight:bold;text-align:center;letter-spacing:-0.6px;">B2</div><div class="t" style="left:851.00px;top:128.00px;width:120px;line-height:16px;height:16px;font-size:10.5px;color:#222;font-weight:bold;text-align:center;transform:scaleX(0.9);transform-origin:center center;">NOTE RANGE</div><div class="t" style="left:846.90px;top:154.30px;width:40px;line-height:16px;height:16px;font-size:10.5px;color:#8cbaff;font-weight:bold;text-align:center;letter-spacing:-0.3px;">1/16</div><div class="t" style="left:902.75px;top:154.00px;width:40px;line-height:16px;height:16px;font-size:10.5px;color:#111;font-weight:bold;text-align:center;transform:scaleX(0.83);transform-origin:center center;">REP</div><div class="t" style="left:938.70px;top:154.00px;width:40px;line-height:16px;height:16px;font-size:10.5px;color:#111;font-weight:bold;text-align:center;transform:scaleX(0.83);transform-origin:center center;">FULL</div><div class="t" style="left:855.50px;top:175.80px;width:40px;line-height:16px;height:16px;font-size:10.5px;color:#1c1c1c;font-weight:bold;text-align:left;transform:scaleX(0.85);transform-origin:left center;">RATE</div><div class="t" style="left:862.10px;top:202.60px;width:80px;line-height:16px;height:16px;font-size:12.5px;color:#ececec;font-weight:bold;text-align:left;letter-spacing:-0.2px;">ElectricLock</div><div class="t" style="left:835.80px;top:280.60px;width:70px;line-height:16px;height:16px;font-size:10px;color:#74f27c;font-weight:normal;text-align:center;transform:scaleX(0.89);transform-origin:center center;">LOOP</div><div class="t" style="left:882.00px;top:280.00px;width:60px;line-height:16px;height:16px;font-size:10.5px;color:#cccccc;font-weight:bold;text-align:center;transform:scaleX(0.9);transform-origin:center center;">PITCH</div><div class="t" style="left:923.00px;top:280.00px;width:60px;line-height:16px;height:16px;font-size:10.5px;color:#cccccc;font-weight:bold;text-align:center;transform:scaleX(0.9);transform-origin:center center;">FINE</div><div class="t" style="left:839.00px;top:338.00px;width:60px;line-height:16px;height:16px;font-size:10.5px;color:#cccccc;font-weight:bold;text-align:center;transform:scaleX(0.9);transform-origin:center center;">ATTACK</div><div class="t" style="left:882.00px;top:338.00px;width:60px;line-height:16px;height:16px;font-size:10.5px;color:#cccccc;font-weight:bold;text-align:center;transform:scaleX(0.9);transform-origin:center center;">HOLD</div><div class="t" style="left:923.00px;top:338.00px;width:60px;line-height:16px;height:16px;font-size:10.5px;color:#cccccc;font-weight:bold;text-align:center;transform:scaleX(0.9);transform-origin:center center;">DECAY</div><div class="t" style="left:839.00px;top:396.00px;width:60px;line-height:16px;height:16px;font-size:10.5px;color:#cccccc;font-weight:bold;text-align:center;transform:scaleX(0.9);transform-origin:center center;">AMNT</div><div class="t" style="left:882.00px;top:396.00px;width:60px;line-height:16px;height:16px;font-size:10.5px;color:#cccccc;font-weight:bold;text-align:center;transform:scaleX(0.9);transform-origin:center center;">DECAY</div><div class="t" style="left:923.00px;top:396.00px;width:60px;line-height:16px;height:16px;font-size:10.5px;color:#cccccc;font-weight:bold;text-align:center;transform:scaleX(0.9);transform-origin:center center;">CURVE</div><div class="t" style="left:852.00px;top:413.60px;width:120px;line-height:16px;height:16px;font-size:10px;color:#74f27c;font-weight:bold;text-align:center;transform:scaleX(0.97);transform-origin:center center;">SAMPLER</div><div class="t" style="left:886.50px;top:298.10px;width:80px;line-height:16px;height:16px;font-size:10.5px;color:#c6c6c6;font-weight:bold;text-align:right;transform:scaleX(0.88);transform-origin:right center;font-style:italic;">AMP</div><div class="t" style="left:886.50px;top:356.10px;width:80px;line-height:16px;height:16px;font-size:10.5px;color:#c6c6c6;font-weight:bold;text-align:right;transform:scaleX(0.88);transform-origin:right center;font-style:italic;">PITCH</div><div class="t" style="left:851.00px;top:231.50px;width:90px;line-height:16px;height:16px;font-size:11.5px;color:#74f27c;font-weight:bold;text-align:left;transform:scaleX(0.9);transform-origin:left center;">909MT_47</div><div class="t" style="left:868.30px;top:443.00px;width:40px;line-height:16px;height:16px;font-size:10.5px;color:#8fbaff;font-weight:bold;text-align:left;transform:scaleX(0.88);transform-origin:left center;">DSRT</div><div class="t" style="left:868.30px;top:459.00px;width:40px;line-height:16px;height:16px;font-size:10.5px;color:#dcdcdc;font-weight:bold;text-align:left;transform:scaleX(0.88);transform-origin:left center;">BIT</div><div class="t" style="left:868.30px;top:475.00px;width:40px;line-height:16px;height:16px;font-size:10.5px;color:#dcdcdc;font-weight:bold;text-align:left;transform:scaleX(0.88);transform-origin:left center;">DECI</div><div class="t" style="left:941.50px;top:459.00px;width:40px;line-height:16px;height:16px;font-size:10.5px;color:#dcdcdc;font-weight:bold;text-align:left;transform:scaleX(0.98);transform-origin:left center;">AMNT</div><div class="t" style="left:849.00px;top:504.30px;width:30px;line-height:16px;height:16px;font-size:10.5px;color:#111;font-weight:bold;text-align:center;transform:scaleX(0.88);transform-origin:center center;">No</div><div class="t" style="left:853.00px;top:527.30px;width:40px;line-height:16px;height:16px;font-size:10.5px;color:#dcdcdc;font-weight:bold;text-align:left;transform:scaleX(0.88);transform-origin:left center;">TYPE</div><div class="t" style="left:904.00px;top:527.30px;width:40px;line-height:16px;height:16px;font-size:10.5px;color:#dcdcdc;font-weight:bold;text-align:center;transform:scaleX(0.88);transform-origin:center center;">CUT</div><div class="t" style="left:938.00px;top:527.30px;width:40px;line-height:16px;height:16px;font-size:10.5px;color:#dcdcdc;font-weight:bold;text-align:center;transform:scaleX(0.88);transform-origin:center center;">RES</div><div class="t" style="left:868.30px;top:548.60px;width:50px;line-height:16px;height:16px;font-size:10.5px;color:#dcdcdc;font-weight:bold;text-align:left;transform:scaleX(0.88);transform-origin:left center;">FAST</div><div class="t" style="left:868.30px;top:564.20px;width:50px;line-height:16px;height:16px;font-size:10.5px;color:#dcdcdc;font-weight:bold;text-align:left;transform:scaleX(0.88);transform-origin:left center;">PUNCH</div><div class="t" style="left:941.00px;top:556.50px;width:40px;line-height:16px;height:16px;font-size:10.5px;color:#dcdcdc;font-weight:bold;text-align:left;transform:scaleX(0.93);transform-origin:left center;">COMP</div><div class="t" style="left:846.00px;top:592.30px;width:130px;line-height:16px;height:16px;font-size:11.5px;color:#515151;font-weight:bold;text-align:center;">SAMPLER 1</div><div class="t" style="left:843.80px;top:647.30px;width:40px;line-height:16px;height:16px;font-size:10.5px;color:#1c1c1c;font-weight:bold;text-align:center;transform:scaleX(0.88);transform-origin:center center;">PAN</div><div class="t" style="left:915.00px;top:625.00px;width:20px;line-height:16px;height:16px;font-size:11px;color:#111;font-weight:bold;text-align:center;transform:scaleX(0.88);transform-origin:center center;">M</div><div class="t" style="left:944.90px;top:625.00px;width:20px;line-height:16px;height:16px;font-size:11px;color:#111;font-weight:bold;text-align:center;transform:scaleX(0.88);transform-origin:center center;">S</div><div class="t" style="left:893.40px;top:666.00px;width:20px;line-height:16px;height:16px;font-size:10.5px;color:#9c9c9c;font-weight:bold;text-align:center;">S</div><div class="t" style="left:893.40px;top:685.50px;width:20px;line-height:16px;height:16px;font-size:10.5px;color:#9c9c9c;font-weight:bold;text-align:center;">E</div><div class="t" style="left:893.40px;top:704.50px;width:20px;line-height:16px;height:16px;font-size:10.5px;color:#9c9c9c;font-weight:bold;text-align:center;">N</div><div class="t" style="left:893.40px;top:723.00px;width:20px;line-height:16px;height:16px;font-size:10.5px;color:#9c9c9c;font-weight:bold;text-align:center;">D</div><div class="t" style="left:893.40px;top:742.00px;width:20px;line-height:16px;height:16px;font-size:10.5px;color:#9c9c9c;font-weight:bold;text-align:center;">S</div><div class="t" style="left:943.00px;top:658.70px;width:40px;line-height:16px;height:16px;font-size:10.5px;color:#1c1c1c;font-weight:bold;text-align:left;transform:scaleX(0.85);transform-origin:left center;">REV A</div><div class="t" style="left:943.00px;top:688.70px;width:40px;line-height:16px;height:16px;font-size:10.5px;color:#1c1c1c;font-weight:bold;text-align:left;transform:scaleX(0.85);transform-origin:left center;">REV B</div><div class="t" style="left:943.00px;top:718.70px;width:40px;line-height:16px;height:16px;font-size:10.5px;color:#1c1c1c;font-weight:bold;text-align:left;transform:scaleX(0.85);transform-origin:left center;">DLY A</div><div class="t" style="left:943.00px;top:747.70px;width:40px;line-height:16px;height:16px;font-size:10.5px;color:#1c1c1c;font-weight:bold;text-align:left;transform:scaleX(0.85);transform-origin:left center;">DLY B</div><div class="t" style="left:986.00px;top:74.20px;width:130px;line-height:16px;height:16px;font-size:11.5px;color:#515151;font-weight:bold;text-align:center;">SAMPLER 2</div><div class="t" style="left:987.50px;top:107.50px;width:50px;line-height:16px;height:16px;font-size:14px;color:#8cbaff;font-weight:bold;text-align:center;letter-spacing:-0.6px;">A#-1</div><div class="t" style="left:1049.40px;top:107.50px;width:50px;line-height:16px;height:16px;font-size:14px;color:#8cbaff;font-weight:bold;text-align:center;letter-spacing:-0.6px;">A#0</div><div class="t" style="left:991.00px;top:128.00px;width:120px;line-height:16px;height:16px;font-size:10.5px;color:#222;font-weight:bold;text-align:center;transform:scaleX(0.9);transform-origin:center center;">NOTE RANGE</div><div class="t" style="left:986.90px;top:154.30px;width:40px;line-height:16px;height:16px;font-size:10.5px;color:#8cbaff;font-weight:bold;text-align:center;letter-spacing:-0.3px;">1/16</div><div class="t" style="left:1042.75px;top:154.00px;width:40px;line-height:16px;height:16px;font-size:10.5px;color:#111;font-weight:bold;text-align:center;transform:scaleX(0.83);transform-origin:center center;">REP</div><div class="t" style="left:1078.70px;top:154.00px;width:40px;line-height:16px;height:16px;font-size:10.5px;color:#111;font-weight:bold;text-align:center;transform:scaleX(0.83);transform-origin:center center;">FULL</div><div class="t" style="left:995.50px;top:175.80px;width:40px;line-height:16px;height:16px;font-size:10.5px;color:#1c1c1c;font-weight:bold;text-align:left;transform:scaleX(0.85);transform-origin:left center;">RATE</div><div class="t" style="left:1002.10px;top:202.60px;width:80px;line-height:16px;height:16px;font-size:12.5px;color:#ececec;font-weight:bold;text-align:left;letter-spacing:-0.2px;">UniSawBass</div><div class="t" style="left:975.80px;top:280.60px;width:70px;line-height:16px;height:16px;font-size:10px;color:#74f27c;font-weight:normal;text-align:center;transform:scaleX(0.89);transform-origin:center center;">FORWARD</div><div class="t" style="left:1022.00px;top:280.00px;width:60px;line-height:16px;height:16px;font-size:10.5px;color:#cccccc;font-weight:bold;text-align:center;transform:scaleX(0.9);transform-origin:center center;">PITCH</div><div class="t" style="left:1063.00px;top:280.00px;width:60px;line-height:16px;height:16px;font-size:10.5px;color:#cccccc;font-weight:bold;text-align:center;transform:scaleX(0.9);transform-origin:center center;">FINE</div><div class="t" style="left:979.00px;top:338.00px;width:60px;line-height:16px;height:16px;font-size:10.5px;color:#cccccc;font-weight:bold;text-align:center;transform:scaleX(0.9);transform-origin:center center;">ATTACK</div><div class="t" style="left:1022.00px;top:338.00px;width:60px;line-height:16px;height:16px;font-size:10.5px;color:#cccccc;font-weight:bold;text-align:center;transform:scaleX(0.9);transform-origin:center center;">HOLD</div><div class="t" style="left:1063.00px;top:338.00px;width:60px;line-height:16px;height:16px;font-size:10.5px;color:#cccccc;font-weight:bold;text-align:center;transform:scaleX(0.9);transform-origin:center center;">DECAY</div><div class="t" style="left:979.00px;top:396.00px;width:60px;line-height:16px;height:16px;font-size:10.5px;color:#cccccc;font-weight:bold;text-align:center;transform:scaleX(0.9);transform-origin:center center;">AMNT</div><div class="t" style="left:1022.00px;top:396.00px;width:60px;line-height:16px;height:16px;font-size:10.5px;color:#cccccc;font-weight:bold;text-align:center;transform:scaleX(0.9);transform-origin:center center;">DECAY</div><div class="t" style="left:1063.00px;top:396.00px;width:60px;line-height:16px;height:16px;font-size:10.5px;color:#cccccc;font-weight:bold;text-align:center;transform:scaleX(0.9);transform-origin:center center;">CURVE</div><div class="t" style="left:992.00px;top:413.60px;width:120px;line-height:16px;height:16px;font-size:10px;color:#74f27c;font-weight:bold;text-align:center;transform:scaleX(0.97);transform-origin:center center;">SAMPLER</div><div class="t" style="left:1026.50px;top:298.10px;width:80px;line-height:16px;height:16px;font-size:10.5px;color:#c6c6c6;font-weight:bold;text-align:right;transform:scaleX(0.88);transform-origin:right center;font-style:italic;">AMP</div><div class="t" style="left:1026.50px;top:356.10px;width:80px;line-height:16px;height:16px;font-size:10.5px;color:#c6c6c6;font-weight:bold;text-align:right;transform:scaleX(0.88);transform-origin:right center;font-style:italic;">PITCH</div><div class="t" style="left:991.00px;top:231.50px;width:90px;line-height:16px;height:16px;font-size:11.5px;color:#74f27c;font-weight:bold;text-align:left;transform:scaleX(0.9);transform-origin:left center;">UniSawBass_G</div><div class="t" style="left:1008.30px;top:443.00px;width:40px;line-height:16px;height:16px;font-size:10.5px;color:#dcdcdc;font-weight:bold;text-align:left;transform:scaleX(0.88);transform-origin:left center;">DSRT</div><div class="t" style="left:1008.30px;top:459.00px;width:40px;line-height:16px;height:16px;font-size:10.5px;color:#8fbaff;font-weight:bold;text-align:left;transform:scaleX(0.88);transform-origin:left center;">BIT</div><div class="t" style="left:1008.30px;top:475.00px;width:40px;line-height:16px;height:16px;font-size:10.5px;color:#dcdcdc;font-weight:bold;text-align:left;transform:scaleX(0.88);transform-origin:left center;">DECI</div><div class="t" style="left:1081.50px;top:459.00px;width:40px;line-height:16px;height:16px;font-size:10.5px;color:#dcdcdc;font-weight:bold;text-align:left;transform:scaleX(0.98);transform-origin:left center;">AMNT</div><div class="t" style="left:989.00px;top:504.30px;width:30px;line-height:16px;height:16px;font-size:10.5px;color:#111;font-weight:bold;text-align:center;transform:scaleX(0.88);transform-origin:center center;">--</div><div class="t" style="left:993.00px;top:527.30px;width:40px;line-height:16px;height:16px;font-size:10.5px;color:#dcdcdc;font-weight:bold;text-align:left;transform:scaleX(0.88);transform-origin:left center;">TYPE</div><div class="t" style="left:1044.00px;top:527.30px;width:40px;line-height:16px;height:16px;font-size:10.5px;color:#dcdcdc;font-weight:bold;text-align:center;transform:scaleX(0.88);transform-origin:center center;">CUT</div><div class="t" style="left:1078.00px;top:527.30px;width:40px;line-height:16px;height:16px;font-size:10.5px;color:#dcdcdc;font-weight:bold;text-align:center;transform:scaleX(0.88);transform-origin:center center;">RES</div><div class="t" style="left:1008.30px;top:548.60px;width:50px;line-height:16px;height:16px;font-size:10.5px;color:#dcdcdc;font-weight:bold;text-align:left;transform:scaleX(0.88);transform-origin:left center;">FAST</div><div class="t" style="left:1008.30px;top:564.20px;width:50px;line-height:16px;height:16px;font-size:10.5px;color:#dcdcdc;font-weight:bold;text-align:left;transform:scaleX(0.88);transform-origin:left center;">PUNCH</div><div class="t" style="left:1081.00px;top:556.50px;width:40px;line-height:16px;height:16px;font-size:10.5px;color:#dcdcdc;font-weight:bold;text-align:left;transform:scaleX(0.93);transform-origin:left center;">COMP</div><div class="t" style="left:986.00px;top:592.30px;width:130px;line-height:16px;height:16px;font-size:11.5px;color:#515151;font-weight:bold;text-align:center;">SAMPLER 2</div><div class="t" style="left:983.80px;top:647.30px;width:40px;line-height:16px;height:16px;font-size:10.5px;color:#1c1c1c;font-weight:bold;text-align:center;transform:scaleX(0.88);transform-origin:center center;">PAN</div><div class="t" style="left:1055.00px;top:625.00px;width:20px;line-height:16px;height:16px;font-size:11px;color:#111;font-weight:bold;text-align:center;transform:scaleX(0.88);transform-origin:center center;">M</div><div class="t" style="left:1084.90px;top:625.00px;width:20px;line-height:16px;height:16px;font-size:11px;color:#111;font-weight:bold;text-align:center;transform:scaleX(0.88);transform-origin:center center;">S</div><div class="t" style="left:1033.40px;top:666.00px;width:20px;line-height:16px;height:16px;font-size:10.5px;color:#9c9c9c;font-weight:bold;text-align:center;">S</div><div class="t" style="left:1033.40px;top:685.50px;width:20px;line-height:16px;height:16px;font-size:10.5px;color:#9c9c9c;font-weight:bold;text-align:center;">E</div><div class="t" style="left:1033.40px;top:704.50px;width:20px;line-height:16px;height:16px;font-size:10.5px;color:#9c9c9c;font-weight:bold;text-align:center;">N</div><div class="t" style="left:1033.40px;top:723.00px;width:20px;line-height:16px;height:16px;font-size:10.5px;color:#9c9c9c;font-weight:bold;text-align:center;">D</div><div class="t" style="left:1033.40px;top:742.00px;width:20px;line-height:16px;height:16px;font-size:10.5px;color:#9c9c9c;font-weight:bold;text-align:center;">S</div><div class="t" style="left:1083.00px;top:658.70px;width:40px;line-height:16px;height:16px;font-size:10.5px;color:#1c1c1c;font-weight:bold;text-align:left;transform:scaleX(0.85);transform-origin:left center;">REV A</div><div class="t" style="left:1083.00px;top:688.70px;width:40px;line-height:16px;height:16px;font-size:10.5px;color:#1c1c1c;font-weight:bold;text-align:left;transform:scaleX(0.85);transform-origin:left center;">REV B</div><div class="t" style="left:1083.00px;top:718.70px;width:40px;line-height:16px;height:16px;font-size:10.5px;color:#1c1c1c;font-weight:bold;text-align:left;transform:scaleX(0.85);transform-origin:left center;">DLY A</div><div class="t" style="left:1083.00px;top:747.70px;width:40px;line-height:16px;height:16px;font-size:10.5px;color:#1c1c1c;font-weight:bold;text-align:left;transform:scaleX(0.85);transform-origin:left center;">DLY B</div><div class="t" style="left:1121.30px;top:81.00px;width:160px;line-height:16px;height:16px;font-size:12px;color:#bdbdbd;font-weight:bold;text-align:center;transform:scaleX(0.9);transform-origin:center center;letter-spacing:2.1px;text-indent:2.1px;">INSERT EFFECTS</div><div class="t" style="left:1140.50px;top:105.30px;width:100px;line-height:16px;height:16px;font-size:12px;color:#bdbdbd;font-weight:bold;text-align:center;transform:scaleX(0.92);transform-origin:center center;">SATURATE</div><div class="t" style="left:1148.50px;top:128.90px;width:50px;line-height:16px;height:16px;font-size:11px;color:#bdbdbd;font-weight:bold;text-align:left;transform:scaleX(0.88);transform-origin:left center;">Type1</div><div class="t" style="left:1148.50px;top:145.00px;width:50px;line-height:16px;height:16px;font-size:11px;color:#bdbdbd;font-weight:bold;text-align:left;transform:scaleX(0.88);transform-origin:left center;">Type2</div><div class="t" style="left:1148.50px;top:161.10px;width:50px;line-height:16px;height:16px;font-size:11px;color:#bdbdbd;font-weight:bold;text-align:left;transform:scaleX(0.88);transform-origin:left center;">Type3</div><div class="t" style="left:1196.20px;top:163.30px;width:50px;line-height:16px;height:16px;font-size:10.5px;color:#bdbdbd;font-weight:bold;text-align:center;transform:scaleX(0.88);transform-origin:center center;">DRIVE</div><div class="t" style="left:1233.70px;top:163.30px;width:50px;line-height:16px;height:16px;font-size:10.5px;color:#bdbdbd;font-weight:bold;text-align:center;transform:scaleX(0.88);transform-origin:center center;">MIX</div><div class="t" style="left:1121.30px;top:197.80px;width:160px;line-height:16px;height:16px;font-size:12px;color:#bdbdbd;font-weight:bold;text-align:center;transform:scaleX(0.9);transform-origin:center center;letter-spacing:2.1px;text-indent:2.1px;">SEND EFFECTS</div><div class="t" style="left:1139.40px;top:223.00px;width:100px;line-height:16px;height:16px;font-size:12px;color:#bdbdbd;font-weight:bold;text-align:center;transform:scaleX(0.92);transform-origin:center center;">REVERB A</div><div class="t" style="left:1132.00px;top:244.70px;width:80px;line-height:16px;height:16px;font-size:10px;color:#bdbdbd;font-weight:bold;text-align:left;transform:scaleX(0.96);transform-origin:left center;">IMPULSE</div><div class="t" style="left:1136.60px;top:263.15px;width:130px;line-height:16px;height:16px;font-size:12.5px;color:#ececec;font-weight:bold;text-align:center;transform:scaleX(0.96);transform-origin:center center;">Ambience Near</div><div class="t" style="left:1139.50px;top:293.20px;width:100px;line-height:16px;height:16px;font-size:12px;color:#bdbdbd;font-weight:bold;text-align:center;transform:scaleX(0.92);transform-origin:center center;">REVERB B</div><div class="t" style="left:1137.70px;top:344.20px;width:50px;line-height:16px;height:16px;font-size:10.5px;color:#bdbdbd;font-weight:bold;text-align:center;transform:scaleX(0.88);transform-origin:center center;">PRE</div><div class="t" style="left:1175.90px;top:344.20px;width:50px;line-height:16px;height:16px;font-size:10.5px;color:#bdbdbd;font-weight:bold;text-align:center;transform:scaleX(0.88);transform-origin:center center;">SIZE</div><div class="t" style="left:1213.70px;top:344.20px;width:50px;line-height:16px;height:16px;font-size:10.5px;color:#bdbdbd;font-weight:bold;text-align:center;transform:scaleX(0.88);transform-origin:center center;">DAMP</div><div class="t" style="left:1132.00px;top:361.50px;width:80px;line-height:16px;height:16px;font-size:10px;color:#bdbdbd;font-weight:bold;text-align:left;transform:scaleX(0.95);transform-origin:left center;">ROOM TYPE</div><div class="t" style="left:1136.60px;top:380.30px;width:130px;line-height:16px;height:16px;font-size:12.5px;color:#ececec;font-weight:bold;text-align:center;transform:scaleX(0.96);transform-origin:center center;">Medium Hall</div><div class="t" style="left:1136.60px;top:410.20px;width:100px;line-height:16px;height:16px;font-size:12px;color:#bdbdbd;font-weight:bold;text-align:center;transform:scaleX(0.92);transform-origin:center center;">DELAY A</div><div class="t" style="left:1118.70px;top:461.30px;width:50px;line-height:16px;height:16px;font-size:10.5px;color:#bdbdbd;font-weight:bold;text-align:center;transform:scaleX(0.88);transform-origin:center center;">LEFT</div><div class="t" style="left:1156.60px;top:461.30px;width:50px;line-height:16px;height:16px;font-size:10.5px;color:#bdbdbd;font-weight:bold;text-align:center;transform:scaleX(0.88);transform-origin:center center;">RIGHT</div><div class="t" style="left:1194.80px;top:461.30px;width:50px;line-height:16px;height:16px;font-size:10.5px;color:#bdbdbd;font-weight:bold;text-align:center;transform:scaleX(0.88);transform-origin:center center;">FB</div><div class="t" style="left:1232.60px;top:461.30px;width:50px;line-height:16px;height:16px;font-size:10.5px;color:#bdbdbd;font-weight:bold;text-align:center;transform:scaleX(0.88);transform-origin:center center;">CUT</div><div class="t" style="left:1136.00px;top:485.20px;width:130px;line-height:16px;height:16px;font-size:12.5px;color:#ececec;font-weight:bold;text-align:center;transform:scaleX(0.96);transform-origin:center center;">High Pass</div><div class="t" style="left:1136.00px;top:514.00px;width:100px;line-height:16px;height:16px;font-size:12px;color:#bdbdbd;font-weight:bold;text-align:center;transform:scaleX(0.92);transform-origin:center center;">DELAY B</div><div class="t" style="left:1137.90px;top:565.10px;width:50px;line-height:16px;height:16px;font-size:10.5px;color:#bdbdbd;font-weight:bold;text-align:center;transform:scaleX(0.88);transform-origin:center center;">TIME</div><div class="t" style="left:1175.70px;top:565.10px;width:50px;line-height:16px;height:16px;font-size:10.5px;color:#bdbdbd;font-weight:bold;text-align:center;transform:scaleX(0.88);transform-origin:center center;">FB</div><div class="t" style="left:1214.00px;top:565.10px;width:50px;line-height:16px;height:16px;font-size:10.5px;color:#bdbdbd;font-weight:bold;text-align:center;transform:scaleX(0.88);transform-origin:center center;">DAMP</div><div class="t" style="left:1151.00px;top:592.00px;width:100px;line-height:16px;height:16px;font-size:12px;color:#bdbdbd;font-weight:bold;text-align:center;transform:scaleX(0.93);transform-origin:center center;">MASTER</div><div class="t" style="left:1119.00px;top:646.50px;width:50px;line-height:16px;height:16px;font-size:10.5px;color:#bdbdbd;font-weight:bold;text-align:center;transform:scaleX(0.88);transform-origin:center center;">PAN</div><div class="t" style="left:1204.50px;top:617.50px;width:60px;line-height:16px;height:16px;font-size:11px;color:#bdbdbd;font-weight:bold;text-align:right;transform:scaleX(0.88);transform-origin:right center;">Kill EQ</div><div class="t" style="left:1178.40px;top:638.30px;width:40px;line-height:16px;height:16px;font-size:11.5px;color:#ececec;font-weight:bold;text-align:center;">Lo</div><div class="t" style="left:1205.50px;top:638.30px;width:40px;line-height:16px;height:16px;font-size:11.5px;color:#ececec;font-weight:bold;text-align:center;">Mid</div><div class="t" style="left:1232.50px;top:638.30px;width:40px;line-height:16px;height:16px;font-size:11.5px;color:#ececec;font-weight:bold;text-align:center;">Hi</div><div class="t" style="left:1180.60px;top:665.30px;width:90px;line-height:16px;height:16px;font-size:11.5px;color:#bdbdbd;font-weight:bold;text-align:center;transform:scaleX(0.81);transform-origin:center center;">COMPRESSOR</div><div class="t" style="left:1175.20px;top:708.80px;width:60px;line-height:16px;height:16px;font-size:10.5px;color:#bdbdbd;font-weight:bold;text-align:center;transform:scaleX(0.88);transform-origin:center center;">THRESH</div><div class="t" style="left:1216.80px;top:708.80px;width:60px;line-height:16px;height:16px;font-size:10.5px;color:#bdbdbd;font-weight:bold;text-align:center;transform:scaleX(0.88);transform-origin:center center;">RATIO</div><div class="t" style="left:1175.00px;top:756.60px;width:60px;line-height:16px;height:16px;font-size:10.5px;color:#bdbdbd;font-weight:bold;text-align:center;transform:scaleX(0.88);transform-origin:center center;">ATK</div><div class="t" style="left:1216.80px;top:756.60px;width:60px;line-height:16px;height:16px;font-size:10.5px;color:#bdbdbd;font-weight:bold;text-align:center;transform:scaleX(0.88);transform-origin:center center;">REL</div>
</body></html>
